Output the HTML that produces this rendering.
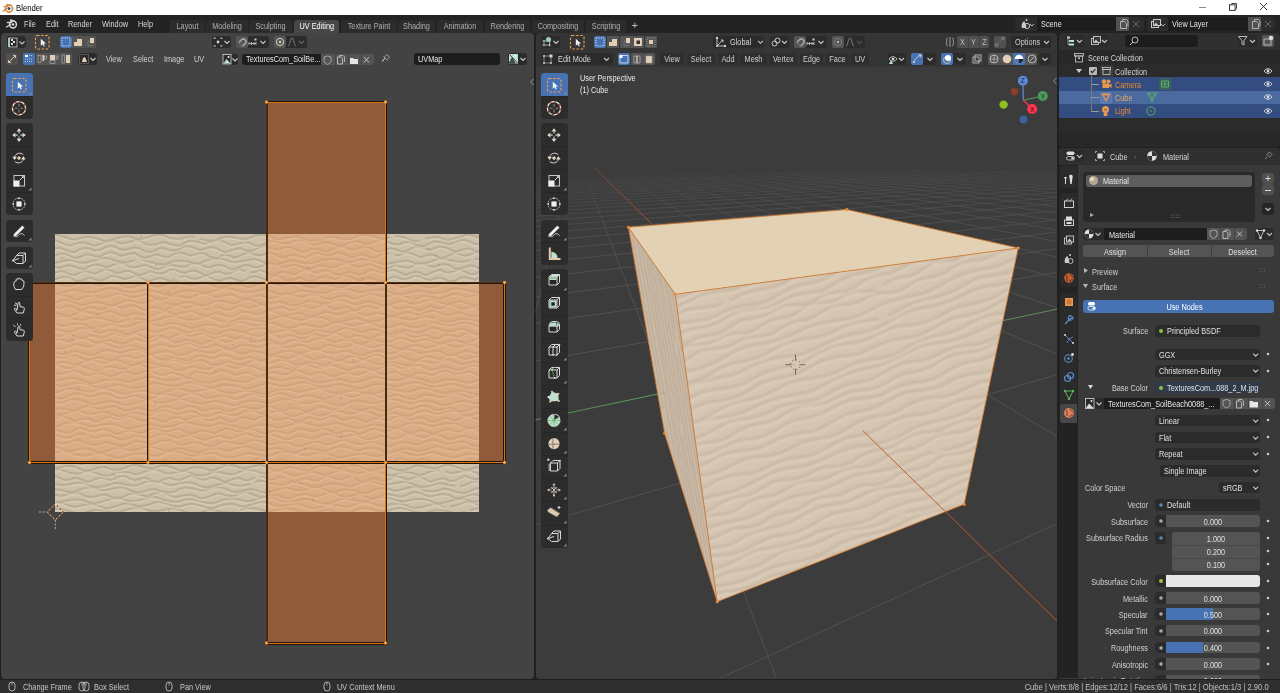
<!DOCTYPE html><html><head><meta charset="utf-8"><style>
html,body{margin:0;padding:0;width:1280px;height:693px;overflow:hidden;background:#202020;}
body{position:relative;font-family:"Liberation Sans",sans-serif;}
div{position:absolute;box-sizing:border-box;}
.t{white-space:nowrap;}
</style></head><body>
<div style="left:0px;top:0px;width:1280px;height:15px;background:#ffffff;"></div>
<svg style="position:absolute;left:2px;top:3px;" width="12" height="10" viewBox="0 0 12 10"><circle cx="7" cy="5.5" r="3.6" fill="none" stroke="#e0873a" stroke-width="1.6"/><circle cx="7" cy="5.5" r="1.5" fill="#265787"/><path d="M1 8 L5 5.5 M2 3.6 L6 3.6 M5 1.5 L8 2.5" stroke="#e0873a" stroke-width="1.4" stroke-linecap="round"/></svg>
<div class="t" style="left:16px;top:1.9px;height:12px;line-height:12px;color:#000;font-size:9px;transform:scaleX(0.86);transform-origin:0 0;">Blender</div>
<div style="left:1199px;top:6.5px;width:7px;height:1px;background:#9a8a78;"></div>
<svg style="position:absolute;left:1228px;top:2px;" width="10" height="10" viewBox="0 0 10 10"><rect x="1.5" y="2.8" width="5.6" height="5.6" fill="none" stroke="#222" stroke-width="0.9"/><path d="M2.8 2.8 L3.8 1.5 H8.5 V6.6 L7.1 8.4" fill="none" stroke="#333" stroke-width="0.9"/></svg>
<svg style="position:absolute;left:1259px;top:2px;" width="10" height="10" viewBox="0 0 10 10"><path d="M1 1 L8 8 M8 1 L1 8" stroke="#222" stroke-width="0.9"/></svg>
<div style="left:0px;top:15px;width:1280px;height:18px;background:#232323;"></div>
<svg style="position:absolute;left:5px;top:18px;" width="13" height="12" viewBox="0 0 13 12"><circle cx="8" cy="6.5" r="3.4" fill="none" stroke="#d8d8d8" stroke-width="1.5"/><circle cx="8" cy="6.5" r="1.3" fill="#d8d8d8"/><path d="M1.5 9 L5.5 6.5 M2.5 4.5 L6.5 4.5 M5.5 2 L8.5 3" stroke="#d8d8d8" stroke-width="1.4" stroke-linecap="round"/></svg>
<div class="t" style="left:24px;top:18.4px;height:12px;line-height:12px;color:#d9d9d9;font-size:8.5px;transform:scaleX(0.86);transform-origin:0 0;">File</div>
<div class="t" style="left:45.5px;top:18.4px;height:12px;line-height:12px;color:#d9d9d9;font-size:8.5px;transform:scaleX(0.86);transform-origin:0 0;">Edit</div>
<div class="t" style="left:68px;top:18.4px;height:12px;line-height:12px;color:#d9d9d9;font-size:8.5px;transform:scaleX(0.86);transform-origin:0 0;">Render</div>
<div class="t" style="left:101.5px;top:18.4px;height:12px;line-height:12px;color:#d9d9d9;font-size:8.5px;transform:scaleX(0.86);transform-origin:0 0;">Window</div>
<div class="t" style="left:138px;top:18.4px;height:12px;line-height:12px;color:#d9d9d9;font-size:8.5px;transform:scaleX(0.86);transform-origin:0 0;">Help</div>
<div style="left:170px;top:19.5px;width:35px;height:13.5px;background:#2c2c2c;border-radius:3px 3px 0 0"></div>
<div class="t" style="left:170px;top:20.4px;width:35px;text-align:center;height:12px;line-height:12px;color:#b0b0b0;font-size:8.5px;transform:scaleX(0.86);transform-origin:50% 0;">Layout</div>
<div style="left:206px;top:19.5px;width:42px;height:13.5px;background:#2c2c2c;border-radius:3px 3px 0 0"></div>
<div class="t" style="left:206px;top:20.4px;width:42px;text-align:center;height:12px;line-height:12px;color:#b0b0b0;font-size:8.5px;transform:scaleX(0.86);transform-origin:50% 0;">Modeling</div>
<div style="left:249px;top:19.5px;width:43px;height:13.5px;background:#2c2c2c;border-radius:3px 3px 0 0"></div>
<div class="t" style="left:249px;top:20.4px;width:43px;text-align:center;height:12px;line-height:12px;color:#b0b0b0;font-size:8.5px;transform:scaleX(0.86);transform-origin:50% 0;">Sculpting</div>
<div style="left:293.5px;top:19.5px;width:45.5px;height:13.5px;background:#474747;border-radius:3px 3px 0 0"></div>
<div class="t" style="left:293.5px;top:20.4px;width:45.5px;text-align:center;height:12px;line-height:12px;color:#ffffff;font-size:8.5px;transform:scaleX(0.86);transform-origin:50% 0;">UV Editing</div>
<div style="left:341px;top:19.5px;width:56px;height:13.5px;background:#2c2c2c;border-radius:3px 3px 0 0"></div>
<div class="t" style="left:341px;top:20.4px;width:56px;text-align:center;height:12px;line-height:12px;color:#b0b0b0;font-size:8.5px;transform:scaleX(0.86);transform-origin:50% 0;">Texture Paint</div>
<div style="left:398px;top:19.5px;width:37px;height:13.5px;background:#2c2c2c;border-radius:3px 3px 0 0"></div>
<div class="t" style="left:398px;top:20.4px;width:37px;text-align:center;height:12px;line-height:12px;color:#b0b0b0;font-size:8.5px;transform:scaleX(0.86);transform-origin:50% 0;">Shading</div>
<div style="left:437px;top:19.5px;width:46px;height:13.5px;background:#2c2c2c;border-radius:3px 3px 0 0"></div>
<div class="t" style="left:437px;top:20.4px;width:46px;text-align:center;height:12px;line-height:12px;color:#b0b0b0;font-size:8.5px;transform:scaleX(0.86);transform-origin:50% 0;">Animation</div>
<div style="left:485px;top:19.5px;width:45px;height:13.5px;background:#2c2c2c;border-radius:3px 3px 0 0"></div>
<div class="t" style="left:485px;top:20.4px;width:45px;text-align:center;height:12px;line-height:12px;color:#b0b0b0;font-size:8.5px;transform:scaleX(0.86);transform-origin:50% 0;">Rendering</div>
<div style="left:532px;top:19.5px;width:52px;height:13.5px;background:#2c2c2c;border-radius:3px 3px 0 0"></div>
<div class="t" style="left:532px;top:20.4px;width:52px;text-align:center;height:12px;line-height:12px;color:#b0b0b0;font-size:8.5px;transform:scaleX(0.86);transform-origin:50% 0;">Compositing</div>
<div style="left:586px;top:19.5px;width:40px;height:13.5px;background:#2c2c2c;border-radius:3px 3px 0 0"></div>
<div class="t" style="left:586px;top:20.4px;width:40px;text-align:center;height:12px;line-height:12px;color:#b0b0b0;font-size:8.5px;transform:scaleX(0.86);transform-origin:50% 0;">Scripting</div>
<div class="t" style="left:631.5px;top:18.9px;height:12px;line-height:12px;color:#bbb;font-size:11px;transform:scaleX(1.0);transform-origin:0 0;">+</div>
<div style="left:1015px;top:17px;width:129px;height:14px;background:#2c2c2c;border-radius:3px"></div>
<div style="left:1037px;top:17px;width:79px;height:14px;background:#1d1d1d;"></div>
<div style="left:1116px;top:17px;width:13px;height:14px;background:#505050;"></div>
<div class="t" style="left:1041px;top:17.799999999999997px;height:12px;line-height:12px;color:#e0e0e0;font-size:8.5px;transform:scaleX(0.86);transform-origin:0 0;">Scene</div>
<svg style="position:absolute;left:1118px;top:18px;" width="11" height="12" viewBox="0 0 11 12"><path d="M2.5 3.5 H6.5 L8.5 5.5 V10.5 H2.5 Z" fill="none" stroke="#bbb" stroke-width="0.9"/><path d="M4.5 3.5 V1.5 H8.5 L10 3 V8.5" fill="none" stroke="#bbb" stroke-width="0.9"/></svg>
<svg style="position:absolute;left:1131px;top:19px;" width="10" height="10" viewBox="0 0 10 10"><path d="M2 2 L8 8 M8 2 L2 8" stroke="#666" stroke-width="1"/></svg>
<svg style="position:absolute;left:1019px;top:18px;" width="16" height="12" viewBox="0 0 16 12"><path d="M3 10 C2 7 3.5 4 5.5 3 C6 6 8 6 7 10 Z" fill="#c9c9c9"/><circle cx="8" cy="8" r="2.6" fill="none" stroke="#c9c9c9" stroke-width="1"/><circle cx="7.5" cy="2" r="1" fill="#c9c9c9"/><path d="M11 6 L13 8 L15 6" stroke="#bbb" fill="none" stroke-width="1"/></svg>
<div style="left:1147px;top:17px;width:128px;height:14px;background:#2c2c2c;border-radius:3px"></div>
<div style="left:1168px;top:17px;width:80px;height:14px;background:#1d1d1d;"></div>
<div style="left:1248px;top:17px;width:13px;height:14px;background:#505050;"></div>
<div class="t" style="left:1172px;top:17.799999999999997px;height:12px;line-height:12px;color:#e0e0e0;font-size:8.5px;transform:scaleX(0.86);transform-origin:0 0;">View Layer</div>
<svg style="position:absolute;left:1250px;top:18px;" width="11" height="12" viewBox="0 0 11 12"><path d="M2.5 3.5 H6.5 L8.5 5.5 V10.5 H2.5 Z" fill="none" stroke="#bbb" stroke-width="0.9"/><path d="M4.5 3.5 V1.5 H8.5 L10 3 V8.5" fill="none" stroke="#bbb" stroke-width="0.9"/></svg>
<svg style="position:absolute;left:1263px;top:19px;" width="10" height="10" viewBox="0 0 10 10"><path d="M2 2 L8 8 M8 2 L2 8" stroke="#666" stroke-width="1"/></svg>
<svg style="position:absolute;left:1150px;top:18px;" width="16" height="12" viewBox="0 0 16 12"><rect x="1.5" y="3.5" width="7" height="6" fill="none" stroke="#c9c9c9" stroke-width="1"/><rect x="3.5" y="1.5" width="7" height="6" fill="#3a3a3a" stroke="#c9c9c9" stroke-width="1"/><path d="M4 7 L6 4.5 L8 7 Z" fill="#c9c9c9"/><path d="M11 6 L13 8 L15 6" stroke="#bbb" fill="none" stroke-width="1"/></svg>
<div style="left:1px;top:33px;width:532.5px;height:645.7px;background:#434343;border-radius:4px"></div>
<div style="left:6.5px;top:36px;width:19px;height:12px;background:#2b2b2b;border-radius:3px;"></div>
<svg style="position:absolute;left:8px;top:37px;" width="18" height="11" viewBox="0 0 18 11"><rect x="1" y="1" width="8" height="9" fill="#2a2a2a" stroke="#cfcfcf" stroke-width="0.8"/><path d="M3 2 H5 V4 H3 Z M5 4 H7 V6 H5 Z M3 6 H5 V8 H3 Z" fill="#ddd"/><path d="M1 1 V10" stroke="#b9e3d0" stroke-width="1.5"/><path d="M11.5 4.5 L14.0 7.0 L16.5 4.5" fill="none" stroke="#c8c8c8" stroke-width="1.1"/></svg>
<svg style="position:absolute;left:34px;top:34px;" width="16" height="16" viewBox="0 0 16 16"><rect x="1.5" y="1.5" width="13.5" height="13.5" rx="1.5" fill="none" stroke="#e8a050" stroke-width="1.15" stroke-dasharray="2.6 1.5"/><path d="M6.8 4.8 V11.8 L8.5 10.2 L9.7 12.5 L10.8 12 L9.7 9.7 L12 9.6 Z" fill="#f2f2f2"/></svg>
<div style="left:60px;top:36px;width:11.5px;height:12px;background:#4772b3;border-radius:2px;"></div>
<div style="left:72px;top:36px;width:11.5px;height:12px;background:#545454;border-radius:0px;"></div>
<div style="left:84px;top:36px;width:12px;height:12px;background:#545454;border-radius:2px;"></div>
<svg style="position:absolute;left:60px;top:36px;" width="12" height="12" viewBox="0 0 12 12"><rect x="2" y="2" width="8" height="8" fill="none" stroke="#eee" stroke-width="0.9" stroke-dasharray="1.2 1.2"/></svg>
<svg style="position:absolute;left:72px;top:36px;" width="12" height="12" viewBox="0 0 12 12"><path d="M2 10 V6 H5 V3 H10 V10 Z" fill="#e3cfb5"/></svg>
<svg style="position:absolute;left:84px;top:36px;" width="12" height="12" viewBox="0 0 12 12"><path d="M4 5 H8 V10 H4 Z" fill="none" stroke="#aaa" stroke-width="0.6" stroke-dasharray="1 1"/><path d="M6 2 H10 V7 H6 Z" fill="#e3cfb5"/></svg>
<div style="left:212px;top:36px;width:19px;height:12px;background:#2b2b2b;border-radius:3px;"></div>
<svg style="position:absolute;left:212px;top:36px;" width="19" height="12" viewBox="0 0 19 12"><path d="M2 3 V2 H4 M8 2 H10 V3 M10 9 V10 H8 M4 10 H2 V9" fill="none" stroke="#ccc" stroke-width="0.9"/><circle cx="6" cy="6" r="1.4" fill="#b9e3d0"/><path d="M12.5 5 L15.0 7.5 L17.5 5" fill="none" stroke="#c8c8c8" stroke-width="1.1"/></svg>
<div style="left:236px;top:36px;width:33px;height:12px;background:#2b2b2b;border-radius:3px;"></div>
<div style="left:236px;top:36px;width:12px;height:12px;background:#555;border-radius:2px;"></div>
<svg style="position:absolute;left:236px;top:36px;" width="33" height="12" viewBox="0 0 33 12"><path d="M2.8 6.5 L5.5 3.8 A2.6 2.6 0 0 1 9.2 7.5 L6.5 10.2" fill="none" stroke="#a8a8a8" stroke-width="1.6"/><path d="M2.8 6.5 L4.2 7.9 M6.5 10.2 L5.1 8.8" stroke="#777" stroke-width="1.6"/><path d="M13 7.5 H20 M13 6 V9 M15.5 6 V9 M18 6 V9 M20 6 V9" stroke="#ddd" stroke-width="0.7"/><rect x="18.5" y="2.5" width="2" height="2" fill="#b9e3d0"/><path d="M24.5 5 L27.0 7.5 L29.5 5" fill="none" stroke="#c8c8c8" stroke-width="1.1"/></svg>
<div style="left:274px;top:36px;width:33px;height:12px;background:#2b2b2b;border-radius:3px;"></div>
<div style="left:274px;top:36px;width:12px;height:12px;background:#555;border-radius:2px;"></div>
<svg style="position:absolute;left:274px;top:36px;" width="33" height="12" viewBox="0 0 33 12"><circle cx="6" cy="6" r="3.6" fill="none" stroke="#e3cfb5" stroke-width="1"/><circle cx="6" cy="6" r="1.2" fill="#b9e3d0"/><path d="M14 10 C16 10 16 2 18 2 C20 2 20 10 22 10" fill="none" stroke="#888" stroke-width="0.9"/><path d="M25 5 L27.5 7.5 L30 5" fill="none" stroke="#666" stroke-width="1.1"/></svg>
<div style="left:6px;top:53px;width:12px;height:12px;background:#505050;border-radius:2px;"></div>
<svg style="position:absolute;left:6px;top:53px;" width="12" height="12" viewBox="0 0 12 12"><path d="M2.5 9.5 L9.5 2.5 M2.5 9.5 V7 M2.5 9.5 H5 M9.5 2.5 V5 M9.5 2.5 H7" fill="none" stroke="#e3cfb5" stroke-width="0.9"/></svg>
<div style="left:23px;top:53px;width:12px;height:12px;background:#4772b3;border-radius:2px;"></div>
<div style="left:36px;top:53px;width:12px;height:12px;background:#545454;border-radius:0px;"></div>
<div style="left:48px;top:53px;width:12px;height:12px;background:#545454;border-radius:0px;"></div>
<div style="left:60px;top:53px;width:12px;height:12px;background:#545454;border-radius:2px;"></div>
<svg style="position:absolute;left:23px;top:53px;" width="12" height="12" viewBox="0 0 12 12"><rect x="2" y="2" width="3" height="2" fill="#fff"/><path d="M2 6 H10 M2 8.5 H10 M6 2.5 H10" stroke="#ddd" stroke-width="0.8" stroke-dasharray="1 1"/></svg>
<svg style="position:absolute;left:36px;top:53px;" width="12" height="12" viewBox="0 0 12 12"><rect x="2" y="2.5" width="3" height="7" fill="none" stroke="#aaa" stroke-width="0.7"/><rect x="6.5" y="2" width="1.6" height="6" fill="#e3cfb5"/><rect x="8.5" y="3" width="2" height="3" fill="none" stroke="#aaa" stroke-width="0.7"/></svg>
<svg style="position:absolute;left:48px;top:53px;" width="12" height="12" viewBox="0 0 12 12"><rect x="2" y="2" width="5" height="5" fill="#e3cfb5"/><rect x="2" y="7.5" width="5" height="3" fill="none" stroke="#aaa" stroke-width="0.7"/><rect x="8" y="3" width="2" height="3" fill="none" stroke="#aaa" stroke-width="0.7"/></svg>
<svg style="position:absolute;left:60px;top:53px;" width="12" height="12" viewBox="0 0 12 12"><rect x="2" y="2" width="2.5" height="8" fill="none" stroke="#aaa" stroke-width="0.7"/><rect x="6" y="2" width="4" height="8" fill="#e3cfb5"/></svg>
<div style="left:78px;top:53px;width:19px;height:12px;background:#2b2b2b;border-radius:3px;"></div>
<svg style="position:absolute;left:78px;top:53px;" width="19" height="12" viewBox="0 0 19 12"><rect x="1.5" y="1.5" width="9" height="9" fill="none" stroke="#aaa" stroke-width="0.7" stroke-dasharray="1 1"/><path d="M4 9 L5 5 L7 4 L9 9 Z" fill="#e3cfb5"/><path d="M12.5 5 L15.0 7.5 L17.5 5" fill="none" stroke="#c8c8c8" stroke-width="1.1"/></svg>
<div class="t" style="left:106px;top:53.4px;height:12px;line-height:12px;color:#d0d0d0;font-size:8.5px;transform:scaleX(0.86);transform-origin:0 0;">View</div>
<div class="t" style="left:132.5px;top:53.4px;height:12px;line-height:12px;color:#d0d0d0;font-size:8.5px;transform:scaleX(0.86);transform-origin:0 0;">Select</div>
<div class="t" style="left:163.5px;top:53.4px;height:12px;line-height:12px;color:#d0d0d0;font-size:8.5px;transform:scaleX(0.86);transform-origin:0 0;">Image</div>
<div class="t" style="left:194px;top:53.4px;height:12px;line-height:12px;color:#d0d0d0;font-size:8.5px;transform:scaleX(0.86);transform-origin:0 0;">UV</div>
<div style="left:222px;top:54px;width:16px;height:11px;background:#2b2b2b;border-radius:3px;"></div>
<svg style="position:absolute;left:222px;top:54px;" width="16" height="11" viewBox="0 0 16 11"><rect x="1" y="0.5" width="8" height="9.5" fill="none" stroke="#ddd" stroke-width="0.8"/><path d="M1.5 9.5 L4.5 5 L8.5 9.5 Z" fill="#b9e3d0"/><circle cx="6.5" cy="3" r="0.9" fill="#fff"/><path d="M10.5 4.5 L13.0 7.0 L15.5 4.5" fill="none" stroke="#c8c8c8" stroke-width="1.1"/></svg>
<div style="left:242px;top:53.5px;width:79px;height:11.5px;background:#1d1d1d;border-radius:3px 0 0 3px"></div>
<div class="t" style="left:246px;top:53.4px;height:12px;line-height:12px;color:#e6e6e6;font-size:8.5px;transform:scaleX(0.86);transform-origin:0 0;">TexturesCom_SoilBe...</div>
<div style="left:321px;top:53.5px;width:53px;height:11.5px;background:#545454;border-radius:0 3px 3px 0"></div>
<svg style="position:absolute;left:321px;top:53.5px;" width="53" height="11.5" viewBox="0 0 53 11.5"><path d="M6.5 2 L10 3 V6.5 C10 8.5 8 10 6.5 10.5 C5 10 3 8.5 3 6.5 V3 Z" fill="none" stroke="#bbb" stroke-width="0.8"/><path d="M16.5 3 H20 L21.5 4.5 V10 H16.5 Z M18.5 3 V1.5 H22 L23.5 3 V8" fill="none" stroke="#ccc" stroke-width="0.8"/><path d="M29 4 H32 L33 5 H37 V10 H29 Z" fill="#e6e6e6"/><path d="M43 3 L48 8.5 M48 3 L43 8.5" stroke="#ccc" stroke-width="0.9"/></svg>
<div style="left:334.5px;top:53.5px;width:0.6px;height:11.5px;background:#444;"></div>
<div style="left:347.5px;top:53.5px;width:0.6px;height:11.5px;background:#444;"></div>
<div style="left:360.5px;top:53.5px;width:0.6px;height:11.5px;background:#444;"></div>
<svg style="position:absolute;left:378px;top:53px;" width="14" height="12" viewBox="0 0 14 12"><path d="M4 9 L6.5 6.5 M6.5 4 L9 1.5 L11.5 4 L9 6.5 M5.5 3.5 L9.5 7.5 M7 5 L4 8" fill="none" stroke="#aaa" stroke-width="0.9"/></svg>
<div style="left:414px;top:53px;width:86px;height:12px;background:#1d1d1d;border-radius:3px"></div>
<div class="t" style="left:418px;top:53.4px;height:12px;line-height:12px;color:#e6e6e6;font-size:8.5px;transform:scaleX(0.86);transform-origin:0 0;">UVMap</div>
<div style="left:508px;top:53px;width:19px;height:12px;background:#2b2b2b;border-radius:3px;"></div>
<svg style="position:absolute;left:508px;top:53px;" width="19" height="12" viewBox="0 0 19 12"><rect x="1" y="1" width="9" height="9.5" fill="#b9e3d0"/><path d="M1.5 1.5 L9.5 10 M1.5 10 L4 5 L7 10 Z" stroke="#2a2a2a" stroke-width="0.9" fill="#555"/><circle cx="7.5" cy="3" r="0.9" fill="#fff"/><path d="M12.5 5 L15.0 7.5 L17.5 5" fill="none" stroke="#c8c8c8" stroke-width="1.1"/></svg>
<svg style="position:absolute;left:528.5px;top:76.5px;" width="6" height="10" viewBox="0 0 6 10"><path d="M4.5 2 L1.5 5 L4.5 8" fill="none" stroke="#999" stroke-width="0.9"/></svg>
<svg style="position:absolute;left:0;top:0" width="0" height="0"><defs><path id="rip" d="M-5 1.0l5 -.7 5 1.2 5 1.5 5 1.7 5 .8M20 5.5l5 -1.4 5 -1.3 5 .1 5 .8 5 1.6 5 1.7 5 -.6 5 -1.9 5 -1.3 5 -1 5 .3 5 1.7M80 4.2l5 .6 5 -1.1 5 -1.3 5 -1.5 5 -.7 5 1.7 5 2 5 .7 5 .1 5 -1.1 5 -1.4 5 .5M145 4.6l5 1.3 5 .9 5 -.5 5 -2.3 5 -1.4 5 .2 5 .6 5 1.2 5 .5 5 -1.6 5 -2 5 -.8 5 0 5 1.5 5 2.2 5 .3 5 -1 5 -.8 5 -.7 5 .6 5 2.3 5 1.5 5 -.2 5 -.9M270 3.8l5 -1.5 5 .9 5 1.3 5 .4 5 -.1 5 -1.6 5 -2.3 5 -.4 5 1.1 5 1.2 5 1.5 5 .3 5 -1.6M340 1.9l5 .5 5 1 5 2 5 1.6 5 -.8M370 4.5l5 -1 5 -.7 5 .8 5 1.7 5 .2 5 -1.4M400 4.1l5 -1.5 5 -1.7 5 -.5 5 1.8 5 1.5M-5 6.9l5 -.8 5 2 5 2 5 1.5 5 -1.8 5 -1.5 5 .4 5 1.3 5 1.6 5 -1.7 5 -2.4 5 -1.2 5 .7 5 2.2 5 -.4 5 -1.3 5 -1.5 5 .7 5 3 5 1.1 5 -.2 5 -2 5 -.5 5 1.9 5 1.1 5 .1 5 -2.7 5 -2 5 .6 5 1.2 5 1.3 5 -1.8 5 -1.7 5 .1 5 1.8 5 2.8 5 -.4 5 -1.3 5 -1 5 .8 5 2.5 5 -.1 5 -1.5 5 -2.5 5 -.7 5 1.9 5 .7 5 -.4 5 -2.3 5 -.9 5 1.8 5 2 5 1.4 5 -1.6 5 -1.2 5 .7 5 1.6 5 1.8 5 -1.6 5 -2.2 5 -1.2 5 .6 5 2 5 -.7 5 -1.6 5 -1.8 5 .5 5 2.9 5 1 5 -.2 5 -1.8 5 -.2 5 2.2 5 1.4 5 .3 5 -2.6 5 -1.8 5 .6 5 1.1 5 1 5 -2.1 5 -1.9 5 -.2 5 1.6 5 2.6 5 -.4M-5 15.9l5 -1.9 5 -.4 5 2.1 5 1.8 5 .4 5 -2.8 5 -1.1 5 .5 5 1.8 5 -.4 5 -2.7 5 -1.3 5 .6 5 2.8 5 .2 5 -1.1 5 -1.2 5 1.2 5 2.9 5 .4 5 -1.2 5 -2.6 5 .7 5 1.4 5 .5 5 -2 5 -2.6 5 .5 5 1.6 5 1.9 5 -1.4 5 -1.4 5 .5 5 2.4 5 2.1 5 -1.5 5 -1.6M180 15.0l5 -1 5 2 5 .9 5 -1.5 5 -2.4 5 -1.3 5 2.2 5 1.2 5 .1 5 -2.1 5 -.2 5 2.2 5 2.1 5 .4 5 -2.5 5 -.6 5 .7 5 2 5 -.7 5 -2.8 5 -1.4 5 .4 5 2.6 5 -.3M300 15.0l5 -1.3 5 -1.4 5 1.5 5 2.9 5 .6 5 -1.1 5 -2.1 5 1.1 5 1.6 5 .5 5 -2.2 5 -2.7 5 .5 5 1.3 5 1.5 5 -1.9 5 -1.4 5 .5 5 2.5 5 2.1 5 -1.3 5 -1.3 5 -.6 5 2.4 5 .9M-5 21.1l5 .5 5 -1.8 5 -.5 5 2.6 5 2 5 -.8 5 -2.7 5 .2 5 1.5 5 .6 5 -3.1 5 -1.5 5 .8 5 2.8 5 -.9 5 -1.3 5 -.4 5 3.4 5 1.1 5 -1 5 -2.5 5 1.2 5 1.4 5 -.2 5 -3.3 5 -1 5 1.4 5 2 5 -1.2 5 -1.6 5 .8 5 3 5 1.1M165 21.7l5 -1.3 5 1.2 5 1.8 5 -1.6 5 -2.6 5 -1 5 2.4 5 .6 5 -1.1 5 -2 5 2.2 5 2.3 5 .9 5 -2.6 5 -.2 5 1.4 5 1.7 5 -2.5 5 -2.2 5 -.5 5 2.5 5 -.1 5 -1.7 5 -1.2 5 2.5 5 2.3 5 -.2 5 -2.1 5 .2 5 2.2 5 .6 5 -2.4 5 -2.5 5 .9M340 21.2l5 -.2 5 -2.6 5 .1 5 2.2 5 2.5 5 -1.5 5 -1.1 5 .3 5 2.9 5 -.6 5 -2.2 5 -2.4 5 1.8 5 1 5 -.7 5 -2.8 5 .8M-5 30.3l5 -1.3 5 -1.3 5 -1.2 5 -.6 5 1.2 5 1.5 5 0 5 -1 5 -1.2 5 -1.8 5 -.9 5 1.1 5 1.8 5 .9 5 .5 5 -.4 5 -1.5M85 25.2l5 1.1 5 1.5 5 1.3 5 1.2 5 -.2 5 -1.9 5 -1.5 5 -.1 5 .2 5 1 5 1.3 5 -.3 5 -1.9 5 -1.6 5 -.8 5 -.4 5 1.3 5 2 5 .6 5 -.7 5 -.8 5 -.9 5 -.5 5 1.4 5 2.2 5 1.1 5 .1 5 -.6 5 -1.6 5 -1.4 5 .4 5 1.3 5 .7 5 .4 5 -.6 5 -2.1 5 -1.9 5 -.1 5 .7 5 1 5 1.5 5 .4 5 -1.4 5 -1.3 5 -.1 5 .5 5 1.4 5 2.2 5 .9 5 -.9 5 -1.1 5 -1 5 -.8 5 .7 5 1.8 5 .6 5 -.7 5 -1.2 5 -1.7 5 -1.7 5 .3 5 1.6 5 1 5 .4 5 -.1 5 -1.4M420 24.5l5 .5M-5 30.8l5 2 5 1 5 -1.9 5 -.8 5 1.6 5 1.9 5 .2 5 -3 5 -1.2 5 .2 5 2.1 5 -.7 5 -2.1 5 -1.3 5 1.3 5 2.9 5 .1 5 -1.1 5 -1.4 5 2.1 5 2 5 0 5 -2.2 5 -2.1 5 1.1 5 1.1 5 .2 5 -2.9 5 -1 5 1.1 5 2.5 5 .7 5 -1.9 5 -.4M165 30.9l5 1.1 5 3 5 -.4 5 -1.9 5 -2 5 .8 5 1.8 5 -.7 5 -2 5 -2.2 5 1.8 5 1.9 5 .9 5 -1.8 5 -.8 5 1.8 5 2.2 5 .7 5 -2.7 5 -1.1 5 .2 5 2.1 5 -.6 5 -2.5 5 -1.6 5 .8 5 2.7 5 0 5 -1.1 5 -1.4 5 2.1 5 2.3 5 .5 5 -1.8 5 -2 5 1.2M345 32.2l5 1.2 5 .2 5 -3 5 -1.5 5 .7 5 2.2 5 .6 5 -2 5 -.5 5 1.1 5 3.2 5 .1 5 -1.5 5 -1.7 5 .8 5 1.9M-5 39.1l5 -.4 5 -1.8 5 .8 5 2.8 5 .5 5 -2.6 5 -1.5 5 1.4 5 1.2 5 -2.1 5 -2.3 5 .7 5 2.8 5 .2 5 -1.8 5 -.2 5 3 5 1.3 5 -1.7 5 -2.3 5 1.1 5 1.4 5 -1 5 -3.1 5 -.1 5 2.2 5 1.4 5 -2 5 -.5 5 2 5 2.7 5 -1.3 5 -2.1 5 -.2 5 2.3 5 -.7 5 -2.6 5 -1.7 5 2.3M195 38.6l5 -.9 5 -1.9 5 2 5 2.5 5 .5 5 -2.8 5 -.2 5 1.5 5 1 5 -3 5 -1.8 5 .7 5 2.5 5 -1 5 -1.6 5 .2 5 3.6 5 .6 5 -1.5 5 -1.7 5 2.1 5 .9 5 -1.4 5 -3.4 5 .7 5 1.7 5 .6 5 -2.7 5 .2 5 2.3 5 2.6 5 -1.9 5 -1.2 5 .6 5 2.5 5 -1.5 5 -2.5 5 -1.4 5 2.5 5 .3 5 -1.5 5 -1.8 5 2.7 5 2.2 5 .1 5 -2.6M-5 43.5l5 1.7 5 -1.8 5 -1 5 .8 5 3.4 5 .2 5 -1.5 5 -1.9 5 2 5 1 5 -.8 5 -3.4M55 42.2l5 -.4 5 1.7 5 1.5 5 -1.5 5 -1.6 5 1.3 5 2.8 5 1 5 -2.2 5 -.8 5 1 5 2.1 5 -1.7M125 43.0l5 -1.4 5 2.4 5 .6 5 -.9 5 -2.3 5 1.7 5 2.5 5 1.2 5 -2 5 -1 5 1.5 5 1.7 5 -1 5 -3.1 5 -.7 5 1.4 5 1.6 5 -2.1 5 -1.3 5 .5 5 3.5 5 .4 5 -1.2 5 -1.6 5 2.2 5 1.4 5 -.6 5 -3.2 5 -.8 5 1.5 5 1.2 5 -1.7 5 -2.1 5 1.1 5 2.7 5 1.3 5 -2 5 -.6 5 1.2 5 2.6 5 -1.4 5 -2.3 5 -1.6 5 2.1 5 .5 5 -1.2 5 -2.6 5 1.2 5 2.5 5 1.3 5 -1.8 5 -.9 5 1.8 5 2.1 5 -.5 5 -3.1 5 -.7 5 1.2 5 1.4 5 -2.3M-5 50.0l5 -.4 5 1.2 5 .9 5 .4 5 -1.9 5 -2.4 5 -.2 5 .8M35 48.4l5 2 5 1.1 5 -1.5 5 -1.1 5 -.1 5 1.3 5 2.7 5 .6 5 -1.2 5 -1.4 5 -1.3 5 1.1 5 1.7 5 -.3 5 -1.1 5 -2.4 5 -1.3 5 1.4 5 1.5 5 .9 5 -.5 5 -2 5 -.1 5 1.6 5 1.9 5 1.6 5 -1 5 -2 5 -.4 5 .3 5 1.7 5 .8 5 -1.9 5 -1.9 5 -1.4 5 .3 5 2.3 5 .6 5 -.8 5 -1.2 5 -1.1 5 1.5 5 2.5 5 1 5 0 5 -1.9M265 50.9l5 -1.3 5 1.2 5 1.2 5 .9 5 -.8 5 -2.9 5 -1.2 5 .3 5 1.3 5 1.6 5 -.9 5 -1.8 5 -.5 5 .5 5 2.5 5 1.9 5 -.6 5 -1.1 5 -1.3 5 .3 5 2.2 5 .6 5 -.8 5 -1.8 5 -2.4 5 .4 5 1.5 5 .8 5 .1 5 -2 5 -1.4 5 1.1M-5 60.4l5 -.3 5 -1.1 5 -1.3 5 -1.5 5 -.6 5 1.2 5 1.3 5 .1 5 -.5 5 -1.1 5 -1.9 5 -1 5 .9 5 1.5 5 1.2 5 .9 5 .1 5 -1.4 5 -1.2 5 .4 5 1.1 5 1.2 5 1.6 5 .6 5 -1.4 5 -1.8 5 -.8 5 -.4 5 .4 5 1.4 5 .9 5 -.9 5 -1.6 5 -1.3 5 -1 5 0 5 1.7 5 1.8 5 .4 5 -.4 5 -.6 5 -1.2 5 -.5 5 1.5 5 1.9 5 1 5 .4 5 -.4 5 -1.8 5 -1.6 5 .1 5 .9 5 .7 5 .8 5 -.1 5 -1.8 5 -2 5 -.6 5 .2 5 .8 5 1.7 5 1.2 5 -.6 5 -1.3 5 -.6 5 -.2 5 .6 5 2 5 1.9 5 .1 5 -.9 5 -1 5 -1.3 5 -.7 5 1.1 5 1.4 5 .3 5 -.5 5 -1 5 -2 5 -1.5 5 .4 5 1.4 5 1 5 .8 5 .2M-5 63.5l5 -1.4 5 -1.4 5 .7 5 1.6 5 2.3 5 -.6 5 -2.2 5 -1.2M40 61.1l5 2.1 5 .2 5 -1.8 5 -1.8 5 -1.2M65 58.6l5 2.1 5 1.8 5 .2 5 -.9 5 -1.7 5 1.4 5 2.2 5 1.3 5 -.4 5 -2.6 5 -.8 5 .8 5 1.3 5 .4 5 -2.5 5 -1.8 5 -.2 5 1.5 5 2.2 5 -.7 5 -1.2 5 -.8 5 1.1 5 2.9 5 .7 5 -.9M200 62.0l5 -.9 5 1.8 5 .8 5 -.2 5 -2.2 5 -2.4 5 .8 5 1.5 5 1.5 5 -.6 5 -2 5 .2 5 1.3 5 2.6 5 .9 5 -1.9 5 -1.3 5 -.4 5 1.7 5 1.3 5 -1.5 5 -1.9 5 -2 5 .8 5 2.1 5 .3 5 -.6 5 -1.9 5 .1 5 2.4 5 1.7M360 64.8l5 -1.9 5 -1.5 5 .8 5 1.3 5 1.2 5 -1.7 5 -2.6 5 -.8 5 .5 5 2.3 5 0 5 -1.6 5 -1.1M-5 68.7l5 0 5 -1.9 5 -1.3 5 1.2 5 1.8 5 2 5 .3 5 -1.9 5 -.9 5 .3 5 1.3 5 1.8 5 -.8 5 -2.2 5 -1.6 5 -.8 5 1.6 5 1.5 5 -.7 5 -1.2 5 -1.5 5 0M110 68.2l5 1.7 5 .5 5 -.8 5 -1.9 5 .4 5 1.6 5 1.2 5 .4 5 -2 5 -2.4 5 -.2 5 .6 5 1.5M175 68.8l5 .4 5 -2 5 -1.4 5 -.2 5 1.3 5 2.7 5 .6 5 -1 5 -1 5 -.7 5 1.6 5 2.1 5 0 5 -1.1 5 -2.3 5 -1.4 5 1.3 5 1 5 .4 5 -.9 5 -2.5 5 -.4 5 1.4 5 1.8 5 1.7 5 -.8 5 -1.7 5 0 5 .8 5 2.1 5 1.3 5 -1.6 5 -1.8 5 -1.4 5 0 5 2 5 .4 5 -1.3 5 -1.6 5 -1.6 5 1 5 2.4 5 1 5 .1 5 -1.4 5 -1.2 5 1.5 5 1.7 5 1.3 5 -.1M-5 70.6l5 1.9 5 1.6 5 -2 5 -.7 5 2 5 3 5 -1.7 5 -1.6 5 .4 5 2.4 5 -1.8 5 -2.6 5 -.7 5 2.7 5 -.1 5 -1.9 5 -.2 5 3.1 5 1.6 5 -1.9 5 -1.2 5 1.6 5 1.6 5 -2.6 5 -2.3 5 .3 5 2.6 5 -1.4 5 -1.6 5 .4 5 3.7 5 .1M160 73.6l5 -.7 5 2.7 5 .1 5 -2.6 5 -2.1 5 1.6 5 1.4 5 -1.9 5 -1.5 5 1.7 5 3.2 5 -.9 5 -1.5 5 .3 5 3 5 -1.2 5 -2.6 5 -1.4 5 2.5 5 -.2 5 -1.9 5 -1.3 5 3 5 1.9 5 -1.2 5 -1.5 5 1.9 5 2.1 5 -1.8 5 -2.6 5 -.1 5 2.3 5 -1.2 5 -2.2 5 -.4 5 3.6 5 .5 5 -1.2 5 -1 5 3.1 5 .8 5 -2 5 -2.6 5 1.5 5 1.2 5 -1.7 5 -2.5 5 1.2 5 3 5 -.2 5 -1.7 5 .3 5 3.3M-5 80.3l5 -1.2 5 .3 5 2.3 5 -.1 5 -1.6 5 -2.5 5 -.7 5 2 5 .9 5 -.1 5 -2.1 5 -.7 5 2.1 5 2.1 5 1.2 5 -1.9 5 -1.3 5 .6 5 1.5M95 82.5l5 -2.2 5 -2.2 5 -1 5 1.1 5 2 5 -.9 5 -1.4 5 -1.3 5 1.4 5 2.8 5 .7 5 -.6 5 -2 5 .4 5 2 5 .9 5 -.7 5 -3.1 5 -1 5 .9 5 1.4 5 .4 5 -2.4 5 -1 5 .7 5 2.5 5 1.8 5 -1.3 5 -1.1 5 -.5 5 2.1 5 1.7 5 -1 5 -2 5 -2.2 5 1 5 1.5 5 .1 5 -1.4 5 -2.4 5 1 5 2 5 1.9 5 -.2 5 -2.1 5 .2 5 1.2 5 2.3 5 -.2 5 -2.5 5 -1.5 5 -.3 5 2.1 5 .3 5 -1.8 5 -1.7 5 -.6 5 2.6 5 1.7 5 0 5 -1.4 5 -1 5 2 5 1.7 5 .7 5 -2M-5 84.9l5 -2 5 -1.4 5 .8 5 1.5 5 1 5 .9 5 -.3 5 -1.6 5 -.9 5 .8 5 1.2 5 1.7 5 1.5 5 -.3 5 -1.8 5 -1.2M80 84.4l5 .1 5 1.3 5 1.3 5 -.6 5 -1.7 5 -1.5 5 -1.2 5 -.2 5 1.7 5 1.6 5 .2 5 -.5 5 -.9 5 -1.3 5 .2 5 2 5 1.7 5 .9M175 87.7l5 -1.2 5 -1.9 5 -.4 5 .9 5 .9 5 .9 5 .2 5 -1.7 5 -2.2 5 -.9 5 .1 5 .8 5 1.7 5 .9 5 -1.1 5 -1.2 5 -.6 5 -.1 5 1.2 5 2.4M280 87.6l5 -.4 5 -.8 5 -1.2 5 -1.1 5 .7 5 1.7 5 .7 5 -.3 5 -1 5 -2 5 -1.8 5 .4 5 1.2 5 .9 5 .8 5 -.3 5 -1.7 5 -1.2 5 .6 5 1.2M385 85.6l5 1.8 5 .1 5 -1.5 5 -1.1 5 -.3 5 .2 5 1.4 5 1.5M-5 88.2l5 1.3 5 2.1 5 0 5 -1.5 5 -.7 5 -.1 5 1.4 5 2.6 5 .6M45 92.8l5 -1.4 5 -1.5 5 .3 5 1.8 5 .4 5 -.6 5 -1.6 5 -2.3 5 -.2 5 1.6 5 1.3 5 .9M105 91.5l5 -.6 5 -1.9 5 -.1 5 1.3 5 1.7 5 1.9 5 -.2 5 -2.1 5 -1 5 -.2 5 .8 5 1.8 5 -.3 5 -1.9 5 -1.6M180 89.1l5 -1.3 5 .5 5 2.2 5 .8 5 -.5 5 -1 5 -1.4 5 .7 5 2.4 5 1.4 5 .6 5 -.9 5 -2.1 5 -.3 5 1.1 5 1 5 .8 5 -1 5 -2.7 5 -1.1 5 .1 5 1 5 1.9 5 -.1 5 -1.6 5 -.9 5 -.2 5 1.4 5 2.7 5 .8 5 -.9 5 -1M340 91.5l5 -1.4 5 .5 5 2 5 .6 5 -.6 5 -1.6M375 88.6l5 -.4 5 1.4 5 1 5 .7 5 -.8 5 -2.1 5 -.3 5 1.3 5 1.7 5 2M-5 96.6l5 -1.8 5 1.1 5 1.2 5 .4 5 -1.1 5 -2.5 5 0 5 1.4 5 2 5 1.4 5 -1.5 5 -1.2 5 .3 5 1.3 5 2.3 5 -.2 5 -2.1 5 -1.6 5 -.8 5 1.6 5 1.2 5 -1 5 -1.6 5 -1.9 5 .6 5 2.5 5 1.1 5 .2 5 -1.6 5 -1 5 1.7 5 1.7 5 1.3 5 -.9 5 -2.6 5 -.7 5 .4 5 1.4 5 .7 5 -2.2 5 -1.8 5 -.6 5 1.1 5 2.7 5 .2 5 -1 5 -1 5 -.3 5 2.5 5 1.8 5 -.2 5 -1.3 5 -2.3 5 .1 5 1.5 5 .6 5 -.3 5 -2.5 5 -1.7 5 .8 5 1.5 5 1.8 5 -.4 5 -1.8 5 -.2 5 .9 5 2.4 5 1.5 5 -1.4 5 -1.5 5 -1.2 5 .6 5 2 5 -.3 5 -1.5 5 -2.2 5 -1.1 5 1.8 5 1.6 5 .4 5 -.8 5 -1.9 5 .8 5 2 5 1.8 5 .7M-5 99.2l5 2 5 1 5 -2.3 5 -.3 5 2.2 5 2.7 5 -1.4 5 -1.8 5 .2 5 2.3 5 -.8 5 -2.7 5 -1.7 5 2.2 5 1.1 5 -1.1 5 -1.9 5 1.9 5 2.7 5 .5 5 -2.6 5 -.1 5 1.8 5 1.1 5 -2.9 5 -2.1 5 .6 5 2.3 5 -1 5 -1.8 5 0 5 3.4 5 1.1 5 -1.4 5 -1.6 5 2 5 1.4 5 -1.2 5 -3.3 5 0 5 1.7 5 .6 5 -2.6 5 -.5 5 2.1 5 2.7 5 -1.1 5 -1.5 5 .5 5 2.7 5 -.6 5 -2.6 5 -1.8 5 2 5 .8 5 -1.5 5 -2.3 5 1.8 5 2.5 5 .7 5 -2.3 5 .2 5 2.1 5 1.4 5 -2.6 5 -2.1 5 .5 5 2 5 -1.3 5 -2.2 5 -.3 5 3.2 5 1.1 5 -1.2 5 -1.4 5 2.3 5 1.8 5 -.9 5 -3.1 5 0 5 1.5 5 .4 5 -3 5 -.9 5 1.8 5 2.7M-5 106.6l5 -1.8 5 .4 5 1.4 5 .9 5 -2.2 5 -1.5 5 .2 5 2.3 5 2.2 5 -.9 5 -1.2 5 -.7 5 2.1 5 1.8 5 -.7 5 -1.9 5 -2.3 5 1 5 1.3 5 .3 5 -1.8 5 -2.2 5 1 5 1.9 5 2 5 -.8 5 -1.7 5 .4 5 1.5 5 2.3 5 -1 5 -2.2 5 -1.4M165 105.7l5 2.1 5 -.7 5 -1.7 5 -2 5 .6M190 104.0l5 2.7 5 .9 5 -.4 5 -1.9 5 .5 5 2.3 5 1.4 5 -.2 5 -2.9 5 -.8 5 .7 5 1.5 5 -.2 5 -2.8 5 -1.1 5 .3 5 2.7 5 1 5 -1.3 5 -1 5 0 5 2.9 5 1.3 5 -.8 5 -2.1 5 -1.3 5 1.7 5 .8 5 -.3 5 -2.6 5 -1.7 5 1.3 5 1.7 5 1.4 5 -1.8 5 -1 5 .8 5 2.3 5 1.9 5 -1.6 5 -1.6 5 -.9 5 1.4 5 1.5 5 -1.5M415 107.2l5 -2 5 -1.9M-5 111.4l5 2.4 5 1 5 -.9 5 -2 5 -2.2 5 1 5 1.3 5 .5 5 -1.1M40 111.4l5 -2.4 5 .1 5 1.8 5 2 5 1 5 -1.8 5 -.9 5 .6 5 1.7 5 1.8 5 -1.4 5 -2.1 5 -1.4 5 .2 5 2.1 5 -.2 5 -1.4 5 -1.8 5 -.6 5 2.4 5 1.7 5 .5 5 -1.1 5 -1.6 5 1.3 5 1.9 5 1.2 5 -.7 5 -2.8 5 -.8 5 .5 5 1.4 5 .5 5 -2.3 5 -1.6 5 -.3 5 1.7 5 2.5 5 -.3 5 -1.1 5 -1 5 .7 5 2.8 5 .7 5 -.8 5 -2.1 5 -1.6 5 1.5 5 1 5 .1 5 -1.8 5 -2.5 5 .5 5 1.5 5 2 5 .2 5 -2 5 -.3 5 .9 5 2.3 5 1.5 5 -1.6 5 -1.7 5 -1.1 5 .9 5 1.9 5 -.8 5 -1.7 5 -2.1 5 -.2 5 2.3 5 1.2 5 .1 5 -1.6 5 -1 5 1.9 5 1.9M-5 115.7l5 2.6 5 1.2 5 .3 5 -1.5 5 -1.4 5 1.2 5 1.5 5 1.1 5 -.4 5 -2.8 5 -1.4 5 .2 5 1 5 1.5 5 -1 5 -2.1 5 -.6 5 .3M85 115.4l5 2.4 5 2 5 -.7 5 -1 5 -1 5 .5 5 2.4 5 .8 5 -.7 5 -1.9 5 -2.2 5 .5 5 1.4 5 .6 5 -.3 5 -2.3 5 -1.4 5 1.2 5 1.6 5 2 5 0 5 -1.9 5 -.4 5 .7 5 1.8 5 1.8 5 -1.2 5 -1.9M225 118.2l5 -1.4 5 -.4 5 1.8 5 .8 5 -1.2 5 -1.5 5 -1.8 5 .7M265 115.2l5 2.4 5 1.1 5 .3 5 -1.4 5 -1.3 5 1.4 5 1.8 5 1.4 5 -.2 5 -2.5 5 -1.4 5 .3 5 .9 5 1.4 5 -1.1 5 -2.4 5 -.9 5 0 5 2.2 5 1.8 5 -.7 5 -.9 5 -1 5 .6 5 2.7 5 1.1 5 -.4 5 -1.6 5 -2.1 5 .6 5 1.4 5 .5M-5 120.6l5 2 5 1 5 -.1 5 -2.5 5 .2 5 2.1 5 2.4 5 -.1 5 -2.3 5 -.1 5 1.1 5 2.1 5 -1.5 5 -2.4 5 -1.5 5 1.1 5 2 5 -1 5 -1.5 5 -1.2 5 2.6 5 2.1 5 .4 5 -1.8 5 -1 5 1.9 5 1.3 5 0 5 -3.2 5 -1.2 5 .6 5 1.8 5 -.2 5 -2.4 5 -.6 5 1.2 5 3.1 5 .1 5 -1.3 5 -1.2 5 1.4 5 2.3 5 -.5 5 -1.9 5 -2.6 5 1.2 5 1.2 5 .3 5 -2.2 5 -1.6 5 1.6 5 2.2 5 1.4 5 -2 5 -.7 5 .9 5 2.4 5 .5 5 -2.5 5 -1.7 5 -.3 5 2.3 5 -.3 5 -1.7 5 -2.1 5 .9 5 2.7 5 .9 5 -.7 5 -1.9 5 1.4 5 2 5 1.2 5 -2 5 -2.4 5 .3 5 1.2 5 1 5 -2.5 5 -1.7 5 0 5 2.6 5 1.5 5 -1.2 5 -1.1 5 .2M-5 131.5l5 -1.8 5 -1.6 5 -.4 5 1.1 5 1.8 5 -1.4 5 -2.1 5 -1.8 5 .5 5 2.4 5 .3 5 -.7 5 -1.7 5 .1 5 2.7 5 1.5 5 .4 5 -2 5 -1.4 5 1.2 5 1.2 5 .8M110 128.4l5 -2.4 5 -.2 5 1 5 2 5 -.6 5 -1.7M140 126.5l5 -.6 5 .9 5 3.1 5 .8 5 -1 5 -1.6 5 -.6 5 2.2 5 .9 5 -.7 5 -2.3 5 -2.2 5 1.2 5 1.3 5 .8 5 -1.3 5 -2 5 .8 5 1.7 5 2.5 5 -.1 5 -1.9 5 -.5 5 .5 5 2.2 5 .3 5 -2.2 5 -1.9 5 -1.1 5 1.9 5 1.1 5 -.7 5 -1.5 5 -1.5 5 1.9 5 2.2 5 1.1 5 -.7 5 -2.1 5 .7 5 1.5 5 1.4 5 -.5 5 -2.9 5 -1.1 5 .2 5 1.7 5 .6 5 -2.1 5 -1.3 5 -.2 5 2.3 5 2.3 5 -.5 5 -1.1 5 -1.2 5 1.5M-5 130.6l5 -.9 5 2.3 5 1.7 5 .2 5 -1.1 5 -1.5 5 1.5 5 2.1 5 1.3 5 -.6M50 132.9l5 -.6 5 .8 5 1.4 5 .1 5 -2.6 5 -1.6 5 -.2 5 1.8 5 2.1 5 -.8 5 -1.2 5 -.8 5 1.4 5 2.8 5 .4 5 -.9 5 -2.1 5 -.7 5 1.8 5 .7 5 -.2 5 -2.5 5 -2 5 .9 5 1.4 5 1.6 5 -.8 5 -1.9 5 .3 5 1.4 5 2.6 5 .6 5 -1.9 5 -1.2 5 -.5 5 1.9 5 1M240 133.9l5 -1.9 5 -2 5 1.1 5 2 5 .3 5 -.6 5 -2 5 .4 5 2.4 5 1.7 5 .6 5 -2.1 5 -1.3 5 .8 5 1.3 5 1.2 5 -2 5 -2.4 5 -.8 5 .7 5 2.2 5 -.1 5 -1.5 5 -1.1 5 .2 5 2.9 5 1.6 5 -.4 5 -1.4 5 -1.5 5 1.6 5 1.5 5 .2 5 -1.5 5 -2.9 5 -.2 5 1.2M-5 136.8l5 1.4 5 1.3 5 -.1 5 -2.3 5 -1 5 2.2M25 138.3l5 2.2 5 .7 5 -2.4 5 0 5 1.3 5 2.2 5 -1.1 5 -2.6 5 -1.2 5 1 5 1.8 5 -1.5 5 -1.8 5 -.9 5 2.8 5 1.7 5 0 5 -1.9 5 -.1 5 2.4 5 1.2M135 141.3l5 -3.2 5 -.2 5 1 5 1.5 5 -1.9 5 -2.2 5 .2 5 2.2 5 2.1 5 -1.3 5 -1.1 5 .1 5 3 5 .7 5 -1.5 5 -2.5 5 -.1 5 1.8 5 .1 5 -1.6 5 -2.6 5 1.2 5 2 5 1.6 5 -1.7 5 -1 5 1.2 5 2.4 5 .9 5 -2.5 5 -1.4 5 -.1 5 2.2 5 -.6 5 -2.1 5 -2 5 1.2 5 2.5 5 .3 5 -1.2 5 -1.4 5 2.3 5 2 5 .6 5 -2.6 5 -1.3 5 1 5 1.4 5 -.5 5 -3 5 -.9 5 1 5 2.7 5 -.6 5 -1.4 5 -.6 5 2.3 5 2.4M-5 145.6l5 .7 5 -.1 5 -1.5 5 -1.1 5 .6 5 1.3 5 1.4 5 1.6 5 .3 5 -1.6 5 -1.5 5 -.5 5 -.1 5 .8 5 1.5 5 .3 5 -1.4 5 -1.7 5 -1.2 5 -.9 5 .6M100 143.1l5 1.9 5 1.2 5 -.3 5 -.6 5 -.9 5 -1.1 5 .6 5 2.1 5 1.6 5 .6 5 .1 5 -1.2 5 -1.9 5 -.3 5 1 5 .9 5 .7 5 .3 5 -1.5 5 -2.3 5 -1 5 .1 5 .6 5 1.5 5 1.2 5 -.5 5 -1.5 5 -.8 5 -.1 5 .6 5 2 5 2 5 .2 5 -.9 5 -.9 5 -1.2 5 -.4 5 1.3 5 1.5 5 .2 5 -.6 5 -1.2 5 -2.1 5 -1.3 5 .7 5 1.3 5 .8 5 .6 5 -.4 5 -1.7 5 -1.2 5 .7 5 1.2 5 1.5 5 1.7 5 .4 5 -1.4 5 -1.3 5 -.3 5 .2 5 1 5 1.6 5 .4 5 -1.5 5 -1.7M-5 149.4l5 1.2 5 1.3 5 -.4 5 -1.6 5 -1 5 -.4 5 .4 5 1.9 5 2.1 5 .4 5 -.6 5 -.9 5 -1.1 5 -.3 5 1.5 5 1.6 5 .3 5 -.4 5 -1.3 5 -2.2 5 -1.1 5 .8 5 1.1 5 .6 5 .5 5 -.9 5 -2 5 -.8 5 .7 5 1.2 5 1.6 5 1.6 5 -.2 5 -1.5 5 -.8 5 0 5 .5 5 1.6 5 1.6 5 -.4 5 -1.6 5 -1.4 5 -1.4 5 -.5 5 1.3 5 1.4 5 0 5 -.8 5 -1.1 5 -1.6 5 -.5 5 1.6 5 1.8 5 1.1 5 .5 5 -.6 5 -1.6 5 -.6 5 1.1 5 1.3 5 1.2 5 .8 5 -.8 5 -2.3 5 -1.3 5 -.2 5 .3 5 1.2 5 1.1 5 -.7 5 -1.8 5 -1.2 5 -.6 5 .3 5 1.8 5 2 5 .3 5 -.6 5 -.8 5 -1 5 0 5 1.8 5 1.7 5 .5 5 -.3 5 -1.1M-5 159.0l5 -.3 5 -1.3 5 -2.4 5 -1 5 .8 5 1.1 5 1.1 5 .6 5 -1.3 5 -1.7 5 -.1 5 .9 5 1.5 5 2.1 5 .7 5 -1.3 5 -1.3 5 -.5 5 0 5 1.3 5 1.7 5 -.4 5 -1.5 5 -1.5 5 -1.7 5 -.3 5 1.7 5 1.3 5 -.1 5 -.5 5 -1.3 5 -1.4 5 .7 5 2 5 1.5 5 1 5 0 5 -1.8 5 -1.1 5 .6 5 1 5 1.1 5 1 5 -1.1 5 -2.4 5 -1.2 5 -.4 5 .4 5 1.7 5 .9 5 -1.2 5 -1.4 5 -.8 5 -.4 5 1.4 5 2.5 5 .9 5 -.3 5 -.7 5 -1.3 5 -.5 5 1.5 5 1.6 5 .5 5 -.3 5 -1.5 5 -2.4 5 -.6 5 .9 5 .9 5 .8 5 .1 5 -1.8 5 -1.7 5 .1 5 .8 5 1.6 5 2.1 5 .2 5 -1.3 5 -.9 5 -.3 5 .4 5 1.9 5 1.5 5 -.5M-5 161.7l5 1.1 5 1.7 5 -.9 5 -2.5 5 -1.4 5 -.4 5 1.8 5 1.4 5 -1.1 5 -1.3 5 -1.1 5 1.1 5 2.8 5 1 5 -.2 5 -1.7 5 -1.1 5 1.6 5 1.4 5 .5 5 -1.4 5 -2.8 5 -.6 5 .8 5 1.4 5 .7 5 -2 5 -1.4 5 .2 5 1.6 5 2.7 5 .2 5 -1.4 5 -.9 5 -.3 5 2.2 5 1.4 5 -1 5 -1.7 5 -2.3 5 .1 5 1.8 5 .5 5 -.4 5 -2.1 5 -1.2 5 1.6 5 1.8 5 1.7 5 -.3 5 -2 5 -.1 5 1 5 1.9 5 1 5 -2.1 5 -1.9 5 -1 5 .5 5 2 5 -.3 5 -1.6 5 -1.6 5 -.6 5 2.4 5 1.9 5 .3 5 -.8 5 -1.7 5 .7 5 2.1 5 1.1 5 .1 5 -2.4 5 -1.9 5 .5 5 .9 5 1.2 5 -.9 5 -2.5M395 159.5l5 -.7 5 .5 5 2.3 5 1.7 5 -1 5 -1.1M-5 167.2l5 .8 5 .4 5 -1.2 5 -2 5 -.3 5 .9M25 165.8l5 1.4 5 2 5 .8 5 -1.2 5 -1.2 5 -.3 5 .3 5 1.5 5 1.8 5 -.3 5 -1.6 5 -1.4 5 -1.5 5 -.2 5 1.6 5 1 5 -.4 5 -.8 5 -1.6 5 -1.3 5 .9 5 2 5 1.3 5 .8 5 -.3 5 -1.7 5 -.7 5 1.1 5 1.3 5 1.3 5 .7 5 -1.5 5 -2.2 5 -.9 5 0 5 .7 5 1.5 5 .1 5 -1.7 5 -1.4 5 -.9 5 0 5 1.9M245 168.8l5 .3 5 -.6 5 -.9 5 -1 5 .5 5 2.1 5 1.3 5 .2 5 -.6 5 -2 5 -1.8 5 .4M305 166.7l5 1.1 5 .7 5 .4 5 -1 5 -2.3 5 -1 5 .6 5 1.1 5 1.8 5 1.2 5 -1 5 -1.3 5 -.3 5 .3 5 1.5 5 2.1 5 .4 5 -1.2 5 -1.4 5 -1.4 5 -.5 5 1.4 5 1.3 5 -.3M-5 177.3l5 -2.1 5 -1.2 5 .3 5 1.8 5 .7 5 -2.5 5 -1.9 5 -.8 5 2.2 5 1 5 -1.1 5 -1.5 5 -.3 5 2.9 5 1.6 5 .1 5 -2.1 5 -.7 5 1.8 5 1.2 5 -.2 5 -3.2 5 -1.2 5 .6 5 1.8 5 .3M125 174.8l5 -2.3 5 -.7 5 .8 5 3.1 5 .8 5 -1.3 5 -1.3 5 .2 5 2.6 5 .2 5 -1.4 5 -2.9 5 -.4 5 1.8 5 .7 5 -.6 5 -2.6 5 .3 5 1.9 5 2.4 5 0 5 -2.1 5 -.1 5 1.1 5 2.4 5 -.8 5 -2.4 5 -1.6 5 .3 5 2.2 5 -.6 5 -1.5 5 -1.9M295 172.3l5 2.7 5 .9 5 -.7 5 -2 5 1.1 5 1.9 5 1.2 5 -1.4 5 -2.9 5 -.1 5 .9 5 1.6 5 -1.6 5 -2.1 5 -.4 5 1.6 5 2.8 5 -.6 5 -1.1 5 -1 5 2 5 2.2 5 -.4 5 -1.8 5 -2.4 5 1.1M-5 178.0l5 1.8 5 .9 5 -1.3 5 -1.7 5 -2 5 .8 5 2.3 5 .8 5 -.1 5 -1.8 5 -.5 5 2 5 1.8 5 1.3 5 -1.3 5 -2.3 5 -.2 5 .7 5 1.5 5 0 5 -2.6 5 -1.5 5 -.5 5 1.6 5 2.1 5 -.6 5 -1.1 5 -1 5 .6 5 2.9 5 1.1 5 -.3 5 -1.6 5 -1.7 5 1.2 5 1.3 5 .4 5 -1.2 5 -2.9 5 -.7 5 1.1 5 1.5 5 1.1M215 178.2l5 -1.3 5 .4 5 1.6 5 2.7 5 .1 5 -1.7 5 -1.1M250 178.9l5 -.4 5 1.9 5 1.1 5 -1.2 5 -1.9 5 -2.2M280 176.2l5 .5 5 2 5 .6 5 -.3 5 -1.9 5 -.7 5 1.9 5 1.9 5 1.6 5 -1 5 -2.1 5 .1 5 .9 5 1.7 5 .1 5 -2.5 5 -1.7 5 -.7 5 1.2 5 1.9 5 -.7 5 -1.4 5 -1.2 5 .4 5 2.9 5 1.4 5 -.1 5 -1.4 5 -1.5M-5 184.7l5 .1 5 -2.7 5 .5 5 2.3 5 2.4 5 -2 5 -1 5 .7 5 2.7 5 -1.5 5 -2.5 5 -1.5 5 2.4 5 .3 5 -1.4 5 -2.1 5 2.4 5 2.2 5 .6 5 -2.6 5 .6 5 1.9 5 1.3 5 -3.1 5 -1.7 5 .3 5 2.3 5 -1.5 5 -1.9 5 -.3 5 3.3 5 1 5 -1 5 -1.7 5 2.3 5 1.7 5 -.7 5 -3.4 5 -.1 5 1.5 5 .7 5 -2.8 5 -1.1 5 1.6 5 2.9 5 -.7 5 -1.5 5 .3 5 3 5 .3 5 -2.3 5 -2.2 5 1.5 5 1.1 5 -1.2 5 -2.8 5 .6 5 2.5 5 1.3 5 -1.9 5 -.5 5 2 5 2.3 5 -1.4 5 -2.5 5 -.2 5 1.9 5 -.2 5 -2.7 5 -1.4 5 2.1 5 2.1 5 -.8 5 -1.6 5 1 5 2.9 5 .4 5 -2.4 5 -1.5 5 1.6 5 1 5 -1.8 5 -2.8 5 .7 5 2.4 5 .7M-5 192.4l5 .3 5 -1.4 5 -2.2 5 -.9 5 .1 5 .7 5 1.7 5 1.5 5 -.3 5 -1.2 5 -.7 5 -.3 5 .4 5 2 5 1.9 5 .2 5 -.9 5 -1.1 5 -1.5 5 -.7 5 1.1 5 1.4 5 .2 5 -.4 5 -1.1 5 -2.1 5 -1.3 5 .7 5 1.4 5 1 5 .9 5 0 5 -1.6 5 -1.1 5 .5 5 1.1 5 1.4 5 1.8 5 .5 5 -1.4 5 -1.6 5 -.6 5 -.2 5 .7 5 1.6 5 .5 5 -1.3 5 -1.5 5 -1.4 5 -1.1 5 .3 5 1.9 5 1.2 5 0 5 -.5 5 -1 5 -1.2 5 .3 5 1.9 5 1.7 5 .9 5 .3 5 -1M310 192.9l5 -1.9 5 -.6 5 .8 5 .9M330 192.1l5 .9 5 .5 5 -1.1 5 -2.3 5 -1.3 5 -.2 5 .4 5 1.3M370 190.3l5 1.5 5 -.2 5 -1.4 5 -.9 5 -.4 5 .2 5 1.8 5 2.2 5 .7 5 -.6 5 -.9M-5 198.2l5 -2.3 5 .7 5 1.8 5 -.4 5 -2.2 5 -2.3 5 1.5 5 1.7 5 .9 5 -2.2 5 -.3 5 1.7 5 2.7 5 -.1 5 -2.3 5 -.8 5 .9 5 1.9 5 -1.7 5 -2.3 5 -1.5 5 2.2 5 1.4 5 -.5 5 -1.9 5 .2 5 2.9 5 1.5 5 -.5 5 -2.6 5 .5 5 1.3 5 1.1 5 -2.4 5 -2.4 5 0 5 2 5 1.1 5 -2 5 -.9 5 .7 5 3.4 5 .5 5 -1.2 5 -1.9 5 1.2 5 1.8 5 -.4 5 -2.4 5 -2.3 5 1.4 5 1.4 5 .4 5 -2.6 5 -.2 5 1.8 5 2.8 5 -.2 5 -2 5 -.4 5 1.5 5 1.9 5 -1.8 5 -2.3 5 -1.5 5 2.1 5 .9 5 -.9 5 -2.2 5 .3 5 2.9 5 1.5 5 -.6 5 -2.2 5 1 5 1.7 5 1.2 5 -2.6 5 -2.1 5 -.1 5 1.8M400 196.9l5 .5 5 -2.3 5 -1.1 5 .8 5 3.3M-5 201.8l5 -.6 5 .8 5 1.4 5 -.1 5 -2.7 5 -1.1 5 .3M35 202.2l5 1.6 5 -1.2 5 -1 5 -.4 5 2.2 5 2.1 5 -.5 5 -1.6 5 -2.2 5 .7 5 1.5 5 .1 5 -1.2 5 -2.8 5 0 5 1.7 5 1.8 5 .4 5 -2.1 5 -.3 5 1.2 5 2.3 5 1.3 5 -2 5 -1.6 5 -.7 5 1.4 5 1.4 5 -1.5 5 -1.9 5 -1.8 5 1.2 5 2.3 5 .3 5 -.6M215 200.4l5 .9 5 2.3 5 1.5 5 0 5 -2.6 5 -.7 5 .8 5 1.4 5 .3 5 -2.7 5 -1.7 5 -.2 5 1.7 5 1.9 5 -1.1 5 -1.2 5 -.7 5 1.9 5 2.7 5 0 5 -1 5 -2.1 5 .3 5 1.9 5 .4 5 -1 5 -3 5 -.8 5 1.3 5 1.5 5 .7 5 -2.2 5 -.8 5 1.1 5 2.2 5 2 5 -1.4 5 -1.4 5 -.7 5 1.3 5 1.9 5 -1.2M-5 206.6l5 1.2 5 1.7 5 -.4 5 -1.2 5 -1.8 5 -.1 5 2.4 5 1.7 5 .7 5 -1 5 -1.8 5 .7 5 1.6 5 1.3 5 .2 5 -2.6 5 -1.8M80 207.4l5 -.1 5 .9 5 1.7 5 -.8 5 -2.1 5 -.9 5 .1 5 2.4 5 2 5 -.5 5 -1 5 -1.2 5 .8 5 2.4 5 .7 5 -.6 5 -2.1 5 -2 5 .8 5 1.2 5 .6 5 -.7 5 -2.6 5 -.7 5 1.3 5 1.8 5 1.8 5 -1 5 -1.5 5 0 5 .9 5 2.4 5 .8 5 -1.8 5 -1.6 5 -1.4 5 .8 5 1.9 5 -.4 5 -1.3 5 -2.1 5 -.8 5 2.1 5 1.7 5 .7 5 -.7 5 -1.9 5 .6 5 1.8 5 1.7 5 .7 5 -2.1 5 -1.9 5 -.1 5 .7 5 1.6 5 -.5 5 -2.4 5 -1.3 5 -.4 5 2M385 207.8l5 2 5 -.4 5 -.9 5 -1.2 5 .5 5 2.7 5 1.2 5 -.2M-5 212.2l5 .3 5 1.2 5 2.1 5 1.4 5 -1.1 5 -1.3 5 -.2 5 .4 5 2.2 5 1.4 5 -1.1 5 -1.6 5 -1.8 5 -.7 5 1.6 5 1.1 5 -.4 5 -1.1 5 -2 5 -.8 5 1.8 5 1.7 5 1.1 5 .1 5 -1.8 5 -.7 5 1.2 5 1.4 5 1.6 5 .1 5 -2.2 5 -1.6 5 -.4 5 .5 5 1.6 5 .3 5 -1.9 5 -1.5 5 -1 5 .5 5 2.5 5 1.2 5 -.4 5 -.8 5 -1.3 5 .4 5 2.4M235 217.9l5 .2 5 -1 5 -2.4 5 -.7 5 1.1 5 .9 5 .7 5 -1.1 5 -2.6 5 -.9 5 .6 5 1.4 5 2 5 0 5 -1.6 5 -.6 5 .1 5 1.5 5 2.5 5 .3 5 -1.3 5 -1.4 5 -1.4 5 .6 5 1.8 5 .2 5 -.9 5 -1.8 5 -2.1 5 .4 5 1.8 5 1.2 5 .6 5 -1 5 -1.8 5 .5 5 1.6 5 1.7M-5 220.0l5 -1.2 5 -1.6 5 -.4 5 1.6 5 1.8 5 .9 5 .3 5 -.6 5 -1.6 5 -.4 5 1.3 5 1.5 5 1.1 5 .8 5 -1 5 -2.2 5 -1.1 5 0 5 .5 5 1.1 5 .9 5 -.9 5 -2 5 -1.2 5 -.5 5 .4 5 1.9 5 1.8 5 0 5 -.9 5 -.7 5 -.8 5 .3 5 2 5 1.8 5 .2 5 -.4 5 -1.3 5 -1.9 5 -.6 5 1.2 5 1 5 .4 5 -.1 5 -1.5 5 -2.2 5 -.7 5 .8 5 1 5 1.5 5 1.1 5 -.8 5 -1.6 5 -.4 5 .5 5 1 5 2 5 1.4 5 -.7 5 -1.4 5 -1.1 5 -.9 5 .1 5 1.6 5 1 5 -.6 5 -1.2 5 -1.6 5 -1.6 5 0 5 1.7 5 1.3 5 .5 5 .1M365 220.7l5 -1.1 5 -1.5 5 .2 5 1.7 5 1.4 5 1.4 5 .5 5 -1.3 5 -1.9 5 -.5 5 .4 5 .7M-5 225.4l5 2.4 5 .4 5 -1.7 5 -.5 5 2.4 5 1.6 5 -.7 5 -3.2 5 0 5 1.1 5 1.2 5 -2.6 5 -1.7 5 .4 5 3 5 .5 5 -1.4 5 -1M85 225.6l5 1.9 5 2.5 5 -.6 5 -2.2 5 -1.5 5 1.9 5 .6 5 -1.1M130 223.9l5 .6 5 1.9 5 1.8 5 -1.7 5 -1 5 1.2 5 2.9 5 .3 5 -2.3 5 -1.4 5 .9 5 1.8 5 -1.6 5 -2.3 5 -1.3 5 2.7 5 1.1 5 -.4 5 -2.2 5 1.4 5 2.4 5 1.4 5 -2 5 -1.7 5 .7 5 1.7 5 -.4 5 -3.1 5 -1.1 5 1.1 5 2.5M285 227.8l5 -1.1 5 -1.3 5 -.3 5 3.3 5 1.3 5 -.9 5 -2.3 5 .5 5 1.8 5 .1 5 -2.5 5 -2.3 5 1.3 5 1.7 5 .3 5 -2.5 5 .2 5 1.9 5 2.9 5 -1.2 5 -1.6 5 -.6 5 2.4 5 .4 5 -2 5 -2.6 5 .2 5 2.2M-5 233.2l5 1.3 5 -1.2 5 -1.3 5 -.3 5 .6 5 2.6 5 1.6 5 -.6 5 -1.2 5 -1.5 5 -.3 5 1.8M55 234.7l5 1 5 -.6 5 -1.3 5 -2.5 5 -.8 5 1.5 5 1.3 5 .8 5 -.6 5 -2 5 -.2 5 1.4 5 1.7 5 1.9 5 -.3 5 -1.9 5 -.8 5 0 5 1.2 5 1.7 5 -.7 5 -2.1 5 -1.6 5 -1.1 5 1.2 5 1.9 5 0 5 -.7 5 -1.4 5 -1 5 1.8 5 2.2 5 1 5 .2 5 -1.7 5 -1.4 5 .9 5 1.3M245 235.0l5 1 5 0 5 -2.5 5 -1.9 5 -.2 5 .6 5 1.7 5 .6 5 -1.7M295 231.3l5 -.3 5 .9 5 2.7 5 1.3 5 -.8 5 -1 5 -1.2 5 .5 5 2.1 5 .8 5 -.6 5 -1.6 5 -2.5 5 -.2 5 1.4 5 .9 5 .4 5 -1.3 5 -2.1 5 .1 5 1.4 5 1.9 5 1.7 5 -.7 5 -1.7 5 -.3M-5 237.7l5 -2 5 -.6 5 1.9 5 1.7 5 .7 5 -.2 5 -1.8 5 -.4 5 1.6 5 1.6 5 1.4 5 -.4 5 -2.4 5 -1.2 5 .1 5 .9 5 1.5 5 -.6 5 -2.3 5 -1.3 5 -.6 5 1.3 5 2.4 5 .3 5 -.9 5 -1 5 -.7 5 1.6 5 2.4 5 .6 5 -.3 5 -1.8 5 -1.8 5 .6 5 1.3 5 .6 5 -.1 5 -2.3 5 -2 5 .2 5 1.1 5 1.7 5 1 5 -1.5 5 -1.2 5 .1 5 1.1 5 2.4 5 1.3 5 -1.3 5 -1.3 5 -1.3 5 .1 5 1.9 5 .7 5 -1.1 5 -1.6 5 -2.1 5 -.2 5 1.9 5 1.1 5 .5 5 -.9 5 -1.9M315 236.2l5 .3 5 1.8 5 1.7 5 1.5 5 -.9 5 -2.1 5 -.5 5 .4 5 1.3 5 1.3 5 -1.3 5 -2.2 5 -1.3 5 -.5M390 237.2l5 1.8 5 -.4 5 -1 5 -1.2 5 -.4 5 2.2 5 2.1M-5 242.8l5 -1.5 5 2.8 5 1.7 5 -.2 5 -2.1 5 1.2 5 2.3 5 .8 5 -2.8 5 -1.6 5 .9 5 1.7 5 -1.5 5 -2.5 5 -.1 5 2.7 5 1.4 5 -1.6 5 -.9 5 1.6M100 247.8l5 -.8 5 -2.3 5 -1.2 5 2 5 .3 5 -1.8 5 -2.7 5 1.5 5 2.1 5 .8 5 -2.3 5 .3 5 2 5 2.4 5 -2 5 -1.8 5 -.3 5 2.4 5 -.8 5 -2.3M205 241.3l5 2.3 5 1.6 5 -.3 5 -2.1 5 1.1M235 246.5l5 1.3 5 -2.3 5 -1.5 5 1 5 1.7 5 -1.4 5 -2.9 5 -.4 5 2.1 5 1.4 5 -1.8 5 -1M300 244.3l5 3.1 5 -.4 5 -1.9 5 -1.1 5 2.2 5 .4 5 -1.7 5 -3.1 5 1 5 1.7 5 .8 5 -2.6 5 .1 5 2.1 5 2.8 5 -1.6 5 -1.5 5 -.1 5 2.5 5 -.5 5 -2.4 5 -2.3 5 1.8 5 1.4 5 -.5M-5 247.4l5 2.2 5 1.3 5 -.3 5 -.6 5 -1 5 -.7 5 1 5 2.3 5 1.1 5 .1 5 -.7 5 -1.9 5 -1.5 5 .5 5 1.1 5 .7 5 .3 5 -.9 5 -2.4 5 -1.2 5 .4 5 .9 5 1.5 5 1.4 5 -.5 5 -1.6 5 -.5 5 .2 5 1 5 2.2 5 1.4 5 -.7 5 -1.3 5 -1.2 5 -1.1 5 .5 5 1.7 5 .6 5 -.7 5 -1.2M200 248.0l5 -1.5 5 .8 5 1.7 5 1 5 .5 5 -.4 5 -1.7 5 -.7 5 1.1 5 1.5 5 1.5 5 1.3 5 -.7 5 -2 5 -.9 5 0 5 .5 5 1.4 5 .9 5 -1.3 5 -2 5 -1.2 5 -.8 5 .5 5 2 5 1.1 5 -.6 5 -.8 5 -1 5 -.7 5 1.2 5 2.3 5 1.2 5 .3 5 -.6 5 -1.7 5 -1.2 5 .8 5 1.3 5 .7M405 252.1l5 -1.1 5 -2.4 5 -1.3 5 .2M-5 255.8l5 -.5 5 .5 5 1.1 5 1.4 5 -.5 5 -2.4 5 -1.5 5 -.7 5 .6 5 2 5 .5 5 -1.2 5 -1.1 5 -1 5 .7 5 2.6 5 1.5 5 .1 5 -.8 5 -1.8 5 -.3 5 1.7 5 1.1 5 .5 5 -.9 5 -2.7 5 -1.4 5 .6 5 .9 5 1.3 5 .1 5 -1.9 5 -1.2 5 .2 5 1.1 5 2.4 5 1.3 5 -1 5 -1.1 5 -.8 5 .2 5 2 5 1.3 5 -.8 5 -1.4 5 -2.1 5 -1.1 5 1.3 5 1.3 5 .2 5 -.5 5 -2 5 -1.2 5 1.3 5 1.7 5 1.6 5 .9 5 -1.5 5 -1.4 5 .4 5 .9 5 1.7 5 1 5 -1.5 5 -2.1 5 -1.1 5 -.4 5 1.4 5 1.4 5 -.8 5 -1.4 5 -1.3 5 -.8 5 1.7 5 2.4 5 .6 5 -.1M380 257.0l5 -1.2 5 -1.3 5 1.1 5 1.9 5 .9 5 .3 5 -1.7 5 -2.4 5 -.3M-5 259.0l5 1.2 5 1.8 5 -1.1 5 -1.5 5 -1.1 5 .8 5 3 5 .9 5 -.4 5 -1.5 5 -.8 5 2 5 1.3 5 .2 5 -1.8 5 -2.7 5 .2 5 1 5 1.2 5 -.3 5 -2.5 5 -.7M110 259.1l5 2.3 5 1.8 5 -1.1 5 -1.2 5 -.4 5 1.3 5 2.4 5 -.4 5 -1.7 5 -2.1 5 -.8 5 1.9 5 .7 5 -.5 5 -1.9 5 -1.7 5 1.5 5 2 5 1.5 5 -.4 5 -2.1 5 .3 5 1.3 5 2 5 .6 5 -2.5 5 -1.6 5 -.6 5 1.2 5 1.6 5 -1.4 5 -1.7 5 -1.4 5 .6 5 2.8 5 .8 5 -.4 5 -1.4 5 -.6 5 2.3 5 1.6 5 .4 5 -1.5 5 -2.6 5 .3 5 1 5 1.1 5 -.6 5 -2.7 5 -1 5 .6 5 2.1 5 1.7 5 -1.3 5 -1 5 -.3 5 1.5 5 2.7 5 -.2 5 -1.3 5 -2 5 -.6 5 1.9M-5 265.9l5 1.8 5 .4 5 -1.2 5 -1.1 5 -.3 5 .1 5 1.1 5 1.8 5 .7 5 -1.1 5 -1.5 5 -1.4 5 -1.2 5 .1 5 1.6 5 1 5 -.3 5 -.7M85 265.7l5 -1.3 5 -1.6 5 0 5 1.6 5 1.7 5 1M115 267.1l5 .6 5 -.6 5 -1.7 5 -.5 5 .9 5 1.2 5 1.2 5 1 5 -.5 5 -2.1 5 -1.5 5 -.5 5 0 5 .9 5 1.4 5 .1 5 -1.6 5 -1.4 5 -.8 5 -.4 5 1.1 5 2.2 5 1.2 5 -.2 5 -.6 5 -.9 5 -.9 5 .5 5 2 5 1.4 5 .3 5 -.3 5 -1.4 5 -2.1 5 -.7 5 .9 5 .8 5 .7 5 .3 5 -1.1 5 -2.1 5 -1.1 5 .3 5 .9 5 1.5 5 1.6 5 .1 5 -1.3 5 -.9 5 -.1 5 .3 5 1.4 5 2.1 5 .6 5 -1 5 -1.3 5 -1.3 5 -1 5 .4 5 1.6 5 .7 5 -.5M-5 268.6l5 -.8 5 .6 5 1.2 5 2.2 5 1 5 -1.2 5 -1.1 5 -.3 5 .2 5 1.9 5 1.8 5 -.4 5 -1.3 5 -1.6 5 -1.5 5 .3 5 1.7 5 .6 5 -.6 5 -1.1 5 -2 5 -.7 5 1.5 5 1.6 5 1.2 5 .5 5 -1.3 5 -1.4 5 .5 5 1.3 5 1.4 5 1.5 5 -.7 5 -2.2 5 -1.2 5 -.4 5 .5 5 1.6 5 .5M190 272.4l5 -1.6 5 -1.6 5 -1.2 5 -.3 5 1.8 5 2 5 .3 5 -.5 5 -.9 5 -1.2 5 .9 5 2.2 5 1.2 5 .4 5 -.8 5 -2.2 5 -1.2M275 269.7l5 .8 5 .9 5 .8 5 .1 5 -1.9 5 -2.1 5 -.4 5 .6 5 1.5 5 1.8 5 -.1 5 -1.5 5 -.7 5 -.1 5 1.1 5 2.4 5 1.2 5 -.8 5 -1.2 5 -1.4 5 -.9 5 1.3 5 1.4M395 272.4l5 -.8 5 -1.7 5 -2.1 5 .1 5 1.6 5 1.2M-5 276.0l5 -1.5 5 .2 5 1.3 5 1.4 5 1.5M20 278.9l5 .9 5 -1.1 5 -1.8 5 -.8 5 0 5 .4 5 1.3 5 1 5 -.9 5 -1.9 5 -1.3 5 -1 5 -.1M85 273.6l5 1.5 5 1.7 5 .2 5 -.6 5 -.8 5 -1.1 5 -.3 5 1.7 5 2 5 1 5 .3 5 -.6 5 -1.7 5 -1.2 5 .5 5 1.2 5 .7 5 .6 5 -.5M185 276.1l5 -1.9 5 -.3 5 .4 5 .9 5 1.5 5 .6 5 -1.2 5 -1.3 5 -.4 5 .1 5 1.1 5 2.2 5 1.5 5 -.4 5 -1 5 -1 5 -1 5 .2 5 1.6 5 1.2 5 -.2M295 277.9l5 -1.5 5 -2 5 -.8 5 1.2 5 1.2 5 .6 5 .3 5 -.7 5 -1.8 5 -.7 5 .9 5 1.4 5 1.5 5 1.5 5 0 5 -1.6 5 -1.1 5 -.1 5 .4 5 1.1 5 1.6 5 0 5 -1.7M415 276.0l5 -1.2 5 -.8M-5 281.8l5 .8 5 2.9 5 1 5 -1.1 5 -1.5 5 -1.5 5 1.3 5 1.5 5 -.3 5 -1.3 5 -2.6 5 -.6 5 1.7 5 1.3 5 .8 5 -1.5 5 -1.5 5 1 5 1.7 5 2.2 5 .2 5 -2.2 5 -.9 5 -.1 5 1.5 5 1.3 5 -1.6 5 -2 5 -1.6 5 .3 5 2.3 5 .5 5 -.6 5 -1.5 5 -.8 5 2.1 5 2.1 5 .9M185 286.0l5 -.6 5 -2.3 5 -.1 5 1.3 5 1.2 5 .3 5 -2.5 5 -2.1 5 -.1 5 .9 5 2 5 -.4M250 281.8l5 -.7 5 .3 5 2.6 5 1.9 5 -.6 5 -1.1 5 -1.5 5 .8 5 2.1 5 .2 5 -.9M310 282.4l5 -1.6 5 1.3 5 1.1 5 .8 5 -1.1 5 -2.2 5 .3 5 1.6 5 2.2 5 1.2 5 -1.8 5 -1.1 5 .1 5 1.3 5 2 5 -.9 5 -2.1 5 -1.7 5 -.6 5 2 5 .8 5 -.8 5 -1.4"/><g id="spk"><circle cx="196" cy="104" r="0.7"/><circle cx="59" cy="241" r="0.7"/><circle cx="3" cy="140" r="0.7"/><circle cx="381" cy="22" r="0.7"/><circle cx="235" cy="171" r="0.7"/><circle cx="17" cy="105" r="0.7"/><circle cx="298" cy="126" r="0.7"/><circle cx="307" cy="44" r="0.7"/><circle cx="101" cy="31" r="0.7"/><circle cx="215" cy="257" r="0.7"/><circle cx="250" cy="215" r="0.7"/><circle cx="163" cy="207" r="0.7"/><circle cx="43" cy="81" r="0.7"/><circle cx="286" cy="202" r="0.7"/><circle cx="179" cy="24" r="0.7"/><circle cx="113" cy="58" r="0.7"/><circle cx="119" cy="225" r="0.7"/><circle cx="85" cy="246" r="0.7"/><circle cx="373" cy="15" r="0.7"/><circle cx="161" cy="137" r="0.7"/><circle cx="10" cy="118" r="0.7"/><circle cx="384" cy="31" r="0.7"/><circle cx="253" cy="34" r="0.7"/><circle cx="245" cy="249" r="0.7"/><circle cx="86" cy="2" r="0.7"/><circle cx="35" cy="150" r="0.7"/><circle cx="7" cy="24" r="0.7"/><circle cx="211" cy="256" r="0.7"/><circle cx="178" cy="111" r="0.7"/><circle cx="271" cy="26" r="0.7"/><circle cx="246" cy="48" r="0.7"/><circle cx="258" cy="266" r="0.7"/><circle cx="23" cy="154" r="0.7"/><circle cx="257" cy="42" r="0.7"/><circle cx="114" cy="277" r="0.7"/><circle cx="423" cy="34" r="0.7"/><circle cx="299" cy="264" r="0.7"/><circle cx="100" cy="170" r="0.7"/><circle cx="18" cy="102" r="0.7"/><circle cx="286" cy="164" r="0.7"/></g><symbol id="tex" viewBox="0 0 424 278" width="424" height="278"><rect width="424" height="278" fill="#cdc0a8"/><use href="#rip" stroke="#a89a84" stroke-width="2" stroke-linejoin="round" fill="none" opacity="0.5"/><use href="#rip" transform="translate(0 2.2)" stroke="#e2d8c6" stroke-width="1.5" stroke-linejoin="round" fill="none" opacity="0.4"/><use href="#spk" fill="#7a6a55" opacity="0.6"/></symbol><symbol id="texp" viewBox="0 0 424 278" width="424" height="278"><rect width="424" height="278" fill="#dbad86"/><use href="#rip" stroke="#c99b74" stroke-width="2" stroke-linejoin="round" fill="none" opacity="0.5"/><use href="#rip" transform="translate(0 2.2)" stroke="#e9c29d" stroke-width="1.5" stroke-linejoin="round" fill="none" opacity="0.4"/><use href="#spk" fill="#9a6a45" opacity="0.6"/></symbol></defs></svg>
<svg style="position:absolute;left:0px;top:0px;pointer-events:none" width="534" height="678" viewBox="0 0 534 678"><rect x="266.5" y="102" width="119" height="180.5" fill="#8f5b3b"/><rect x="29.5" y="282.5" width="475" height="180" fill="#8f5b3b"/><rect x="266.5" y="462.5" width="119" height="180.5" fill="#8f5b3b"/><use href="#tex" x="55" y="234"/><defs><clipPath id="uvc"><rect x="266.5" y="234" width="119" height="48.5"/><rect x="55" y="282.5" width="424" height="180"/><rect x="266.5" y="462.5" width="119" height="49.5"/></clipPath></defs><g clip-path="url(#uvc)"><use href="#texp" x="55" y="234"/></g><rect x="266" y="101" width="121" height="1" fill="#241405"/><rect x="266" y="102" width="120" height="1" fill="#d47514"/><rect x="266" y="102" width="2" height="181" fill="#4a2a0c"/><rect x="385" y="102" width="1" height="181" fill="#d47514"/><rect x="386" y="101" width="1" height="182" fill="#241405"/><rect x="29" y="282" width="476" height="1" fill="#5a3212"/><rect x="29" y="283" width="476" height="1" fill="#241405"/><rect x="28" y="282" width="1" height="182" fill="#241405"/><rect x="29" y="282" width="1" height="181" fill="#d47514"/><rect x="503" y="283" width="1" height="180" fill="#241405"/><rect x="504" y="282" width="1" height="181" fill="#d47514"/><rect x="505" y="282" width="1" height="182" fill="#241405"/><rect x="29" y="461" width="476" height="1" fill="#241405"/><rect x="29" y="462" width="476" height="1" fill="#d47514"/><rect x="29" y="463" width="476" height="1" fill="#241405"/><rect x="147" y="283" width="1" height="179" fill="#241405"/><rect x="148" y="283" width="1" height="179" fill="#d47514"/><rect x="266" y="283" width="2" height="179" fill="#4a2a0c"/><rect x="385" y="283" width="2" height="179" fill="#4a2a0c"/><rect x="266" y="463" width="2" height="181" fill="#4a2a0c"/><rect x="385" y="463" width="1" height="180" fill="#d47514"/><rect x="386" y="463" width="1" height="182" fill="#241405"/><rect x="266" y="642" width="121" height="1" fill="#241405"/><rect x="266" y="643" width="120" height="1" fill="#d47514"/><rect x="266" y="644" width="121" height="1" fill="#241405"/><circle cx="266.5" cy="102" r="1.7" fill="#e88a2a"/><circle cx="266.5" cy="102" r="0.7" fill="#f5d0a0"/><circle cx="385.5" cy="102" r="1.7" fill="#e88a2a"/><circle cx="385.5" cy="102" r="0.7" fill="#f5d0a0"/><circle cx="29.5" cy="282.5" r="1.7" fill="#e88a2a"/><circle cx="29.5" cy="282.5" r="0.7" fill="#f5d0a0"/><circle cx="148" cy="282.5" r="1.7" fill="#e88a2a"/><circle cx="148" cy="282.5" r="0.7" fill="#f5d0a0"/><circle cx="266.5" cy="282.5" r="1.7" fill="#e88a2a"/><circle cx="266.5" cy="282.5" r="0.7" fill="#f5d0a0"/><circle cx="385.5" cy="282.5" r="1.7" fill="#e88a2a"/><circle cx="385.5" cy="282.5" r="0.7" fill="#f5d0a0"/><circle cx="504.5" cy="282.5" r="1.7" fill="#e88a2a"/><circle cx="504.5" cy="282.5" r="0.7" fill="#f5d0a0"/><circle cx="29.5" cy="462.5" r="1.7" fill="#e88a2a"/><circle cx="29.5" cy="462.5" r="0.7" fill="#f5d0a0"/><circle cx="148" cy="462.5" r="1.7" fill="#e88a2a"/><circle cx="148" cy="462.5" r="0.7" fill="#f5d0a0"/><circle cx="266.5" cy="462.5" r="1.7" fill="#e88a2a"/><circle cx="266.5" cy="462.5" r="0.7" fill="#f5d0a0"/><circle cx="385.5" cy="462.5" r="1.7" fill="#e88a2a"/><circle cx="385.5" cy="462.5" r="0.7" fill="#f5d0a0"/><circle cx="504.5" cy="462.5" r="1.7" fill="#e88a2a"/><circle cx="504.5" cy="462.5" r="0.7" fill="#f5d0a0"/><circle cx="266.5" cy="643" r="1.7" fill="#e88a2a"/><circle cx="266.5" cy="643" r="0.7" fill="#f5d0a0"/><circle cx="385.5" cy="643" r="1.7" fill="#e88a2a"/><circle cx="385.5" cy="643" r="0.7" fill="#f5d0a0"/></svg>
<svg style="position:absolute;left:35px;top:492px;" width="40" height="40" viewBox="0 0 40 40"><path d="M20.3 12 L28.3 20 L20.3 28 L12.3 20 Z" fill="none" stroke="#e8e8e8" stroke-width="1" stroke-dasharray="2 2"/><path d="M20.3 12 L28.3 20 L20.3 28 L12.3 20 Z" fill="none" stroke="#b0481c" stroke-width="1.1" stroke-dasharray="2 2" stroke-dashoffset="2"/><path d="M4 20 H12 M20.3 28 V38" stroke="#bbb" stroke-width="0.9" stroke-dasharray="2 1.5"/></svg>
<div style="left:6px;top:73px;width:27px;height:46px;background:#2c2c2c;border-radius:3.5px"></div>
<div style="left:6px;top:73px;width:27px;height:23.0px;background:#4772b3;border-radius:3px 3px 0 0"></div>
<svg style="position:absolute;left:10.5px;top:76.5px;" width="16" height="16" viewBox="0 0 16 16"><rect x="1.5" y="1.5" width="13.5" height="13.5" rx="1.5" fill="none" stroke="#e8a050" stroke-width="1.15" stroke-dasharray="2.6 1.5"/><path d="M6.8 4.8 V11.8 L8.5 10.2 L9.7 12.5 L10.8 12 L9.7 9.7 L12 9.6 Z" fill="#f2f2f2"/></svg>
<svg style="position:absolute;left:28px;top:91.0px;" width="4" height="4" viewBox="0 0 4 4"><path d="M3.5 0.5 V3.5 H0.5 Z" fill="#8a8a8a"/></svg>
<div style="left:7px;top:96.0px;width:25px;height:0.6px;background:#262626;"></div>
<svg style="position:absolute;left:10.5px;top:99.5px;" width="16" height="16" viewBox="0 0 16 16"><circle cx="8" cy="8.2" r="6.6" fill="none" stroke="#ececec" stroke-width="1.3"/><circle cx="8" cy="8.2" r="6.6" fill="none" stroke="#a8441c" stroke-width="1.35" stroke-dasharray="2.2 3"/><path d="M8 4 V6.8 M8 9.6 V12.4 M3.8 8.2 H6.6 M9.4 8.2 H12.2" stroke="#8a8a8a" stroke-width="1.1"/></svg>
<div style="left:6px;top:123px;width:27px;height:92px;background:#2c2c2c;border-radius:3.5px"></div>
<svg style="position:absolute;left:10.5px;top:126.5px;" width="16" height="16" viewBox="0 0 16 16"><path d="M8 1.2 L5.6 4.4 H10.4 Z M8 15 L5.6 11.8 H10.4 Z M1.2 8.1 L4.4 5.7 V10.5 Z M14.8 8.1 L11.6 5.7 V10.5 Z" fill="#e8ddd2"/><path d="M8 4.4 V6.6 M8 9.6 V11.8 M4.4 8.1 H6.6 M9.4 8.1 H11.6" stroke="#b9e3d0" stroke-width="1.1"/></svg>
<div style="left:7px;top:146.0px;width:25px;height:0.6px;background:#262626;"></div>
<svg style="position:absolute;left:10.5px;top:149.5px;" width="16" height="16" viewBox="0 0 16 16"><path d="M3.6 6.8 A5.2 5.2 0 0 1 12.3 4.8" fill="none" stroke="#d8d8d8" stroke-width="1"/><path d="M12.4 9.4 A5.2 5.2 0 0 1 3.8 11.4" fill="none" stroke="#d8d8d8" stroke-width="1"/><path d="M1.4 6.8 L5.8 6.8 L3.6 10 Z" fill="#e8e8e8"/><path d="M10.2 9.4 L14.6 9.4 L12.4 6.2 Z" fill="#e8e8e8"/><path d="M8 5.9 L10.2 8.1 L8 10.3 L5.8 8.1 Z" fill="#e0c8b0"/></svg>
<div style="left:7px;top:169.0px;width:25px;height:0.6px;background:#262626;"></div>
<svg style="position:absolute;left:10.5px;top:172.5px;" width="16" height="16" viewBox="0 0 16 16"><rect x="3" y="2.5" width="10.5" height="10.5" fill="none" stroke="#c8c8c8" stroke-width="1"/><rect x="2.5" y="7.5" width="6" height="6" fill="#f0f0f0"/><path d="M8.8 7.2 L12 4" stroke="#ddd" stroke-width="1"/><circle cx="12" cy="4" r="1.1" fill="#b9e3d0"/></svg>
<svg style="position:absolute;left:28px;top:187.0px;" width="4" height="4" viewBox="0 0 4 4"><path d="M3.5 0.5 V3.5 H0.5 Z" fill="#8a8a8a"/></svg>
<div style="left:7px;top:192.0px;width:25px;height:0.6px;background:#262626;"></div>
<svg style="position:absolute;left:10.5px;top:195.5px;" width="16" height="16" viewBox="0 0 16 16"><circle cx="8" cy="8" r="6" fill="none" stroke="#c8c8c8" stroke-width="0.9" stroke-dasharray="1.6 0.9"/><rect x="5.4" y="5.4" width="5.2" height="5.2" fill="#f0f0f0"/><path d="M8 1 L6.7 2.9 H9.3 Z M8 15 L6.7 13.1 H9.3 Z M1 8 L2.9 6.7 V9.3 Z M15 8 L13.1 6.7 V9.3 Z" fill="#e8d8c8"/></svg>
<div style="left:6px;top:219.5px;width:27px;height:22.0px;background:#2c2c2c;border-radius:3.5px"></div>
<svg style="position:absolute;left:10.5px;top:222.5px;" width="16" height="16" viewBox="0 0 16 16"><path d="M3 11 L11.3 2.7 L13.3 4.7 L5 13 L2.6 13.4 Z" fill="#f0f0f0" stroke="#aaa" stroke-width="0.5"/><path d="M3.5 13.2 C6 15.2 8 11.2 10 10.7 C12 10.2 13 12 13.6 13" fill="none" stroke="#c8c8c8" stroke-width="0.9"/><circle cx="6.2" cy="13.6" r="0.7" fill="#5cb85c"/><circle cx="9.8" cy="10.8" r="0.7" fill="#5cb85c"/></svg>
<svg style="position:absolute;left:28px;top:236.5px;" width="4" height="4" viewBox="0 0 4 4"><path d="M3.5 0.5 V3.5 H0.5 Z" fill="#8a8a8a"/></svg>
<div style="left:6px;top:246.5px;width:27px;height:22.0px;background:#2c2c2c;border-radius:3.5px"></div>
<svg style="position:absolute;left:10.5px;top:249.5px;" width="16" height="16" viewBox="0 0 16 16"><path d="M5.5 5.5 L8 3 H14.5 V11 L12 13.5 H5.5 L2 10.5 Z M5.5 5.5 H12 V13.5 M12 5.5 L14.5 3" fill="none" stroke="#d8d8d8" stroke-width="1"/><path d="M2 10.5 L8 8.5" stroke="#d8d8d8" stroke-width="1"/><circle cx="2" cy="10.5" r="1.1" fill="#e3c8ac"/></svg>
<svg style="position:absolute;left:28px;top:263.5px;" width="4" height="4" viewBox="0 0 4 4"><path d="M3.5 0.5 V3.5 H0.5 Z" fill="#8a8a8a"/></svg>
<div style="left:6px;top:273px;width:27px;height:68px;background:#2c2c2c;border-radius:3.5px"></div>
<svg style="position:absolute;left:10.5px;top:276.3333333333333px;" width="16" height="16" viewBox="0 0 16 16"><path d="M4.5 13.5 C3 11 2.2 8.5 3 6.5 C3.5 5 4.5 4.8 5 5.5 L5.2 3.5 C5.4 2.4 6.8 2.4 7 3.5 L7.2 2.8 C7.5 1.8 9 1.8 9.2 2.9 L9.4 3.4 C9.8 2.6 11.2 2.8 11.2 4 L11.4 5 C11.9 4.4 13 4.6 13 5.8 L12.8 10 L10.8 13.5 Z" fill="none" stroke="#e4e4e4" stroke-width="0.95"/></svg>
<div style="left:7px;top:295.6666666666667px;width:25px;height:0.6px;background:#262626;"></div>
<svg style="position:absolute;left:10.5px;top:299.0px;" width="16" height="16" viewBox="0 0 16 16"><path d="M6 14 L3.5 10.5 C3 9.5 4 8.8 4.8 9.4 L6.2 10.6 L7 4 C7.2 3 8.6 3 8.7 4 L9 7.6 L12.5 8.3 C13.3 8.5 13.5 9 13.3 10 L12.3 14 Z" fill="none" stroke="#e4e4e4" stroke-width="0.95"/><path d="M3 6.5 L5.8 5.8 M4 3.8 L6 5" stroke="#e4e4e4" stroke-width="0.9"/><circle cx="5.5" cy="11" r="0.8" fill="#b9e3d0"/></svg>
<div style="left:7px;top:318.3333333333333px;width:25px;height:0.6px;background:#262626;"></div>
<svg style="position:absolute;left:10.5px;top:321.66666666666663px;" width="16" height="16" viewBox="0 0 16 16"><path d="M6 14 L3.5 10.5 C3 9.5 4 8.8 4.8 9.4 L6.2 10.6 L7 5 C7.2 4 8.6 4 8.7 5 L9 7.6 L12.5 8.3 C13.3 8.5 13.5 9 13.3 10 L12.3 14 Z" fill="none" stroke="#e4e4e4" stroke-width="0.95"/><path d="M2.5 3 L4.5 5 M6.5 1.5 L6.5 3.2 M10 2 L9 3.8" stroke="#e4e4e4" stroke-width="0.9"/><circle cx="5.5" cy="11" r="0.8" fill="#b9e3d0"/></svg>
<div style="left:535.5px;top:33px;width:521.5px;height:645.7px;background:#3c3c3c;border-radius:4px"></div>
<div style="left:535.5px;top:33px;width:521.5px;height:34px;background:#303030;border-radius:4px 4px 0 0;opacity:0.55"></div>
<svg style="position:absolute;left:0px;top:0px;pointer-events:none" width="1280" height="693" viewBox="0 0 1280 693"><defs><clipPath id="vp3"><rect x="535.5" y="33" width="521.5" height="645" rx="4"/></clipPath></defs><g clip-path="url(#vp3)"><path d="M405.6 184.7L568.3 178.3" stroke="rgb(88, 88, 88)" stroke-opacity="0.06"/><path d="M568.3 178.3L699.6 173.0" stroke="rgb(88, 88, 88)" stroke-opacity="0.06"/><path d="M399.5 186.0L568.1 179.2" stroke="rgb(88, 88, 88)" stroke-opacity="0.08"/><path d="M568.1 179.2L703.2 173.7" stroke="rgb(88, 88, 88)" stroke-opacity="0.09"/><path d="M703.2 173.7L813.9 169.2" stroke="rgb(88, 88, 88)" stroke-opacity="0.04"/><path d="M392.9 187.4L567.8 180.2" stroke="rgb(88, 88, 88)" stroke-opacity="0.11"/><path d="M567.8 180.2L707.0 174.4" stroke="rgb(88, 88, 88)" stroke-opacity="0.11"/><path d="M707.0 174.4L820.3 169.8" stroke="rgb(88, 88, 88)" stroke-opacity="0.06"/><path d="M385.9 188.8L567.6 181.2" stroke="rgb(88, 88, 88)" stroke-opacity="0.13"/><path d="M567.6 181.2L711.0 175.2" stroke="rgb(88, 88, 88)" stroke-opacity="0.14"/><path d="M711.0 175.2L827.0 170.3" stroke="rgb(88, 88, 88)" stroke-opacity="0.09"/><path d="M378.3 190.4L567.3 182.4" stroke="rgb(88, 88, 88)" stroke-opacity="0.16"/><path d="M567.3 182.4L715.2 176.0" stroke="rgb(88, 88, 88)" stroke-opacity="0.16"/><path d="M715.2 176.0L834.1 170.9" stroke="rgb(88, 88, 88)" stroke-opacity="0.11"/><path d="M370.1 192.2L567.0 183.6" stroke="rgb(88, 88, 88)" stroke-opacity="0.18"/><path d="M567.0 183.6L719.7 176.9" stroke="rgb(88, 88, 88)" stroke-opacity="0.19"/><path d="M719.7 176.9L841.6 171.6" stroke="rgb(88, 88, 88)" stroke-opacity="0.13"/><path d="M361.1 194.0L566.7 184.9" stroke="rgb(88, 88, 88)" stroke-opacity="0.20"/><path d="M566.7 184.9L724.6 177.8" stroke="rgb(88, 88, 88)" stroke-opacity="0.21"/><path d="M724.6 177.8L849.6 172.2" stroke="rgb(88, 88, 88)" stroke-opacity="0.16"/><path d="M849.6 172.2L951.1 167.7" stroke="rgb(88, 88, 88)" stroke-opacity="0.06"/><path d="M351.3 196.1L566.3 186.3" stroke="rgb(88, 88, 88)" stroke-opacity="0.23"/><path d="M566.3 186.3L632.6 183.2" stroke="rgb(88, 88, 88)" stroke-opacity="0.24"/><path d="M632.6 183.2L692.7 180.5" stroke="rgb(88, 88, 88)" stroke-opacity="0.23"/><path d="M692.7 180.5L828.7 174.3" stroke="rgb(88, 88, 88)" stroke-opacity="0.20"/><path d="M828.7 174.3L937.7 169.3" stroke="rgb(88, 88, 88)" stroke-opacity="0.11"/><path d="M340.6 198.3L566.0 187.8" stroke="rgb(88, 88, 88)" stroke-opacity="0.25"/><path d="M566.0 187.8L634.8 184.6" stroke="rgb(88, 88, 88)" stroke-opacity="0.27"/><path d="M634.8 184.6L697.0 181.7" stroke="rgb(88, 88, 88)" stroke-opacity="0.26"/><path d="M697.0 181.7L753.5 179.0" stroke="rgb(88, 88, 88)" stroke-opacity="0.24"/><path d="M753.5 179.0L881.6 173.0" stroke="rgb(88, 88, 88)" stroke-opacity="0.19"/><path d="M881.6 173.0L984.5 168.2" stroke="rgb(88, 88, 88)" stroke-opacity="0.08"/><path d="M513.2 191.9L590.3 188.3" stroke="rgb(88, 88, 88)" stroke-opacity="0.29"/><path d="M590.3 188.3L659.4 184.9" stroke="rgb(88, 88, 88)" stroke-opacity="0.29"/><path d="M659.4 184.9L721.8 182.0" stroke="rgb(88, 88, 88)" stroke-opacity="0.28"/><path d="M721.8 182.0L778.3 179.2" stroke="rgb(88, 88, 88)" stroke-opacity="0.26"/><path d="M778.3 179.2L829.7 176.8" stroke="rgb(88, 88, 88)" stroke-opacity="0.23"/><path d="M829.7 176.8L946.8 171.2" stroke="rgb(88, 88, 88)" stroke-opacity="0.16"/><path d="M510.3 193.9L591.0 190.0" stroke="rgb(88, 88, 88)" stroke-opacity="0.31"/><path d="M591.0 190.0L662.9 186.4" stroke="rgb(88, 88, 88)" stroke-opacity="0.31"/><path d="M662.9 186.4L727.5 183.2" stroke="rgb(88, 88, 88)" stroke-opacity="0.30"/><path d="M727.5 183.2L785.9 180.4" stroke="rgb(88, 88, 88)" stroke-opacity="0.28"/><path d="M785.9 180.4L838.8 177.8" stroke="rgb(88, 88, 88)" stroke-opacity="0.25"/><path d="M838.8 177.8L958.6 171.9" stroke="rgb(88, 88, 88)" stroke-opacity="0.18"/><path d="M958.6 171.9L1054.6 167.1" stroke="rgb(88, 88, 88)" stroke-opacity="0.05"/><path d="M507.1 196.1L591.7 191.8" stroke="rgb(88, 88, 88)" stroke-opacity="0.34"/><path d="M591.7 191.8L666.7 188.0" stroke="rgb(88, 88, 88)" stroke-opacity="0.34"/><path d="M666.7 188.0L733.8 184.6" stroke="rgb(88, 88, 88)" stroke-opacity="0.33"/><path d="M733.8 184.6L794.0 181.6" stroke="rgb(88, 88, 88)" stroke-opacity="0.31"/><path d="M794.0 181.6L848.5 178.8" stroke="rgb(88, 88, 88)" stroke-opacity="0.28"/><path d="M848.5 178.8L898.0 176.3" stroke="rgb(88, 88, 88)" stroke-opacity="0.24"/><path d="M898.0 176.3L1010.2 170.6" stroke="rgb(88, 88, 88)" stroke-opacity="0.15"/><path d="M503.6 198.5L592.4 193.9" stroke="rgb(88, 88, 88)" stroke-opacity="0.36"/><path d="M592.4 193.9L670.8 189.8" stroke="rgb(88, 88, 88)" stroke-opacity="0.36"/><path d="M670.8 189.8L740.5 186.1" stroke="rgb(88, 88, 88)" stroke-opacity="0.35"/><path d="M740.5 186.1L802.9 182.9" stroke="rgb(88, 88, 88)" stroke-opacity="0.33"/><path d="M802.9 182.9L859.0 180.0" stroke="rgb(88, 88, 88)" stroke-opacity="0.30"/><path d="M859.0 180.0L909.8 177.3" stroke="rgb(88, 88, 88)" stroke-opacity="0.26"/><path d="M909.8 177.3L1024.3 171.3" stroke="rgb(88, 88, 88)" stroke-opacity="0.17"/><path d="M499.8 201.2L593.3 196.1" stroke="rgb(88, 88, 88)" stroke-opacity="0.39"/><path d="M593.3 196.1L675.3 191.7" stroke="rgb(88, 88, 88)" stroke-opacity="0.39"/><path d="M675.3 191.7L747.9 187.8" stroke="rgb(88, 88, 88)" stroke-opacity="0.38"/><path d="M747.9 187.8L812.5 184.3" stroke="rgb(88, 88, 88)" stroke-opacity="0.35"/><path d="M812.5 184.3L870.3 181.2" stroke="rgb(88, 88, 88)" stroke-opacity="0.32"/><path d="M870.3 181.2L922.5 178.4" stroke="rgb(88, 88, 88)" stroke-opacity="0.28"/><path d="M922.5 178.4L969.8 175.8" stroke="rgb(88, 88, 88)" stroke-opacity="0.23"/><path d="M969.8 175.8L1076.5 170.1" stroke="rgb(88, 88, 88)" stroke-opacity="0.13"/><path d="M530.0 202.2L624.2 196.9" stroke="rgb(88, 88, 88)" stroke-opacity="0.42"/><path d="M624.2 196.9L706.6 192.3" stroke="rgb(88, 88, 88)" stroke-opacity="0.41"/><path d="M706.6 192.3L779.1 188.3" stroke="rgb(88, 88, 88)" stroke-opacity="0.39"/><path d="M779.1 188.3L843.5 184.7" stroke="rgb(88, 88, 88)" stroke-opacity="0.36"/><path d="M843.5 184.7L901.1 181.5" stroke="rgb(88, 88, 88)" stroke-opacity="0.33"/><path d="M901.1 181.5L952.9 178.6" stroke="rgb(88, 88, 88)" stroke-opacity="0.28"/><path d="M952.9 178.6L999.7 176.0" stroke="rgb(88, 88, 88)" stroke-opacity="0.23"/><path d="M999.7 176.0L1105.0 170.1" stroke="rgb(88, 88, 88)" stroke-opacity="0.13"/><path d="M527.3 205.3L626.9 199.6" stroke="rgb(88, 88, 88)" stroke-opacity="0.44"/><path d="M626.9 199.6L713.3 194.6" stroke="rgb(88, 88, 88)" stroke-opacity="0.44"/><path d="M713.3 194.6L788.9 190.2" stroke="rgb(88, 88, 88)" stroke-opacity="0.42"/><path d="M788.9 190.2L855.6 186.3" stroke="rgb(88, 88, 88)" stroke-opacity="0.39"/><path d="M855.6 186.3L915.0 182.9" stroke="rgb(88, 88, 88)" stroke-opacity="0.35"/><path d="M915.0 182.9L968.1 179.8" stroke="rgb(88, 88, 88)" stroke-opacity="0.30"/><path d="M968.1 179.8L1015.9 177.0" stroke="rgb(88, 88, 88)" stroke-opacity="0.25"/><path d="M1015.9 177.0L1122.9 170.8" stroke="rgb(88, 88, 88)" stroke-opacity="0.14"/><path d="M524.3 208.8L629.9 202.5" stroke="rgb(88, 88, 88)" stroke-opacity="0.47"/><path d="M629.9 202.5L720.7 197.0" stroke="rgb(88, 88, 88)" stroke-opacity="0.46"/><path d="M720.7 197.0L799.6 192.2" stroke="rgb(88, 88, 88)" stroke-opacity="0.44"/><path d="M799.6 192.2L868.9 188.1" stroke="rgb(88, 88, 88)" stroke-opacity="0.41"/><path d="M868.9 188.1L930.1 184.4" stroke="rgb(88, 88, 88)" stroke-opacity="0.37"/><path d="M930.1 184.4L984.6 181.1" stroke="rgb(88, 88, 88)" stroke-opacity="0.32"/><path d="M984.6 181.1L1033.5 178.1" stroke="rgb(88, 88, 88)" stroke-opacity="0.27"/><path d="M1033.5 178.1L1077.6 175.5" stroke="rgb(88, 88, 88)" stroke-opacity="0.21"/><path d="M520.9 212.8L633.2 205.8" stroke="rgb(88, 88, 88)" stroke-opacity="0.49"/><path d="M633.2 205.8L728.9 199.7" stroke="rgb(88, 88, 88)" stroke-opacity="0.48"/><path d="M728.9 199.7L811.5 194.5" stroke="rgb(88, 88, 88)" stroke-opacity="0.46"/><path d="M811.5 194.5L883.4 190.0" stroke="rgb(88, 88, 88)" stroke-opacity="0.43"/><path d="M883.4 190.0L946.6 186.0" stroke="rgb(88, 88, 88)" stroke-opacity="0.39"/><path d="M946.6 186.0L1002.6 182.5" stroke="rgb(88, 88, 88)" stroke-opacity="0.34"/><path d="M1002.6 182.5L1052.6 179.3" stroke="rgb(88, 88, 88)" stroke-opacity="0.28"/><path d="M1052.6 179.3L1097.4 176.5" stroke="rgb(88, 88, 88)" stroke-opacity="0.22"/><path d="M516.9 217.4L637.0 209.5" stroke="rgb(88, 88, 88)" stroke-opacity="0.52"/><path d="M637.0 209.5L738.2 202.8" stroke="rgb(88, 88, 88)" stroke-opacity="0.51"/><path d="M738.2 202.8L824.7 197.1" stroke="rgb(88, 88, 88)" stroke-opacity="0.49"/><path d="M824.7 197.1L899.5 192.1" stroke="rgb(88, 88, 88)" stroke-opacity="0.45"/><path d="M899.5 192.1L964.7 187.8" stroke="rgb(88, 88, 88)" stroke-opacity="0.41"/><path d="M964.7 187.8L1022.2 184.0" stroke="rgb(88, 88, 88)" stroke-opacity="0.36"/><path d="M1022.2 184.0L1073.2 180.6" stroke="rgb(88, 88, 88)" stroke-opacity="0.30"/><path d="M512.4 222.6L641.3 213.7" stroke="rgb(88, 88, 88)" stroke-opacity="0.54"/><path d="M641.3 213.7L748.7 206.2" stroke="rgb(88, 88, 88)" stroke-opacity="0.53"/><path d="M748.7 206.2L839.5 199.9" stroke="rgb(88, 88, 88)" stroke-opacity="0.51"/><path d="M839.5 199.9L917.3 194.5" stroke="rgb(88, 88, 88)" stroke-opacity="0.47"/><path d="M917.3 194.5L984.7 189.8" stroke="rgb(88, 88, 88)" stroke-opacity="0.43"/><path d="M984.7 189.8L1043.7 185.7" stroke="rgb(88, 88, 88)" stroke-opacity="0.37"/><path d="M1043.7 185.7L1095.8 182.1" stroke="rgb(88, 88, 88)" stroke-opacity="0.31"/><path d="M507.2 228.8L646.3 218.5" stroke="rgb(88, 88, 88)" stroke-opacity="0.57"/><path d="M646.3 218.5L760.5 210.1" stroke="rgb(88, 88, 88)" stroke-opacity="0.56"/><path d="M760.5 210.1L856.1 203.1" stroke="rgb(88, 88, 88)" stroke-opacity="0.53"/><path d="M856.1 203.1L937.2 197.1" stroke="rgb(88, 88, 88)" stroke-opacity="0.49"/><path d="M937.2 197.1L1006.9 192.0" stroke="rgb(88, 88, 88)" stroke-opacity="0.44"/><path d="M1006.9 192.0L1067.4 187.5" stroke="rgb(88, 88, 88)" stroke-opacity="0.39"/><path d="M500.9 236.0L652.0 224.2" stroke="rgb(88, 88, 88)" stroke-opacity="0.59"/><path d="M652.0 224.2L774.2 214.6" stroke="rgb(88, 88, 88)" stroke-opacity="0.58"/><path d="M774.2 214.6L875.0 206.7" stroke="rgb(88, 88, 88)" stroke-opacity="0.55"/><path d="M875.0 206.7L959.6 200.1" stroke="rgb(88, 88, 88)" stroke-opacity="0.51"/><path d="M959.6 200.1L1031.6 194.4" stroke="rgb(88, 88, 88)" stroke-opacity="0.46"/><path d="M1031.6 194.4L1093.7 189.6" stroke="rgb(88, 88, 88)" stroke-opacity="0.40"/><path d="M493.5 244.7L658.8 230.8" stroke="rgb(88, 88, 88)" stroke-opacity="0.62"/><path d="M658.8 230.8L790.0 219.8" stroke="rgb(88, 88, 88)" stroke-opacity="0.61"/><path d="M790.0 219.8L896.6 210.9" stroke="rgb(88, 88, 88)" stroke-opacity="0.58"/><path d="M896.6 210.9L984.9 203.4" stroke="rgb(88, 88, 88)" stroke-opacity="0.53"/><path d="M984.9 203.4L1059.3 197.2" stroke="rgb(88, 88, 88)" stroke-opacity="0.48"/><path d="M484.3 255.4L666.9 238.8" stroke="rgb(88, 88, 88)" stroke-opacity="0.64"/><path d="M666.9 238.8L808.5 225.9" stroke="rgb(88, 88, 88)" stroke-opacity="0.63"/><path d="M808.5 225.9L921.5 215.6" stroke="rgb(88, 88, 88)" stroke-opacity="0.60"/><path d="M921.5 215.6L1013.8 207.3" stroke="rgb(88, 88, 88)" stroke-opacity="0.55"/><path d="M1013.8 207.3L1090.6 200.3" stroke="rgb(88, 88, 88)" stroke-opacity="0.49"/><path d="M472.9 268.7L676.8 248.5" stroke="rgb(88, 88, 88)" stroke-opacity="0.67"/><path d="M676.8 248.5L732.6 242.9" stroke="rgb(88, 88, 88)" stroke-opacity="0.66"/><path d="M732.6 242.9L873.8 228.9" stroke="rgb(88, 88, 88)" stroke-opacity="0.64"/><path d="M873.8 228.9L985.1 217.8" stroke="rgb(88, 88, 88)" stroke-opacity="0.60"/><path d="M985.1 217.8L1075.1 208.9" stroke="rgb(88, 88, 88)" stroke-opacity="0.55"/><path d="M458.2 285.9L544.1 276.4" stroke="rgb(88, 88, 88)" stroke-opacity="0.69"/><path d="M544.1 276.4L620.6 268.0" stroke="rgb(88, 88, 88)" stroke-opacity="0.69"/><path d="M620.6 268.0L689.1 260.5" stroke="rgb(88, 88, 88)" stroke-opacity="0.69"/><path d="M689.1 260.5L750.7 253.7" stroke="rgb(88, 88, 88)" stroke-opacity="0.69"/><path d="M750.7 253.7L806.5 247.5" stroke="rgb(88, 88, 88)" stroke-opacity="0.68"/><path d="M806.5 247.5L857.2 242.0" stroke="rgb(88, 88, 88)" stroke-opacity="0.67"/><path d="M857.2 242.0L985.2 227.9" stroke="rgb(88, 88, 88)" stroke-opacity="0.64"/><path d="M985.2 227.9L1085.9 216.8" stroke="rgb(88, 88, 88)" stroke-opacity="0.58"/><path d="M438.5 308.8L539.2 296.3" stroke="rgb(88, 88, 88)" stroke-opacity="0.71"/><path d="M539.2 296.3L627.2 285.4" stroke="rgb(88, 88, 88)" stroke-opacity="0.72"/><path d="M627.2 285.4L704.7 275.8" stroke="rgb(88, 88, 88)" stroke-opacity="0.71"/><path d="M704.7 275.8L773.5 267.2" stroke="rgb(88, 88, 88)" stroke-opacity="0.71"/><path d="M773.5 267.2L834.9 259.6" stroke="rgb(88, 88, 88)" stroke-opacity="0.70"/><path d="M834.9 259.6L890.1 252.8" stroke="rgb(88, 88, 88)" stroke-opacity="0.69"/><path d="M890.1 252.8L940.1 246.6" stroke="rgb(88, 88, 88)" stroke-opacity="0.67"/><path d="M940.1 246.6L985.4 241.0" stroke="rgb(88, 88, 88)" stroke-opacity="0.66"/><path d="M985.4 241.0L1099.5 226.8" stroke="rgb(88, 88, 88)" stroke-opacity="0.62"/><path d="M547.2 182.1L536.5 194.6" stroke="rgb(88, 88, 88)" stroke-opacity="0.24"/><path d="M536.5 194.6L530.0 202.2" stroke="rgb(88, 88, 88)" stroke-opacity="0.38"/><path d="M532.5 323.5L636.1 308.7" stroke="rgb(88, 88, 88)" stroke-opacity="0.74"/><path d="M636.1 308.7L725.3 296.0" stroke="rgb(88, 88, 88)" stroke-opacity="0.74"/><path d="M725.3 296.0L803.0 284.9" stroke="rgb(88, 88, 88)" stroke-opacity="0.73"/><path d="M803.0 284.9L871.3 275.1" stroke="rgb(88, 88, 88)" stroke-opacity="0.72"/><path d="M871.3 275.1L931.7 266.5" stroke="rgb(88, 88, 88)" stroke-opacity="0.71"/><path d="M931.7 266.5L985.6 258.8" stroke="rgb(88, 88, 88)" stroke-opacity="0.69"/><path d="M985.6 258.8L1034.0 251.9" stroke="rgb(88, 88, 88)" stroke-opacity="0.67"/><path d="M1034.0 251.9L1077.6 245.6" stroke="rgb(88, 88, 88)" stroke-opacity="0.65"/><path d="M569.3 174.4L567.6 181.2" stroke="rgb(88, 88, 88)" stroke-opacity="0.04"/><path d="M567.6 181.2L564.6 193.2" stroke="rgb(88, 88, 88)" stroke-opacity="0.24"/><path d="M564.6 193.2L562.9 200.4" stroke="rgb(88, 88, 88)" stroke-opacity="0.38"/><path d="M562.9 200.4L560.4 210.3" stroke="rgb(88, 88, 88)" stroke-opacity="0.45"/><path d="M560.4 210.3L556.8 225.1" stroke="rgb(88, 88, 88)" stroke-opacity="0.53"/><path d="M556.8 225.1L550.8 249.4" stroke="rgb(88, 88, 88)" stroke-opacity="0.60"/><path d="M550.8 249.4L539.2 296.3" stroke="rgb(88, 88, 88)" stroke-opacity="0.68"/><path d="M539.2 296.3L532.5 323.5" stroke="rgb(88, 88, 88)" stroke-opacity="0.73"/><path d="M522.8 363.1L648.6 341.7" stroke="rgb(88, 88, 88)" stroke-opacity="0.75"/><path d="M648.6 341.7L753.7 323.8" stroke="rgb(88, 88, 88)" stroke-opacity="0.75"/><path d="M753.7 323.8L842.9 308.7" stroke="rgb(88, 88, 88)" stroke-opacity="0.75"/><path d="M842.9 308.7L919.5 295.6" stroke="rgb(88, 88, 88)" stroke-opacity="0.74"/><path d="M919.5 295.6L985.9 284.3" stroke="rgb(88, 88, 88)" stroke-opacity="0.73"/><path d="M985.9 284.3L1044.2 274.4" stroke="rgb(88, 88, 88)" stroke-opacity="0.71"/><path d="M1044.2 274.4L1095.7 265.7" stroke="rgb(88, 88, 88)" stroke-opacity="0.69"/><path d="M584.8 173.8L587.3 180.4" stroke="rgb(88, 88, 88)" stroke-opacity="0.04"/><path d="M587.3 180.4L591.7 191.8" stroke="rgb(88, 88, 88)" stroke-opacity="0.24"/><path d="M591.7 191.8L594.2 198.6" stroke="rgb(88, 88, 88)" stroke-opacity="0.38"/><path d="M594.2 198.6L597.8 208.0" stroke="rgb(88, 88, 88)" stroke-opacity="0.45"/><path d="M597.8 208.0L603.0 221.7" stroke="rgb(88, 88, 88)" stroke-opacity="0.53"/><path d="M603.0 221.7L611.4 243.8" stroke="rgb(88, 88, 88)" stroke-opacity="0.60"/><path d="M611.4 243.8L627.2 285.4" stroke="rgb(88, 88, 88)" stroke-opacity="0.68"/><path d="M627.2 285.4L636.1 308.7" stroke="rgb(88, 88, 88)" stroke-opacity="0.73"/><path d="M636.1 308.7L648.6 341.7" stroke="rgb(88, 88, 88)" stroke-opacity="0.75"/><path d="M648.6 341.7L667.6 391.9" stroke="rgb(88, 88, 88)" stroke-opacity="0.75"/><path d="M667.6 391.9L700.1 477.4" stroke="rgb(88, 88, 88)" stroke-opacity="0.75"/><path d="M700.1 477.4L768.0 656.2" stroke="rgb(88, 88, 88)" stroke-opacity="0.75"/><path d="M768.0 656.2L998.3 1262.4" stroke="rgb(88, 88, 88)" stroke-opacity="0.75"/><path d="M478.9 541.1L700.1 477.4" stroke="rgb(88, 88, 88)" stroke-opacity="0.75"/><path d="M700.1 477.4L862.8 430.6" stroke="rgb(88, 88, 88)" stroke-opacity="0.75"/><path d="M862.8 430.6L987.3 394.8" stroke="rgb(88, 88, 88)" stroke-opacity="0.75"/><path d="M987.3 394.8L1085.8 366.4" stroke="rgb(88, 88, 88)" stroke-opacity="0.75"/><path d="M625.1 178.8L642.6 189.2" stroke="rgb(88, 88, 88)" stroke-opacity="0.24"/><path d="M642.6 189.2L652.9 195.3" stroke="rgb(88, 88, 88)" stroke-opacity="0.37"/><path d="M652.9 195.3L666.8 203.6" stroke="rgb(88, 88, 88)" stroke-opacity="0.45"/><path d="M666.8 203.6L686.8 215.6" stroke="rgb(88, 88, 88)" stroke-opacity="0.52"/><path d="M686.8 215.6L718.0 234.2" stroke="rgb(88, 88, 88)" stroke-opacity="0.60"/><path d="M718.0 234.2L773.5 267.2" stroke="rgb(88, 88, 88)" stroke-opacity="0.67"/><path d="M773.5 267.2L803.0 284.9" stroke="rgb(88, 88, 88)" stroke-opacity="0.72"/><path d="M803.0 284.9L842.9 308.7" stroke="rgb(88, 88, 88)" stroke-opacity="0.74"/><path d="M842.9 308.7L899.7 342.6" stroke="rgb(88, 88, 88)" stroke-opacity="0.75"/><path d="M899.7 342.6L987.3 394.8" stroke="rgb(88, 88, 88)" stroke-opacity="0.75"/><path d="M987.3 394.8L1139.7 485.7" stroke="rgb(88, 88, 88)" stroke-opacity="0.75"/><path d="M410.1 820.4L768.0 656.2" stroke="rgb(88, 88, 88)" stroke-opacity="0.75"/><path d="M768.0 656.2L989.3 554.7" stroke="rgb(88, 88, 88)" stroke-opacity="0.75"/><path d="M989.3 554.7L1139.7 485.7" stroke="rgb(88, 88, 88)" stroke-opacity="0.75"/><path d="M643.3 178.1L666.7 188.0" stroke="rgb(88, 88, 88)" stroke-opacity="0.24"/><path d="M666.7 188.0L680.3 193.8" stroke="rgb(88, 88, 88)" stroke-opacity="0.37"/><path d="M680.3 193.8L698.6 201.6" stroke="rgb(88, 88, 88)" stroke-opacity="0.45"/><path d="M698.6 201.6L724.8 212.8" stroke="rgb(88, 88, 88)" stroke-opacity="0.52"/><path d="M724.8 212.8L765.0 229.9" stroke="rgb(88, 88, 88)" stroke-opacity="0.59"/><path d="M765.0 229.9L834.9 259.6" stroke="rgb(88, 88, 88)" stroke-opacity="0.66"/><path d="M834.9 259.6L871.3 275.1" stroke="rgb(88, 88, 88)" stroke-opacity="0.71"/><path d="M871.3 275.1L919.5 295.6" stroke="rgb(88, 88, 88)" stroke-opacity="0.73"/><path d="M919.5 295.6L986.4 324.1" stroke="rgb(88, 88, 88)" stroke-opacity="0.75"/><path d="M986.4 324.1L1085.8 366.4" stroke="rgb(88, 88, 88)" stroke-opacity="0.75"/><path d="M660.9 177.3L689.9 186.9" stroke="rgb(88, 88, 88)" stroke-opacity="0.23"/><path d="M689.9 186.9L706.6 192.3" stroke="rgb(88, 88, 88)" stroke-opacity="0.37"/><path d="M706.6 192.3L728.9 199.7" stroke="rgb(88, 88, 88)" stroke-opacity="0.44"/><path d="M728.9 199.7L760.5 210.1" stroke="rgb(88, 88, 88)" stroke-opacity="0.51"/><path d="M760.5 210.1L808.5 225.9" stroke="rgb(88, 88, 88)" stroke-opacity="0.58"/><path d="M808.5 225.9L890.1 252.8" stroke="rgb(88, 88, 88)" stroke-opacity="0.65"/><path d="M890.1 252.8L931.7 266.5" stroke="rgb(88, 88, 88)" stroke-opacity="0.69"/><path d="M931.7 266.5L985.9 284.3" stroke="rgb(88, 88, 88)" stroke-opacity="0.71"/><path d="M985.9 284.3L1059.6 308.6" stroke="rgb(88, 88, 88)" stroke-opacity="0.73"/><path d="M678.0 176.6L712.2 185.7" stroke="rgb(88, 88, 88)" stroke-opacity="0.23"/><path d="M712.2 185.7L731.7 190.9" stroke="rgb(88, 88, 88)" stroke-opacity="0.36"/><path d="M731.7 190.9L757.8 197.9" stroke="rgb(88, 88, 88)" stroke-opacity="0.43"/><path d="M757.8 197.9L794.2 207.6" stroke="rgb(88, 88, 88)" stroke-opacity="0.50"/><path d="M794.2 207.6L848.9 222.3" stroke="rgb(88, 88, 88)" stroke-opacity="0.57"/><path d="M848.9 222.3L940.1 246.6" stroke="rgb(88, 88, 88)" stroke-opacity="0.64"/><path d="M940.1 246.6L985.6 258.8" stroke="rgb(88, 88, 88)" stroke-opacity="0.67"/><path d="M985.6 258.8L1044.2 274.4" stroke="rgb(88, 88, 88)" stroke-opacity="0.69"/><path d="M1044.2 274.4L1122.3 295.3" stroke="rgb(88, 88, 88)" stroke-opacity="0.71"/><path d="M694.7 175.9L733.8 184.6" stroke="rgb(88, 88, 88)" stroke-opacity="0.22"/><path d="M733.8 184.6L755.9 189.6" stroke="rgb(88, 88, 88)" stroke-opacity="0.35"/><path d="M755.9 189.6L785.3 196.2" stroke="rgb(88, 88, 88)" stroke-opacity="0.42"/><path d="M785.3 196.2L826.0 205.3" stroke="rgb(88, 88, 88)" stroke-opacity="0.49"/><path d="M826.0 205.3L886.5 218.8" stroke="rgb(88, 88, 88)" stroke-opacity="0.56"/><path d="M886.5 218.8L985.4 241.0" stroke="rgb(88, 88, 88)" stroke-opacity="0.62"/><path d="M985.4 241.0L1176.5 283.8" stroke="rgb(88, 88, 88)" stroke-opacity="0.67"/><path d="M711.0 175.2L754.5 183.6" stroke="rgb(88, 88, 88)" stroke-opacity="0.21"/><path d="M754.5 183.6L779.1 188.3" stroke="rgb(88, 88, 88)" stroke-opacity="0.35"/><path d="M779.1 188.3L811.5 194.5" stroke="rgb(88, 88, 88)" stroke-opacity="0.41"/><path d="M811.5 194.5L856.1 203.1" stroke="rgb(88, 88, 88)" stroke-opacity="0.48"/><path d="M856.1 203.1L921.5 215.6" stroke="rgb(88, 88, 88)" stroke-opacity="0.55"/><path d="M921.5 215.6L1026.7 235.9" stroke="rgb(88, 88, 88)" stroke-opacity="0.60"/><path d="M1026.7 235.9L1223.9 273.7" stroke="rgb(88, 88, 88)" stroke-opacity="0.65"/><path d="M726.8 174.5L774.6 182.6" stroke="rgb(88, 88, 88)" stroke-opacity="0.21"/><path d="M774.6 182.6L801.4 187.1" stroke="rgb(88, 88, 88)" stroke-opacity="0.34"/><path d="M801.4 187.1L836.5 192.9" stroke="rgb(88, 88, 88)" stroke-opacity="0.40"/><path d="M836.5 192.9L884.6 201.0" stroke="rgb(88, 88, 88)" stroke-opacity="0.47"/><path d="M884.6 201.0L954.3 212.7" stroke="rgb(88, 88, 88)" stroke-opacity="0.53"/><path d="M954.3 212.7L1064.6 231.2" stroke="rgb(88, 88, 88)" stroke-opacity="0.59"/><path d="M742.2 173.9L794.0 181.6" stroke="rgb(88, 88, 88)" stroke-opacity="0.20"/><path d="M794.0 181.6L822.9 185.9" stroke="rgb(88, 88, 88)" stroke-opacity="0.33"/><path d="M822.9 185.9L860.5 191.4" stroke="rgb(88, 88, 88)" stroke-opacity="0.39"/><path d="M860.5 191.4L911.6 199.0" stroke="rgb(88, 88, 88)" stroke-opacity="0.46"/><path d="M911.6 199.0L985.0 209.9" stroke="rgb(88, 88, 88)" stroke-opacity="0.51"/><path d="M985.0 209.9L1099.5 226.8" stroke="rgb(88, 88, 88)" stroke-opacity="0.57"/><path d="M757.2 173.3L812.8 180.6" stroke="rgb(88, 88, 88)" stroke-opacity="0.19"/><path d="M812.8 180.6L843.5 184.7" stroke="rgb(88, 88, 88)" stroke-opacity="0.31"/><path d="M843.5 184.7L883.4 190.0" stroke="rgb(88, 88, 88)" stroke-opacity="0.38"/><path d="M883.4 190.0L937.2 197.1" stroke="rgb(88, 88, 88)" stroke-opacity="0.44"/><path d="M937.2 197.1L1013.8 207.3" stroke="rgb(88, 88, 88)" stroke-opacity="0.50"/><path d="M1013.8 207.3L1131.6 222.9" stroke="rgb(88, 88, 88)" stroke-opacity="0.55"/><path d="M771.9 172.7L831.0 179.7" stroke="rgb(88, 88, 88)" stroke-opacity="0.18"/><path d="M831.0 179.7L863.4 183.6" stroke="rgb(88, 88, 88)" stroke-opacity="0.30"/><path d="M863.4 183.6L905.4 188.6" stroke="rgb(88, 88, 88)" stroke-opacity="0.37"/><path d="M905.4 188.6L961.6 195.3" stroke="rgb(88, 88, 88)" stroke-opacity="0.43"/><path d="M961.6 195.3L1040.9 204.8" stroke="rgb(88, 88, 88)" stroke-opacity="0.48"/><path d="M1040.9 204.8L1161.3 219.2" stroke="rgb(88, 88, 88)" stroke-opacity="0.53"/><path d="M786.2 172.1L848.5 178.8" stroke="rgb(88, 88, 88)" stroke-opacity="0.17"/><path d="M848.5 178.8L882.6 182.5" stroke="rgb(88, 88, 88)" stroke-opacity="0.29"/><path d="M882.6 182.5L926.4 187.3" stroke="rgb(88, 88, 88)" stroke-opacity="0.35"/><path d="M926.4 187.3L984.8 193.6" stroke="rgb(88, 88, 88)" stroke-opacity="0.41"/><path d="M984.8 193.6L1066.5 202.5" stroke="rgb(88, 88, 88)" stroke-opacity="0.46"/><path d="M800.1 171.5L865.5 178.0" stroke="rgb(88, 88, 88)" stroke-opacity="0.16"/><path d="M865.5 178.0L901.1 181.5" stroke="rgb(88, 88, 88)" stroke-opacity="0.28"/><path d="M901.1 181.5L946.6 186.0" stroke="rgb(88, 88, 88)" stroke-opacity="0.34"/><path d="M946.6 186.0L1006.9 192.0" stroke="rgb(88, 88, 88)" stroke-opacity="0.39"/><path d="M1006.9 192.0L1090.6 200.3" stroke="rgb(88, 88, 88)" stroke-opacity="0.44"/><path d="M813.7 170.9L882.0 177.1" stroke="rgb(88, 88, 88)" stroke-opacity="0.15"/><path d="M882.0 177.1L1005.3 188.4" stroke="rgb(88, 88, 88)" stroke-opacity="0.31"/><path d="M1005.3 188.4L1081.6 195.3" stroke="rgb(88, 88, 88)" stroke-opacity="0.41"/><path d="M827.0 170.3L898.0 176.3" stroke="rgb(88, 88, 88)" stroke-opacity="0.13"/><path d="M898.0 176.3L1024.9 187.0" stroke="rgb(88, 88, 88)" stroke-opacity="0.29"/><path d="M1024.9 187.0L1102.7 193.5" stroke="rgb(88, 88, 88)" stroke-opacity="0.39"/><path d="M840.0 169.8L913.5 175.5" stroke="rgb(88, 88, 88)" stroke-opacity="0.12"/><path d="M913.5 175.5L1043.7 185.7" stroke="rgb(88, 88, 88)" stroke-opacity="0.28"/><path d="M1043.7 185.7L1122.8 191.8" stroke="rgb(88, 88, 88)" stroke-opacity="0.37"/><path d="M852.6 169.3L928.6 174.8" stroke="rgb(88, 88, 88)" stroke-opacity="0.11"/><path d="M928.6 174.8L1061.8 184.4" stroke="rgb(88, 88, 88)" stroke-opacity="0.26"/><path d="M865.0 168.7L943.2 174.0" stroke="rgb(88, 88, 88)" stroke-opacity="0.09"/><path d="M943.2 174.0L1079.1 183.2" stroke="rgb(88, 88, 88)" stroke-opacity="0.24"/><path d="M877.1 168.2L957.3 173.3" stroke="rgb(88, 88, 88)" stroke-opacity="0.08"/><path d="M957.3 173.3L1095.8 182.1" stroke="rgb(88, 88, 88)" stroke-opacity="0.22"/><path d="M888.9 167.7L971.1 172.6" stroke="rgb(88, 88, 88)" stroke-opacity="0.06"/><path d="M971.1 172.6L1111.8 180.9" stroke="rgb(88, 88, 88)" stroke-opacity="0.20"/><path d="M900.5 167.3L984.5 171.9" stroke="rgb(88, 88, 88)" stroke-opacity="0.04"/><path d="M984.5 171.9L1127.2 179.9" stroke="rgb(88, 88, 88)" stroke-opacity="0.18"/><path d="M997.5 171.3L1142.1 178.8" stroke="rgb(88, 88, 88)" stroke-opacity="0.16"/><path d="M1010.2 170.6L1156.4 177.8" stroke="rgb(88, 88, 88)" stroke-opacity="0.14"/><path d="M1022.5 170.0L1170.1 176.9" stroke="rgb(88, 88, 88)" stroke-opacity="0.12"/><path d="M1034.5 169.4L1183.4 176.0" stroke="rgb(88, 88, 88)" stroke-opacity="0.10"/><path d="M1046.2 168.8L1196.3 175.1" stroke="rgb(88, 88, 88)" stroke-opacity="0.08"/><path d="M592.8 166.1L595.8 169.1" stroke="rgb(176, 85, 48)" stroke-opacity="0.30"/><path d="M595.8 169.1L600.0 173.2" stroke="rgb(176, 85, 48)" stroke-opacity="0.42"/><path d="M600.0 173.2L606.5 179.6" stroke="rgb(176, 85, 48)" stroke-opacity="0.54"/><path d="M606.5 179.6L617.7 190.5" stroke="rgb(176, 85, 48)" stroke-opacity="0.66"/><path d="M617.7 190.5L624.2 196.9" stroke="rgb(176, 85, 48)" stroke-opacity="0.74"/><path d="M624.2 196.9L633.2 205.8" stroke="rgb(176, 85, 48)" stroke-opacity="0.79"/><path d="M633.2 205.8L646.3 218.5" stroke="rgb(176, 85, 48)" stroke-opacity="0.83"/><path d="M646.3 218.5L666.9 238.8" stroke="rgb(176, 85, 48)" stroke-opacity="0.88"/><path d="M666.9 238.8L704.7 275.8" stroke="rgb(176, 85, 48)" stroke-opacity="0.90"/><path d="M704.7 275.8L725.3 296.0" stroke="rgb(176, 85, 48)" stroke-opacity="0.90"/><path d="M725.3 296.0L753.7 323.8" stroke="rgb(176, 85, 48)" stroke-opacity="0.90"/><path d="M753.7 323.8L795.5 364.7" stroke="rgb(176, 85, 48)" stroke-opacity="0.90"/><path d="M507.3 425.9L667.6 391.9" stroke="rgb(95, 154, 90)" stroke-opacity="0.90"/><path d="M667.6 391.9L795.5 364.7" stroke="rgb(95, 154, 90)" stroke-opacity="0.90"/><path d="M795.5 364.7L899.7 342.6" stroke="rgb(95, 154, 90)" stroke-opacity="0.90"/><path d="M899.7 342.6L986.4 324.1" stroke="rgb(95, 154, 90)" stroke-opacity="0.90"/><path d="M986.4 324.1L1059.6 308.6" stroke="rgb(95, 154, 90)" stroke-opacity="0.90"/><defs><clipPath id="cf"><polygon points="675.3,294.3 1018.2,248 964.2,504.2 717.2,601.7"/></clipPath><clipPath id="cl"><polygon points="628.4,227.2 675.3,294.3 717.2,601.7 664.6,433.2"/></clipPath></defs><polygon points="628.4,227.2 846.8,209.6 1018.2,248 675.3,294.3" fill="#e2d1b2"/><polygon points="675.3,294.3 1018.2,248 964.2,504.2 717.2,601.7" fill="#d5c5b1"/><polygon points="628.4,227.2 675.3,294.3 717.2,601.7 664.6,433.2" fill="#c9b8a4"/><defs><filter id="fb" x="-5%" y="-5%" width="110%" height="110%"><feGaussianBlur stdDeviation="1.0"/></filter></defs><g clip-path="url(#cf)"><g filter="url(#fb)"><g transform="matrix(0.9939 -0.1342 0.1352 0.9916 675.30 294.30)"><g transform="skewY(-11) translate(0 -10)"><path d="M-9 0.8l9 -2.3 9 0 9 2.3 9 1.1 9 -.4 9 -1.7 9 -.5 9 2.3 9 2.2M72 3.8l9 1.1 9 -1.7 9 -2 9 .4 9 1.3 9 1.2 9 -1.5 9 -2.8 9 -1.2 9 .6 9 2.3 9 .4 9 -1.5 9 -1.2 9 .3 9 2.9 9 1.9 9 -.2 9 -1.6 9 -1.5 9 1.3 9 1.6 9 .1 9 -1.9 9 -2.9 9 -.3 9 1.4 9 1.5 9 -.2 9 -2.2 9 -.5M-9 12.2l9 1.4 9 .5 9 -1 9 -1.4 9 -.3 9 .8 9 1.2 9 1.6 9 .8 9 -1 9 -1.9 9 -1.5 9 -.8 9 0 9 1.3 9 1.2 9 -.3 9 -1.3 9 -1.4 9 -1.2 9 -.3 9 1.4 9 2.2 9 1.1 9 .2 9 -.6 9 -1.1 9 -.9 9 .8 9 1.8 9 1.4 9 .7 9 -.4 9 -1.7 9 -2 9 -.7 9 .5 9 .8 9 .9 9 .3M-9 23.5l9 -1 9 -1.4 9 -1.2 9 -.7 9 .4 9 1.7 9 2 9 .8 9 0 9 -.5 9 -1.1 9 -.8 9 .4 9 1.6 9 1.5 9 .7 9 .1 9 -1 9 -1.9 9 -1.7 9 -.2 9 .6 9 .8 9 .8 9 .3 9 -1.1 9 -1.9 9 -1.2 9 -.2 9 .6 9 1.4 9 1.8 9 1.1 9 -.4 9 -1 9 -.8 9 -.3 9 .4 9 1.5 9 1.9M-9 31.2l9 -1.4 9 -1 9 1.1 9 2.4 9 1.6 9 .6M54 33.8l9 -1.8 9 -.6 9 1.1 9 1.4 9 .9 9 -.2 9 -2.3 9 -2.2 9 -.5 9 .4 9 1.4 9 1.1 9 -.8 9 -1.7 9 -1 9 .1 9 1.5 9 2.6 9 1.1 9 -.6 9 -1.1 9 -1.1 9 .1 9 1.9 9 1.4 9 0 9 -1.2 9 -2.2 9 -1.8 9 .3 9 1.3 9 .8 9 .2M-9 39.7l9 -.4 9 1.5 9 1.8 9 1.6 9 0 9 -1.7 9 -.7 9 .7 9 1.6 9 2 9 .3 9 -1.9 9 -1.8 9 -1.1 9 .2 9 1.7 9 .6 9 -1.3 9 -1.7 9 -1.7 9 0 9 2.1 9 1.8 9 .6 9 -.5 9 -1.6 9 -.4 9 1.7 9 1.9 9 1.2 9 -.1 9 -2.2 9 -1.8 9 -.1 9 .8 9 1.3 9 .2 9 -2 9 -2.1 9 -.7M-9 51.9l9 -2.4 9 -1 9 1.3 9 1.1 9 .2 9 -1.3 9 -2.3 9 -.5 9 1.5 9 2 9 1.7 9 -.4 9 -1.7 9 -.4 9 .9 9 2 9 1.6 9 -.9 9 -2.2 9 -1.6 9 -.5 9 1.4 9 1.3 9 -.9 9 -1.7 9 -1.8 9 -.4 9 2.2 9 1.9 9 .7 9 -.6 9 -1.6 9 -.1 9 1.9 9 1.8 9 1 9 -1M324 53.1l9 -2.6 9 -1.1 9 .4M-9 62.0l9 -.2 9 -2.1 9 -.7 9 1.4 9 1.8 9 -1.6 9 -2.6 9 -1.7 9 1.7 9 1.5 9 -.5 9 -2.1 9 -.4 9 2.8 9 2.2 9 .2 9 -2.3 9 -.3 9 1.6 9 1.6 9 -1.2 9 -3.2 9 -1 9 1 9 2 9 -1.3 9 -1.8 9 -.5 9 2.7 9 2.5 9 -.4 9 -1.6 9 -.7 9 2.4 9 1.2 9 -1 9 -3.2 9 -1.1 9 1.4 9 1.2M-9 66.9l9 -2.4 9 -1.1 9 2.9 9 1.7 9 -.6 9 -1.8 9 1.2 9 2.8 9 .9 9 -2.3 9 -2.2 9 .9 9 1.5 9 -.7 9 -3.2 9 -.8 9 1.8 9 2.5 9 -1 9 -1.3 9 .3 9 3.4 9 1M207 68.7l9 -2.4 9 .7 9 1.7 9 -.6 9 -3 9 -1.6 9 1.9 9 2 9 -.2 9 -2.1 9 .8 9 2.6 9 2.1 9 -1.9 9 -1.9 9 .1M-9 76.6l9 0 9 -1.9 9 -2.4 9 1.3 9 2.4 9 1.5 9 -1.6 9 -1 9 1.3 9 2.6 9 .7 9 -2.6 9 -1.8 9 0 9 2.1 9 -.6 9 -2.3 9 -1.9 9 1.2 9 2.8 9 .5 9 -1.3 9 -1.2 9 2.2 9 2.3 9 .5 9 -2.6 9 -1.8 9 .9 9 1.4 9 -.4 9 -3.1 9 -1.2 9 1.1 9 2.8 9 0 9 -1.6 9 -.5 9 2.1 9 2.8M-9 86.5l9 1.1 9 1.4 9 .3 9 -.7 9 -1.3M36 87.3l9 -1.6 9 -1.6 9 -.5 9 1 9 1.5 9 .9 9 .4 9 -.3 9 -1.1 9 -1.3 9 -.1 9 1.2 9 1.6 9 1.5 9 1.1 9 .2 9 -1.2 9 -1.6 9 -.7 9 .2 9 .6 9 1.1 9 1 9 -.1 9 -1.6 9 -1.8 9 -1.3 9 -.7 9 .2 9 1.2 9 1.6 9 .4 9 -.7 9 -.9 9 -.9M-9 98.0l9 1.7 9 .2 9 -.7 9 -1.8 9 -2 9 -.3 9 1 9 1 9 .4 9 -.5 9 -2 9 -1.8 9 0 9 1.1 9 1.6 9 1.7 9 .4 9 -1.3 9 -1 9 -.1 9 .8 9 1.8 9 1.9M207 100.1l9 -1.5 9 -1.6 9 -1.3 9 -.3 9 1.2 9 1.3 9 -.2 9 -1.2 9 -1.7 9 -1.7 9 -.1 9 1.8 9 1.6 9 1 9 .1 9 -1.2M-9 105.1l9 -2 9 -.7 9 .6 9 1 9 1.2 9 1 9 -.2 9 -1.4 9 -1.2 9 0 9 .7 9 1.5 9 2 9 1.3 9 -.3 9 -1.3 9 -1.1 9 -.7 9 -.2 9 1.1 9 1.5 9 .5 9 -.9 9 -1.4 9 -1.7 9 -1.5 9 -.4 9 1.2 9 1.4 9 .7 9 0 9 -.6 9 -1.4 9 -1.1 9 .6 9 1.6 9 1.7 9 1.3 9 .7 9 -.6M-9 115.8l9 -1.1 9 -1.4 9 .2 9 1.5 9 1.7 9 1.5 9 .3 9 -1.6 9 -1.9 9 -.7 9 .3 9 .9 9 1.3M117 116.6l9 -1.9 9 -1.9 9 -1.1 9 0 9 1.5 9 2 9 .4 9 -.7 9 -.9 9 -1 9 .3 9 2.1 9 2 9 .8 9 -.3 9 -1.4 9 -1.8 9 -.5 9 1.2 9 1 9 .5 9 -.4 9 -2.1 9 -2.2 9 -.5 9 .7M-9 126.7l9 -1 9 -1.2 9 .2 9 1.8 9 1.5 9 .5 9 -.6 9 -2.1 9 -2.1 9 -.2M81 123.5l9 .8 9 1 9 .7 9 -.7 9 -2.1 9 -1.3 9 .1 9 1.2 9 2 9 1.7 9 -.3 9 -1.3 9 -.7 9 -.1 9 1.2 9 2.1 9 1 9 -.8 9 -1.5 9 -1.8 9 -1.2 9 .8 9 1.4 9 .4 9 -.6 9 -1.4 9 -2 9 -.6 9 1.4 9 1.8M-9 137.2l9 1.7 9 .1 9 -1.6 9 -1.8 9 -1.5 9 -.6 9 1 9 1.5 9 .3 9 -1 9 -1.3 9 -1.5 9 -.3 9 1.6 9 2.1 9 1.2 9 .4 9 -.7 9 -1.5 9 -.5 9 1.2 9 1.5 9 1.2 9 .5 9 -1.4 9 -2.3 9 -1.3 9 0 9 .6 9 1.2 9 .7 9 -1.2 9 -1.9 9 -1.1 9 -.2 9 1.1 9 2.2 9 1.6 9 -.2 9 -.8M-9 141.6l9 -1.3 9 0 9 1.4 9 1.5 9 1.3 9 .9 9 0 9 -1.2 9 -1.2 9 -.1 9 .8 9 1.2 9 1.3 9 1.2 9 -.1 9 -1.5 9 -1.7 9 -1.1 9 -.5 9 .2 9 1 9 1.2 9 .1 9 -1.2 9 -1.4 9 -1.2 9 -.9 9 .1 9 1.5 9 1.9 9 1 9 .1 9 -.4 9 -.9M297 143.6l9 -1 9 0 9 1.3 9 1.7 9 1.2 9 .5M-9 153.6l9 1.6 9 -.1 9 -1.3 9 -2.1 9 -1.6 9 .9 9 2 9 1.3 9 .4 9 -1.2 9 -1.5 9 .7 9 1.9 9 1.8 9 1.1 9 -1.2 9 -2.2 9 -.9 9 .3 9 1.3 9 1.1 9 -1.2 9 -2.3 9 -1.5 9 -.4 9 1.4M225 151.9l9 2.2 9 .3 9 -.9 9 -1.1 9 -.6 9 1.6 9 2.5 9 1.1 9 -.2 9 -1.6 9 -1.9 9 .2 9 1.3 9 .9M-9 161.4l9 -.5 9 1.8 9 1.9 9 1.1 9 -1.3 9 -2.6 9 -.8 9 .5 9 1.5 9 .4 9 -2.2 9 -2 9 -.6 9 1.3 9 2.6 9 .6 9 -1 9 -1.1 9 -.2 9 2.3 9 2.1 9 .1 9 -1.3 9 -2.4 9 -.5 9 1.5 9 .8 9 -.2 9 -2.3 9 -2.2 9 .3 9 1.6 9 2 9 .3 9 -1.7 9 -.8 9 .8 9 2.2 9 2.2 9 -.6M-9 169.9l9 2.4 9 1.9 9 -.4 9 -1.1 9 -1 9 0 9 2 9 1.7 9 -.4 9 -1.4 9 -2.3 9 -1.4 9 .9 9 1.4 9 .4 9 -.7 9 -2 9 -1.4 9 .9 9 1.9 9 1.9 9 .9 9 -1.4 9 -1.3 9 .3 9 1.2 9 1.9 9 1 9 -1.6 9 -2.1 9 -1.4 9 -.2 9 1.5 9 1.1 9 -.9 9 -1.6 9 -1.7 9 -.4 9 2.1 9 2.1M-9 183.3l9 .5 9 -.9 9 -2.2 9 -.9 9 .8 9 1.6 9 2.1 9 1.1 9 -1.1 9 -1.3 9 -.3 9 .6 9 1.8 9 1.7 9 -.5 9 -1.9 9 -1.7 9 -1.3 9 .4 9 1.7 9 .5 9 -.8 9 -1.5 9 -1.8 9 -.2 9 1.8 9 2 9 1.1 9 0 9 -1.4 9 -1.1 9 .8 9 1.6 9 1.6M297 186.1l9 .8 9 -1.3 9 -2.4 9 -1.2 9 0 9 .9M-9 191.8l9 .6 9 1.9 9 .6 9 -.7 9 -1.3 9 -1.3 9 .3 9 2.4 9 1.9 9 .8 9 -.4 9 -1.8 9 -.8 9 1.1 9 1.4 9 1 9 -.2 9 -2.3 9 -2.2 9 -.5 9 .6 9 1.4 9 1 9 -1.2 9 -1.8 9 -.7 9 .3 9 2 9 2.4 9 .5 9 -.9 9 -1.1 9 -.8 9 .9 9 2.1 9 .8 9 -.7 9 -1.7 9 -2.4 9 -.6M-9 206.4l9 -.1 9 -2 9 -1.7 9 0 9 1.2 9 2.1 9 1.7 9 -.4 9 -1.4 9 -.6 9 .2 9 1.5 9 2.1 9 .3 9 -1.4 9 -1.8 9 -1.6 9 -.2 9 1.6 9 .9 9 -.5 9 -1.3 9 -2 9 -.9 9 1.4 9 1.9 9 1.4 9 .4 9 -1.2 9 -1.4 9 .5 9 1.5 9 1.8 9 1.2 9 -1 9 -2.2 9 -1.4 9 -.2 9 .8 9 1.5M-9 216.7l9 -.5 9 .2 9 1 9 1.2 9 .1 9 -1.1 9 -1.6 9 -1.4 9 -1 9 -.1 9 1.3 9 1.8 9 .9 9 0 9 -.5 9 -1 9 -1 9 .1 9 1.5 9 1.8 9 1.2 9 .6 9 -.2 9 -1.3 9 -1.7 9 -.8 9 .5 9 .8 9 .8 9 .7 9 -.3 9 -1.7 9 -2 9 -1.1 9 -.1 9 .5 9 1.3 9 1.5 9 .6 9 -.8M-9 228.0l9 1.9 9 -1.5 9 -2.5 9 -1.2 9 .8 9 1.8 9 -1 9 -2 9 -1.8 9 1.1 9 2.7 9 1 9 -.6 9 -1.8 9 .7 9 2.5 9 1.4 9 -.6 9 -2.9 9 -1 9 .9 9 1.4 9 -.3 9 -2.9 9 -1.3 9 .5 9 2.6 9 1.4 9 -1.3 9 -1.1 9 .2 9 2.8 9 1.7 9 -.8 9 -2.2 9 -1.6 9 1.4 9 1.1 9 -.4 9 -2.4M-9 235.4l9 -1.4 9 1.3 9 2.4 9 .5 9 -1.6 9 -2.9 9 -.3 9 1.3 9 1 9 -.9 9 -2.8 9 -.4 9 1.5 9 2.6 9 .8 9 -1.7 9 -.7 9 .8 9 2.7 9 .8 9 -1.8 9 -2.2 9 -1 9 1.7 9 .9 9 -1.1 9 -2.4 9 -1.4 9 2 9 2.1 9 1 9 -1.5 9 -1.2 9 1.4 9 2.2 9 1.5 9 -1.7 9 -2.4 9 -.5 9 1M-9 247.0l9 -1 9 -.2 9 .4 9 1.1 9 1.4 9 .4 9 -1.2 9 -1.9 9 -1.5 9 -1 9 -.1 9 1.3 9 1.4 9 .3 9 -.7 9 -1 9 -1.2 9 -.7 9 .8 9 2 9 1.7 9 .9 9 .1 9 -.8 9 -1.4 9 -.8 9 .8M243 247.4l9 1 9 .7 9 -.3 9 -1.8 9 -2.1 9 -1 9 0 9 .6 9 1.1 9 1 9 -.3 9 -1.6M-9 253.9l9 2.6 9 .5 9 -1.6 9 -.8 9 2.5 9 2.1 9 -.1 9 -3 9 -.9 9 1.1 9 1.4M90 257.7l9 -1.8 9 -2.7 9 -.5 9 2.3 9 2 9 -1.1 9 -1.3 9 .5 9 3.3 9 1 9 -1.4 9 -2.6 9 .5 9 1.6 9 0 9 -2.7 9 -2.2 9 1.2 9 2.1 9 .8 9 -2.1 9 -.3 9 1.9 9 3 9 -.4 9 -2.2 9 -1.1 9 1.4 9 1.4M-9 264.1l9 2 9 1.7 9 1.1 9 -.7 9 -2 9 -1.2 9 .2 9 .8 9 1.3 9 .3 9 -1.7 9 -2.2 9 -1.2M108 262.5l9 -.2 9 1.3 9 2 9 .4 9 -1 9 -1.1 9 -.7 9 .6 9 2.3 9 2 9 .4 9 -.7 9 -1.5 9 -1.4 9 .4 9 1.5 9 .8M261 267.6l9 0 9 -1.4 9 -2.5 9 -1.4 9 .5 9 1.2 9 1.4 9 .6 9 -1.2 9 -1.6M-9 273.8l9 .4 9 1.9 9 2.3 9 .8 9 -.8 9 -1.2 9 -1.3 9 -.4 9 1.2 9 1.6 9 .2 9 -.9 9 -1.7 9 -2.2 9 -.9 9 1 9 1.4 9 .9 9 .2 9 -1.1 9 -1.7 9 -.2 9 1.3 9 1.7 9 1.9 9 .9 9 -1 9 -1.6 9 -.7 9 .2 9 1.1 9 1.6 9 .3 9 -1.6 9 -1.9 9 -1.6 9 -.7 9 .9 9 1.7 9 .6M-9 287.3l9 .7 9 -.3 9 -.9 9 -1.4 9 -1.7 9 -.6 9 1 9 1.7 9 1.2 9 .8 9 0 9 -1.1 9 -1.2 9 0 9 1.1 9 1.4 9 1.5 9 1 9 -.4 9 -1.8 9 -1.6 9 -.6 9 0 9 .6 9 1.3 9 .6 9 -1 9 -1.7 9 -1.5 9 -.9 9 -.1 9 1.3 9 1.9 9 1 9 -.2 9 -.6 9 -.9 9 -.8 9 .3 9 1.8M-9 298.1l9 -1.9 9 -1.1 9 .5 9 1 9 1.4 9 .3 9 -1.8 9 -2.3 9 -1.2 9 -.1 9 1.2 9 1.7 9 -.1 9 -1.3 9 -1.2 9 -.6 9 1 9 2.5 9 1.7 9 .1 9 -.8 9 -1.5M198 294.9l9 1.3 9 1.6 9 .5 9 -.4 9 -2.1 9 -2.3 9 -.5 9 .9 9 1.1 9 1 9 -.6 9 -2 9 -1 9 .5 9 1.5 9 2.3 9 1.3M-9 302.6l9 1.5 9 2.1 9 1.3 9 .3 9 -.4 9 -.9 9 -1.2 9 -.5 9 .8 9 1.5 9 1 9 .3 9 -.3 9 -1.3 9 -2.1 9 -1.4 9 -.1 9 .7 9 .8 9 .9 9 .4 9 -.7 9 -1.7 9 -1.2 9 -.1 9 .7 9 1.2 9 1.8 9 1.5 9 .2 9 -1 9 -1 9 -.5 9 -.2 9 .7 9 1.6 9 1.4 9 .1 9 -1 9 -1.4M-9 312.9l9 -1.1 9 .2 9 2.6 9 2.1 9 -.2 9 -1.5 9 -2.1 9 .4 9 1.7 9 .5 9 -1 9 -2.8 9 -1.6M108 310.1l9 1.1 9 1.7 9 1.3 9 -1 9 -1.8 9 .3 9 1.7 9 2.6 9 .8 9 -1.7 9 -1.5 9 -.5 9 1.5 9 1.5 9 -1.1 9 -2.2 9 -2.2 9 0 9 2.2 9 1 9 -.4 9 -1.7 9 -.9 9 2 9 2.3 9 1.4 9 -.7M-9 323.3l9 -.4 9 -1.2 9 -1.1 9 .5 9 1.5 9 1.6 9 1.3 9 .7 9 -.7 9 -1.8 9 -1.4 9 -.2 9 .5 9 .8 9 1.1 9 .3 9 -1.4 9 -1.9 9 -1.4 9 -.6 9 .1 9 1.4 9 1.7 9 .6 9 -.6 9 -.9 9 -.8 9 -.5 9 .7 9 1.9 9 1.9 9 .8 9 -.2 9 -.9 9 -1.4 9 -1.3M324 322.3l9 1.2 9 1 9 .3M-9 331.7l9 2.1 9 -.2 9 -2.1 9 -1.7 9 .9 9 3.1 9 1 9 -.9 9 -1.7 9 1.3M90 335.8l9 .9 9 -2 9 -2.8 9 .2 9 1.3 9 .9 9 -2.3 9 -2.1 9 .4 9 2.5 9 2 9 -1.2 9 -1.2 9 .2 9 2.9 9 1.3 9 -1.4 9 -2.6 9 -.9 9 1.8 9 .6 9 -1.3 9 -2.9 9 -.2 9 2.2 9 2 9 -.1 9 -2.1 9 .5M-9 342.4l9 1.9 9 1.3 9 -.4 9 -1.2 9 -.8 9 -.1 9 .7 9 1.8 9 1.7 9 .1 9 -1.3 9 -1.5 9 -1.5 9 -.9 9 .7 9 1.4 9 .6 9 -.5 9 -1.1 9 -1.7 9 -1.4 9 .3 9 1.6 9 1.6 9 1.1 9 .4 9 -.9 9 -1.4 9 -.3 9 1 9 1.4 9 1.5 9 1.1 9 -.6 9 -2 9 -1.5 9 -.6 9 .1 9 .9 9 1.3M-9 351.5l9 1.5 9 -.1 9 -2.4 9 -.7 9 1.4 9 2.8 9 1.4 9 -1.6 9 -1.2 9 .1 9 2.3 9 1.1 9 -1.7 9 -2.5 9 -1.6 9 1.6 9 1.3 9 -.5 9 -2 9 -1.4 9 1.9 9 2.4 9 1.4 9 -1.3 9 -1.5 9 .8 9 1.8 9 1.6 9 -1.8 9 -2.6 9 -1.1 9 .9 9 1.8M297 352.6l9 -2 9 -1.3 9 1.4 9 2.9 9 .8 9 -.8M-9 361.7l9 -.3 9 .7 9 1.9 9 1.5 9 -.3 9 -1.2 9 -1.6 9 -1.8 9 -.5 9 1.1 9 1.2 9 .3 9 -.5 9 -1.3 9 -1.9 9 -.7 9 1.1 9 1.7 9 1.5 9 1.1 9 -.3 9 -1.5 9 -.9 9 .5 9 1.1 9 1.6 9 1.4 9 -.2 9 -1.8 9 -1.7 9 -1 9 -.2 9 .8 9 1.4 9 .3 9 -1.3 9 -1.6 9 -1.3 9 -.6 9 1M-9 370.0l9 .5 9 1.8 9 1.5 9 .6 9 -.3 9 -1.4 9 -2.1 9 -1.1 9 .4 9 .9 9 .8 9 .5 9 -.8 9 -1.9 9 -1.6 9 -.2 9 .7 9 1.5 9 1.8 9 1 9 -.7 9 -1.2 9 -.6 9 0 9 .9 9 2 9 1.5 9 0 9 -1.2 9 -1.4 9 -1.6 9 -.7 9 .9 9 1.3 9 .5 9 -.5 9 -1.2 9 -1.8 9 -1.4 9 .2M-9 378.8l9 -1.4 9 -1.4 9 .9 9 2.8 9 1.5 9 .2 9 -1.6 9 -1.3 9 1.1 9 1.6 9 1 9 -.8 9 -2.9 9 -1.5 9 .2 9 1.4 9 1.2 9 -1.2 9 -2 9 -.6 9 1 9 2.7 9 1.7 9 -.8 9 -1.2 9 -.9 9 1.2 9 2.2 9 .4 9 -1.3 9 -2.4 9 -1.7 9 1 9 1.3 9 .4 9 -1.1 9 -2.4 9 -.3 9 1.7 9 2.1" stroke="#ad9b84" stroke-width="3" stroke-linejoin="round" fill="none" opacity="0.3" vector-effect="non-scaling-stroke"/><path d="M-9 0.8l9 -2.3 9 0 9 2.3 9 1.1 9 -.4 9 -1.7 9 -.5 9 2.3 9 2.2M72 3.8l9 1.1 9 -1.7 9 -2 9 .4 9 1.3 9 1.2 9 -1.5 9 -2.8 9 -1.2 9 .6 9 2.3 9 .4 9 -1.5 9 -1.2 9 .3 9 2.9 9 1.9 9 -.2 9 -1.6 9 -1.5 9 1.3 9 1.6 9 .1 9 -1.9 9 -2.9 9 -.3 9 1.4 9 1.5 9 -.2 9 -2.2 9 -.5M-9 12.2l9 1.4 9 .5 9 -1 9 -1.4 9 -.3 9 .8 9 1.2 9 1.6 9 .8 9 -1 9 -1.9 9 -1.5 9 -.8 9 0 9 1.3 9 1.2 9 -.3 9 -1.3 9 -1.4 9 -1.2 9 -.3 9 1.4 9 2.2 9 1.1 9 .2 9 -.6 9 -1.1 9 -.9 9 .8 9 1.8 9 1.4 9 .7 9 -.4 9 -1.7 9 -2 9 -.7 9 .5 9 .8 9 .9 9 .3M-9 23.5l9 -1 9 -1.4 9 -1.2 9 -.7 9 .4 9 1.7 9 2 9 .8 9 0 9 -.5 9 -1.1 9 -.8 9 .4 9 1.6 9 1.5 9 .7 9 .1 9 -1 9 -1.9 9 -1.7 9 -.2 9 .6 9 .8 9 .8 9 .3 9 -1.1 9 -1.9 9 -1.2 9 -.2 9 .6 9 1.4 9 1.8 9 1.1 9 -.4 9 -1 9 -.8 9 -.3 9 .4 9 1.5 9 1.9M-9 31.2l9 -1.4 9 -1 9 1.1 9 2.4 9 1.6 9 .6M54 33.8l9 -1.8 9 -.6 9 1.1 9 1.4 9 .9 9 -.2 9 -2.3 9 -2.2 9 -.5 9 .4 9 1.4 9 1.1 9 -.8 9 -1.7 9 -1 9 .1 9 1.5 9 2.6 9 1.1 9 -.6 9 -1.1 9 -1.1 9 .1 9 1.9 9 1.4 9 0 9 -1.2 9 -2.2 9 -1.8 9 .3 9 1.3 9 .8 9 .2M-9 39.7l9 -.4 9 1.5 9 1.8 9 1.6 9 0 9 -1.7 9 -.7 9 .7 9 1.6 9 2 9 .3 9 -1.9 9 -1.8 9 -1.1 9 .2 9 1.7 9 .6 9 -1.3 9 -1.7 9 -1.7 9 0 9 2.1 9 1.8 9 .6 9 -.5 9 -1.6 9 -.4 9 1.7 9 1.9 9 1.2 9 -.1 9 -2.2 9 -1.8 9 -.1 9 .8 9 1.3 9 .2 9 -2 9 -2.1 9 -.7M-9 51.9l9 -2.4 9 -1 9 1.3 9 1.1 9 .2 9 -1.3 9 -2.3 9 -.5 9 1.5 9 2 9 1.7 9 -.4 9 -1.7 9 -.4 9 .9 9 2 9 1.6 9 -.9 9 -2.2 9 -1.6 9 -.5 9 1.4 9 1.3 9 -.9 9 -1.7 9 -1.8 9 -.4 9 2.2 9 1.9 9 .7 9 -.6 9 -1.6 9 -.1 9 1.9 9 1.8 9 1 9 -1M324 53.1l9 -2.6 9 -1.1 9 .4M-9 62.0l9 -.2 9 -2.1 9 -.7 9 1.4 9 1.8 9 -1.6 9 -2.6 9 -1.7 9 1.7 9 1.5 9 -.5 9 -2.1 9 -.4 9 2.8 9 2.2 9 .2 9 -2.3 9 -.3 9 1.6 9 1.6 9 -1.2 9 -3.2 9 -1 9 1 9 2 9 -1.3 9 -1.8 9 -.5 9 2.7 9 2.5 9 -.4 9 -1.6 9 -.7 9 2.4 9 1.2 9 -1 9 -3.2 9 -1.1 9 1.4 9 1.2M-9 66.9l9 -2.4 9 -1.1 9 2.9 9 1.7 9 -.6 9 -1.8 9 1.2 9 2.8 9 .9 9 -2.3 9 -2.2 9 .9 9 1.5 9 -.7 9 -3.2 9 -.8 9 1.8 9 2.5 9 -1 9 -1.3 9 .3 9 3.4 9 1M207 68.7l9 -2.4 9 .7 9 1.7 9 -.6 9 -3 9 -1.6 9 1.9 9 2 9 -.2 9 -2.1 9 .8 9 2.6 9 2.1 9 -1.9 9 -1.9 9 .1M-9 76.6l9 0 9 -1.9 9 -2.4 9 1.3 9 2.4 9 1.5 9 -1.6 9 -1 9 1.3 9 2.6 9 .7 9 -2.6 9 -1.8 9 0 9 2.1 9 -.6 9 -2.3 9 -1.9 9 1.2 9 2.8 9 .5 9 -1.3 9 -1.2 9 2.2 9 2.3 9 .5 9 -2.6 9 -1.8 9 .9 9 1.4 9 -.4 9 -3.1 9 -1.2 9 1.1 9 2.8 9 0 9 -1.6 9 -.5 9 2.1 9 2.8M-9 86.5l9 1.1 9 1.4 9 .3 9 -.7 9 -1.3M36 87.3l9 -1.6 9 -1.6 9 -.5 9 1 9 1.5 9 .9 9 .4 9 -.3 9 -1.1 9 -1.3 9 -.1 9 1.2 9 1.6 9 1.5 9 1.1 9 .2 9 -1.2 9 -1.6 9 -.7 9 .2 9 .6 9 1.1 9 1 9 -.1 9 -1.6 9 -1.8 9 -1.3 9 -.7 9 .2 9 1.2 9 1.6 9 .4 9 -.7 9 -.9 9 -.9M-9 98.0l9 1.7 9 .2 9 -.7 9 -1.8 9 -2 9 -.3 9 1 9 1 9 .4 9 -.5 9 -2 9 -1.8 9 0 9 1.1 9 1.6 9 1.7 9 .4 9 -1.3 9 -1 9 -.1 9 .8 9 1.8 9 1.9M207 100.1l9 -1.5 9 -1.6 9 -1.3 9 -.3 9 1.2 9 1.3 9 -.2 9 -1.2 9 -1.7 9 -1.7 9 -.1 9 1.8 9 1.6 9 1 9 .1 9 -1.2M-9 105.1l9 -2 9 -.7 9 .6 9 1 9 1.2 9 1 9 -.2 9 -1.4 9 -1.2 9 0 9 .7 9 1.5 9 2 9 1.3 9 -.3 9 -1.3 9 -1.1 9 -.7 9 -.2 9 1.1 9 1.5 9 .5 9 -.9 9 -1.4 9 -1.7 9 -1.5 9 -.4 9 1.2 9 1.4 9 .7 9 0 9 -.6 9 -1.4 9 -1.1 9 .6 9 1.6 9 1.7 9 1.3 9 .7 9 -.6M-9 115.8l9 -1.1 9 -1.4 9 .2 9 1.5 9 1.7 9 1.5 9 .3 9 -1.6 9 -1.9 9 -.7 9 .3 9 .9 9 1.3M117 116.6l9 -1.9 9 -1.9 9 -1.1 9 0 9 1.5 9 2 9 .4 9 -.7 9 -.9 9 -1 9 .3 9 2.1 9 2 9 .8 9 -.3 9 -1.4 9 -1.8 9 -.5 9 1.2 9 1 9 .5 9 -.4 9 -2.1 9 -2.2 9 -.5 9 .7M-9 126.7l9 -1 9 -1.2 9 .2 9 1.8 9 1.5 9 .5 9 -.6 9 -2.1 9 -2.1 9 -.2M81 123.5l9 .8 9 1 9 .7 9 -.7 9 -2.1 9 -1.3 9 .1 9 1.2 9 2 9 1.7 9 -.3 9 -1.3 9 -.7 9 -.1 9 1.2 9 2.1 9 1 9 -.8 9 -1.5 9 -1.8 9 -1.2 9 .8 9 1.4 9 .4 9 -.6 9 -1.4 9 -2 9 -.6 9 1.4 9 1.8M-9 137.2l9 1.7 9 .1 9 -1.6 9 -1.8 9 -1.5 9 -.6 9 1 9 1.5 9 .3 9 -1 9 -1.3 9 -1.5 9 -.3 9 1.6 9 2.1 9 1.2 9 .4 9 -.7 9 -1.5 9 -.5 9 1.2 9 1.5 9 1.2 9 .5 9 -1.4 9 -2.3 9 -1.3 9 0 9 .6 9 1.2 9 .7 9 -1.2 9 -1.9 9 -1.1 9 -.2 9 1.1 9 2.2 9 1.6 9 -.2 9 -.8M-9 141.6l9 -1.3 9 0 9 1.4 9 1.5 9 1.3 9 .9 9 0 9 -1.2 9 -1.2 9 -.1 9 .8 9 1.2 9 1.3 9 1.2 9 -.1 9 -1.5 9 -1.7 9 -1.1 9 -.5 9 .2 9 1 9 1.2 9 .1 9 -1.2 9 -1.4 9 -1.2 9 -.9 9 .1 9 1.5 9 1.9 9 1 9 .1 9 -.4 9 -.9M297 143.6l9 -1 9 0 9 1.3 9 1.7 9 1.2 9 .5M-9 153.6l9 1.6 9 -.1 9 -1.3 9 -2.1 9 -1.6 9 .9 9 2 9 1.3 9 .4 9 -1.2 9 -1.5 9 .7 9 1.9 9 1.8 9 1.1 9 -1.2 9 -2.2 9 -.9 9 .3 9 1.3 9 1.1 9 -1.2 9 -2.3 9 -1.5 9 -.4 9 1.4M225 151.9l9 2.2 9 .3 9 -.9 9 -1.1 9 -.6 9 1.6 9 2.5 9 1.1 9 -.2 9 -1.6 9 -1.9 9 .2 9 1.3 9 .9M-9 161.4l9 -.5 9 1.8 9 1.9 9 1.1 9 -1.3 9 -2.6 9 -.8 9 .5 9 1.5 9 .4 9 -2.2 9 -2 9 -.6 9 1.3 9 2.6 9 .6 9 -1 9 -1.1 9 -.2 9 2.3 9 2.1 9 .1 9 -1.3 9 -2.4 9 -.5 9 1.5 9 .8 9 -.2 9 -2.3 9 -2.2 9 .3 9 1.6 9 2 9 .3 9 -1.7 9 -.8 9 .8 9 2.2 9 2.2 9 -.6M-9 169.9l9 2.4 9 1.9 9 -.4 9 -1.1 9 -1 9 0 9 2 9 1.7 9 -.4 9 -1.4 9 -2.3 9 -1.4 9 .9 9 1.4 9 .4 9 -.7 9 -2 9 -1.4 9 .9 9 1.9 9 1.9 9 .9 9 -1.4 9 -1.3 9 .3 9 1.2 9 1.9 9 1 9 -1.6 9 -2.1 9 -1.4 9 -.2 9 1.5 9 1.1 9 -.9 9 -1.6 9 -1.7 9 -.4 9 2.1 9 2.1M-9 183.3l9 .5 9 -.9 9 -2.2 9 -.9 9 .8 9 1.6 9 2.1 9 1.1 9 -1.1 9 -1.3 9 -.3 9 .6 9 1.8 9 1.7 9 -.5 9 -1.9 9 -1.7 9 -1.3 9 .4 9 1.7 9 .5 9 -.8 9 -1.5 9 -1.8 9 -.2 9 1.8 9 2 9 1.1 9 0 9 -1.4 9 -1.1 9 .8 9 1.6 9 1.6M297 186.1l9 .8 9 -1.3 9 -2.4 9 -1.2 9 0 9 .9M-9 191.8l9 .6 9 1.9 9 .6 9 -.7 9 -1.3 9 -1.3 9 .3 9 2.4 9 1.9 9 .8 9 -.4 9 -1.8 9 -.8 9 1.1 9 1.4 9 1 9 -.2 9 -2.3 9 -2.2 9 -.5 9 .6 9 1.4 9 1 9 -1.2 9 -1.8 9 -.7 9 .3 9 2 9 2.4 9 .5 9 -.9 9 -1.1 9 -.8 9 .9 9 2.1 9 .8 9 -.7 9 -1.7 9 -2.4 9 -.6M-9 206.4l9 -.1 9 -2 9 -1.7 9 0 9 1.2 9 2.1 9 1.7 9 -.4 9 -1.4 9 -.6 9 .2 9 1.5 9 2.1 9 .3 9 -1.4 9 -1.8 9 -1.6 9 -.2 9 1.6 9 .9 9 -.5 9 -1.3 9 -2 9 -.9 9 1.4 9 1.9 9 1.4 9 .4 9 -1.2 9 -1.4 9 .5 9 1.5 9 1.8 9 1.2 9 -1 9 -2.2 9 -1.4 9 -.2 9 .8 9 1.5M-9 216.7l9 -.5 9 .2 9 1 9 1.2 9 .1 9 -1.1 9 -1.6 9 -1.4 9 -1 9 -.1 9 1.3 9 1.8 9 .9 9 0 9 -.5 9 -1 9 -1 9 .1 9 1.5 9 1.8 9 1.2 9 .6 9 -.2 9 -1.3 9 -1.7 9 -.8 9 .5 9 .8 9 .8 9 .7 9 -.3 9 -1.7 9 -2 9 -1.1 9 -.1 9 .5 9 1.3 9 1.5 9 .6 9 -.8M-9 228.0l9 1.9 9 -1.5 9 -2.5 9 -1.2 9 .8 9 1.8 9 -1 9 -2 9 -1.8 9 1.1 9 2.7 9 1 9 -.6 9 -1.8 9 .7 9 2.5 9 1.4 9 -.6 9 -2.9 9 -1 9 .9 9 1.4 9 -.3 9 -2.9 9 -1.3 9 .5 9 2.6 9 1.4 9 -1.3 9 -1.1 9 .2 9 2.8 9 1.7 9 -.8 9 -2.2 9 -1.6 9 1.4 9 1.1 9 -.4 9 -2.4M-9 235.4l9 -1.4 9 1.3 9 2.4 9 .5 9 -1.6 9 -2.9 9 -.3 9 1.3 9 1 9 -.9 9 -2.8 9 -.4 9 1.5 9 2.6 9 .8 9 -1.7 9 -.7 9 .8 9 2.7 9 .8 9 -1.8 9 -2.2 9 -1 9 1.7 9 .9 9 -1.1 9 -2.4 9 -1.4 9 2 9 2.1 9 1 9 -1.5 9 -1.2 9 1.4 9 2.2 9 1.5 9 -1.7 9 -2.4 9 -.5 9 1M-9 247.0l9 -1 9 -.2 9 .4 9 1.1 9 1.4 9 .4 9 -1.2 9 -1.9 9 -1.5 9 -1 9 -.1 9 1.3 9 1.4 9 .3 9 -.7 9 -1 9 -1.2 9 -.7 9 .8 9 2 9 1.7 9 .9 9 .1 9 -.8 9 -1.4 9 -.8 9 .8M243 247.4l9 1 9 .7 9 -.3 9 -1.8 9 -2.1 9 -1 9 0 9 .6 9 1.1 9 1 9 -.3 9 -1.6M-9 253.9l9 2.6 9 .5 9 -1.6 9 -.8 9 2.5 9 2.1 9 -.1 9 -3 9 -.9 9 1.1 9 1.4M90 257.7l9 -1.8 9 -2.7 9 -.5 9 2.3 9 2 9 -1.1 9 -1.3 9 .5 9 3.3 9 1 9 -1.4 9 -2.6 9 .5 9 1.6 9 0 9 -2.7 9 -2.2 9 1.2 9 2.1 9 .8 9 -2.1 9 -.3 9 1.9 9 3 9 -.4 9 -2.2 9 -1.1 9 1.4 9 1.4M-9 264.1l9 2 9 1.7 9 1.1 9 -.7 9 -2 9 -1.2 9 .2 9 .8 9 1.3 9 .3 9 -1.7 9 -2.2 9 -1.2M108 262.5l9 -.2 9 1.3 9 2 9 .4 9 -1 9 -1.1 9 -.7 9 .6 9 2.3 9 2 9 .4 9 -.7 9 -1.5 9 -1.4 9 .4 9 1.5 9 .8M261 267.6l9 0 9 -1.4 9 -2.5 9 -1.4 9 .5 9 1.2 9 1.4 9 .6 9 -1.2 9 -1.6M-9 273.8l9 .4 9 1.9 9 2.3 9 .8 9 -.8 9 -1.2 9 -1.3 9 -.4 9 1.2 9 1.6 9 .2 9 -.9 9 -1.7 9 -2.2 9 -.9 9 1 9 1.4 9 .9 9 .2 9 -1.1 9 -1.7 9 -.2 9 1.3 9 1.7 9 1.9 9 .9 9 -1 9 -1.6 9 -.7 9 .2 9 1.1 9 1.6 9 .3 9 -1.6 9 -1.9 9 -1.6 9 -.7 9 .9 9 1.7 9 .6M-9 287.3l9 .7 9 -.3 9 -.9 9 -1.4 9 -1.7 9 -.6 9 1 9 1.7 9 1.2 9 .8 9 0 9 -1.1 9 -1.2 9 0 9 1.1 9 1.4 9 1.5 9 1 9 -.4 9 -1.8 9 -1.6 9 -.6 9 0 9 .6 9 1.3 9 .6 9 -1 9 -1.7 9 -1.5 9 -.9 9 -.1 9 1.3 9 1.9 9 1 9 -.2 9 -.6 9 -.9 9 -.8 9 .3 9 1.8M-9 298.1l9 -1.9 9 -1.1 9 .5 9 1 9 1.4 9 .3 9 -1.8 9 -2.3 9 -1.2 9 -.1 9 1.2 9 1.7 9 -.1 9 -1.3 9 -1.2 9 -.6 9 1 9 2.5 9 1.7 9 .1 9 -.8 9 -1.5M198 294.9l9 1.3 9 1.6 9 .5 9 -.4 9 -2.1 9 -2.3 9 -.5 9 .9 9 1.1 9 1 9 -.6 9 -2 9 -1 9 .5 9 1.5 9 2.3 9 1.3M-9 302.6l9 1.5 9 2.1 9 1.3 9 .3 9 -.4 9 -.9 9 -1.2 9 -.5 9 .8 9 1.5 9 1 9 .3 9 -.3 9 -1.3 9 -2.1 9 -1.4 9 -.1 9 .7 9 .8 9 .9 9 .4 9 -.7 9 -1.7 9 -1.2 9 -.1 9 .7 9 1.2 9 1.8 9 1.5 9 .2 9 -1 9 -1 9 -.5 9 -.2 9 .7 9 1.6 9 1.4 9 .1 9 -1 9 -1.4M-9 312.9l9 -1.1 9 .2 9 2.6 9 2.1 9 -.2 9 -1.5 9 -2.1 9 .4 9 1.7 9 .5 9 -1 9 -2.8 9 -1.6M108 310.1l9 1.1 9 1.7 9 1.3 9 -1 9 -1.8 9 .3 9 1.7 9 2.6 9 .8 9 -1.7 9 -1.5 9 -.5 9 1.5 9 1.5 9 -1.1 9 -2.2 9 -2.2 9 0 9 2.2 9 1 9 -.4 9 -1.7 9 -.9 9 2 9 2.3 9 1.4 9 -.7M-9 323.3l9 -.4 9 -1.2 9 -1.1 9 .5 9 1.5 9 1.6 9 1.3 9 .7 9 -.7 9 -1.8 9 -1.4 9 -.2 9 .5 9 .8 9 1.1 9 .3 9 -1.4 9 -1.9 9 -1.4 9 -.6 9 .1 9 1.4 9 1.7 9 .6 9 -.6 9 -.9 9 -.8 9 -.5 9 .7 9 1.9 9 1.9 9 .8 9 -.2 9 -.9 9 -1.4 9 -1.3M324 322.3l9 1.2 9 1 9 .3M-9 331.7l9 2.1 9 -.2 9 -2.1 9 -1.7 9 .9 9 3.1 9 1 9 -.9 9 -1.7 9 1.3M90 335.8l9 .9 9 -2 9 -2.8 9 .2 9 1.3 9 .9 9 -2.3 9 -2.1 9 .4 9 2.5 9 2 9 -1.2 9 -1.2 9 .2 9 2.9 9 1.3 9 -1.4 9 -2.6 9 -.9 9 1.8 9 .6 9 -1.3 9 -2.9 9 -.2 9 2.2 9 2 9 -.1 9 -2.1 9 .5M-9 342.4l9 1.9 9 1.3 9 -.4 9 -1.2 9 -.8 9 -.1 9 .7 9 1.8 9 1.7 9 .1 9 -1.3 9 -1.5 9 -1.5 9 -.9 9 .7 9 1.4 9 .6 9 -.5 9 -1.1 9 -1.7 9 -1.4 9 .3 9 1.6 9 1.6 9 1.1 9 .4 9 -.9 9 -1.4 9 -.3 9 1 9 1.4 9 1.5 9 1.1 9 -.6 9 -2 9 -1.5 9 -.6 9 .1 9 .9 9 1.3M-9 351.5l9 1.5 9 -.1 9 -2.4 9 -.7 9 1.4 9 2.8 9 1.4 9 -1.6 9 -1.2 9 .1 9 2.3 9 1.1 9 -1.7 9 -2.5 9 -1.6 9 1.6 9 1.3 9 -.5 9 -2 9 -1.4 9 1.9 9 2.4 9 1.4 9 -1.3 9 -1.5 9 .8 9 1.8 9 1.6 9 -1.8 9 -2.6 9 -1.1 9 .9 9 1.8M297 352.6l9 -2 9 -1.3 9 1.4 9 2.9 9 .8 9 -.8M-9 361.7l9 -.3 9 .7 9 1.9 9 1.5 9 -.3 9 -1.2 9 -1.6 9 -1.8 9 -.5 9 1.1 9 1.2 9 .3 9 -.5 9 -1.3 9 -1.9 9 -.7 9 1.1 9 1.7 9 1.5 9 1.1 9 -.3 9 -1.5 9 -.9 9 .5 9 1.1 9 1.6 9 1.4 9 -.2 9 -1.8 9 -1.7 9 -1 9 -.2 9 .8 9 1.4 9 .3 9 -1.3 9 -1.6 9 -1.3 9 -.6 9 1M-9 370.0l9 .5 9 1.8 9 1.5 9 .6 9 -.3 9 -1.4 9 -2.1 9 -1.1 9 .4 9 .9 9 .8 9 .5 9 -.8 9 -1.9 9 -1.6 9 -.2 9 .7 9 1.5 9 1.8 9 1 9 -.7 9 -1.2 9 -.6 9 0 9 .9 9 2 9 1.5 9 0 9 -1.2 9 -1.4 9 -1.6 9 -.7 9 .9 9 1.3 9 .5 9 -.5 9 -1.2 9 -1.8 9 -1.4 9 .2M-9 378.8l9 -1.4 9 -1.4 9 .9 9 2.8 9 1.5 9 .2 9 -1.6 9 -1.3 9 1.1 9 1.6 9 1 9 -.8 9 -2.9 9 -1.5 9 .2 9 1.4 9 1.2 9 -1.2 9 -2 9 -.6 9 1 9 2.7 9 1.7 9 -.8 9 -1.2 9 -.9 9 1.2 9 2.2 9 .4 9 -1.3 9 -2.4 9 -1.7 9 1 9 1.3 9 .4 9 -1.1 9 -2.4 9 -.3 9 1.7 9 2.1" transform="translate(0 3.2)" stroke="#eee4d6" stroke-width="2.2" stroke-linejoin="round" fill="none" opacity="0.3" vector-effect="non-scaling-stroke"/></g></g></g></g><g clip-path="url(#cl)"><g transform="matrix(0.1757 1.0000 0.5862 0.8388 628.40 227.20)"><path d="M-16 0.4l16 .3 16 .1 16 -.1 16 -.3 16 -.4 16 -.4 16 -.3 16 0 16 .3 16 .3 16 .3 16 .2 16 -.1 16 -.3 16 -.3 16 -.3M256 -0.7l16 .2 16 .4 16 .4 16 .4 16 .1M-16 7.1l16 -.1 16 -.3 16 -.3 16 -.2 16 0 16 .1 16 .3 16 .4 16 .3 16 .2 16 -.1 16 -.2M192 6.8l16 -.4 16 -.2 16 0 16 .2 16 .3 16 .2 16 .2 16 0 16 -.3M-16 14.5l16 .2 16 0 16 -.2 16 -.2 16 -.3 16 -.2 16 -.1 16 .1 16 .2 16 .4 16 .2 16 .2 16 0 16 -.2 16 -.3 16 -.4 16 -.4 16 -.1 16 0 16 .1 16 .3 16 .3M-16 21.8l16 -.1 16 -.1 16 .1 16 .2 16 .3 16 .4 16 .3 16 .1 16 0 16 -.2 16 -.2 16 -.3 16 -.3 16 -.2 16 0 16 .1 16 .3 16 .2 16 .2 16 .1 16 0 16 -.2M-16 28.2l16 .3 16 .2 16 0 16 0 16 -.2 16 -.2 16 -.3 16 -.2 16 -.2 16 -.1M144 27.5l16 .1 16 .1 16 .2 16 .2 16 .2 16 .1M240 28.4l16 0 16 -.1 16 -.2 16 -.3 16 -.3M-16 34.1l16 .2 16 .1 16 -.2 16 -.3 16 -.3 16 -.2 16 .1 16 .2 16 .4 16 .4 16 .3 16 .1 16 -.2 16 -.3 16 -.3 16 -.3 16 -.1 16 .1 16 .3 16 .3 16 .2 16 .1M-16 40.7l16 -.2 16 -.3 16 -.3 16 -.2 16 0 16 .1 16 .3 16 .3 16 .3 16 0 16 -.1M176 40.3l16 -.3 16 -.4 16 -.3 16 -.1 16 .2 16 .2 16 .3 16 .3 16 .1 16 -.1M-16 47.4l16 .1 16 0 16 0 16 -.2 16 -.3 16 -.3 16 -.2 16 -.2 16 -.1 16 .1 16 .1 16 .2 16 .3 16 .2M208 47.1l16 0 16 0 16 -.1 16 -.2 16 -.3 16 -.3M304 46.2l16 -.3 16 -.1M-16 53.1l16 -.1 16 .1 16 .1 16 .3 16 .2 16 .2 16 .1 16 -.1 16 -.1 16 -.3 16 -.4 16 -.3 16 -.2 16 -.1 16 0 16 .2 16 .2 16 .3 16 .3 16 .1 16 0 16 -.1M-16 61.1l16 .1 16 -.1 16 -.3 16 -.4 16 -.4M80 59.8l16 -.1 16 .2 16 .2 16 .4 16 .2 16 .1 16 -.2 16 -.2 16 -.4 16 -.2 16 -.1 16 .1 16 .3M288 60.1l16 .4 16 .4 16 .2M-16 66.7l16 -.3 16 -.4 16 -.4 16 -.2M64 65.4l16 .2 16 .4 16 .3 16 .2 16 0 16 -.3 16 -.3 16 -.3 16 -.1 16 .2 16 .3 16 .4 16 .4 16 .2 16 -.1 16 -.2 16 -.4M-16 73.4l16 -.2 16 -.3 16 -.3 16 -.3 16 -.2M80 72.0l16 0 16 .2 16 .2 16 .2 16 .2 16 .2 16 0 16 -.1 16 -.1 16 -.3 16 -.3 16 -.2 16 -.1 16 0 16 .1 16 .2M-16 80.3l16 .2 16 .3 16 .4 16 .3 16 .1 16 -.1 16 -.3 16 -.4 16 -.3 16 -.2 16 0 16 .2 16 .3 16 .3 16 .1 16 -.1 16 -.2 16 -.4 16 -.4 16 -.2 16 -.1 16 .2M-16 86.3l16 .3 16 .2 16 .1 16 0 16 -.2 16 -.3 16 -.2 16 -.2 16 0 16 .1 16 .2 16 .3 16 .4 16 .2 16 .2 16 0 16 -.2 16 -.2 16 -.3 16 -.3 16 -.2 16 0M-16 94.2l16 -.3 16 -.2 16 -.1 16 0 16 0 16 .2 16 .2 16 .2 16 .2 16 .1 16 .1 16 0 16 0 16 -.2 16 -.2 16 -.2 16 -.2 16 -.1 16 -.1 16 0 16 .1 16 .2" stroke="#9c8b78" stroke-width="0.8" fill="none" opacity="0.35" vector-effect="non-scaling-stroke"/></g></g><path d="M862.8 430.6L989.3 554.7" stroke="rgb(192, 90, 40)" stroke-opacity="0.95"/><path d="M989.3 554.7L1315.4 874.0" stroke="rgb(192, 90, 40)" stroke-opacity="0.95"/><path d="M608.1 404.5L667.6 391.9" stroke="rgb(95, 154, 90)" stroke-opacity="0.25"/><path d="M628.4 227.2 L846.8 209.6" stroke="#d9782a" stroke-width="1" stroke-opacity="0.8"/><path d="M846.8 209.6 L1018.2 248" stroke="#d9782a" stroke-width="1" stroke-opacity="0.8"/><path d="M1018.2 248 L675.3 294.3" stroke="#d9782a" stroke-width="1" stroke-opacity="0.8"/><path d="M675.3 294.3 L628.4 227.2" stroke="#d9782a" stroke-width="1" stroke-opacity="0.8"/><path d="M675.3 294.3 L717.2 601.7" stroke="#d9782a" stroke-width="1" stroke-opacity="0.8"/><path d="M717.2 601.7 L964.2 504.2" stroke="#d9782a" stroke-width="1" stroke-opacity="0.8"/><path d="M964.2 504.2 L1018.2 248" stroke="#d9782a" stroke-width="1" stroke-opacity="0.8"/><path d="M628.4 227.2 L664.6 433.2" stroke="#d9782a" stroke-width="1" stroke-opacity="0.8"/><path d="M664.6 433.2 L717.2 601.7" stroke="#d9782a" stroke-width="1" stroke-opacity="0.8"/><circle cx="628.4" cy="227.2" r="1.5" fill="#f08a30"/><circle cx="846.8" cy="209.6" r="1.5" fill="#f08a30"/><circle cx="1018.2" cy="248" r="1.5" fill="#f08a30"/><circle cx="675.3" cy="294.3" r="1.5" fill="#f08a30"/><circle cx="717.2" cy="601.7" r="1.5" fill="#f08a30"/><circle cx="964.2" cy="504.2" r="1.5" fill="#f08a30"/><circle cx="664.6" cy="433.2" r="1.5" fill="#f08a30"/><circle cx="795.5" cy="364.7" r="5" fill="none" stroke="#ddd" stroke-width="1" stroke-dasharray="2 1.5"/><circle cx="795.5" cy="364.7" r="5" fill="none" stroke="#b04a20" stroke-width="1" stroke-dasharray="1.5 2" stroke-dashoffset="-2"/><path d="M785.5 364.7 H791.5 M799.5 364.7 H805.5 M795.5 354.7 V360.7 M795.5 368.7 V374.7" stroke="#555" stroke-width="0.8"/><path d="M1023.3 100.3 L1022.9 80.8" stroke="#5a8ad8" stroke-width="1.3"/><path d="M1023.3 100.3 L1042.8 96" stroke="#4f9a5c" stroke-width="1.1"/><path d="M1023.3 100.3 L1032.2 109" stroke="#ff3352" stroke-width="1.3"/><circle cx="1014.5" cy="91.6" r="3.9" fill="#804028"/><circle cx="1013.5" cy="90.5" r="0.6" fill="#f04050"/><circle cx="1015.5" cy="92.5" r="0.6" fill="#f04050"/><circle cx="1023.5" cy="119.5" r="3.9" fill="#3d62a0"/><circle cx="1003.6" cy="104.6" r="4.2" fill="#8cc21e"/><circle cx="1022.9" cy="80.8" r="5" fill="#5a8ad8"/><circle cx="1042.8" cy="96" r="5" fill="#4f9a5c"/><circle cx="1032.2" cy="109" r="5" fill="#ff3352"/><text x="1020.8" y="83.3" font-size="6.5" fill="#223" font-family="Liberation Sans">Z</text><text x="1040.7" y="98.5" font-size="6.5" fill="#132" font-family="Liberation Sans">Y</text><text x="1030.1" y="111.5" font-size="6.5" fill="#311" font-family="Liberation Sans">X</text></g></svg>
<div class="t" style="left:580px;top:71.9px;height:12px;line-height:12px;color:#e8e8e8;font-size:8.5px;transform:scaleX(0.86);transform-origin:0 0;">User Perspective</div>
<div class="t" style="left:580px;top:83.9px;height:12px;line-height:12px;color:#e8e8e8;font-size:8.5px;transform:scaleX(0.86);transform-origin:0 0;">(1) Cube</div>
<svg style="position:absolute;left:1051.5px;top:76px;" width="6" height="10" viewBox="0 0 6 10"><path d="M4.5 2 L1.5 5 L4.5 8" fill="none" stroke="#999" stroke-width="0.9"/></svg>
<div style="left:541px;top:36px;width:19px;height:12px;background:#2b2b2b;border-radius:3px;"></div>
<svg style="position:absolute;left:541px;top:36px;" width="19" height="12" viewBox="0 0 19 12"><path d="M1.5 5 H10 M1.5 9 H10 M3 4 V10.5 M8.5 4 V10.5" stroke="#ccc" stroke-width="0.8"/><circle cx="7.5" cy="3.5" r="2.5" fill="#9cc"/><path d="M12.5 5 L15.0 7.5 L17.5 5" fill="none" stroke="#c8c8c8" stroke-width="1.1"/></svg>
<svg style="position:absolute;left:569px;top:34px;" width="16" height="16" viewBox="0 0 16 16"><rect x="1.5" y="1.5" width="13.5" height="13.5" rx="1.5" fill="none" stroke="#e8a050" stroke-width="1.15" stroke-dasharray="2.6 1.5"/><path d="M6.8 4.8 V11.8 L8.5 10.2 L9.7 12.5 L10.8 12 L9.7 9.7 L12 9.6 Z" fill="#f2f2f2"/></svg>
<div style="left:594px;top:36px;width:12px;height:12px;background:#4772b3;border-radius:2px;"></div>
<div style="left:607px;top:36px;width:12px;height:12px;background:#545454;border-radius:0px;"></div>
<div style="left:619.5px;top:36px;width:12px;height:12px;background:#545454;border-radius:0px;"></div>
<div style="left:632px;top:36px;width:12px;height:12px;background:#545454;border-radius:0px;"></div>
<div style="left:645px;top:36px;width:12px;height:12px;background:#545454;border-radius:2px;"></div>
<svg style="position:absolute;left:594px;top:36px;" width="12" height="12" viewBox="0 0 12 12"><rect x="2" y="2" width="8" height="8" fill="none" stroke="#eee" stroke-width="0.9" stroke-dasharray="1.2 1.2"/></svg>
<svg style="position:absolute;left:607px;top:36px;" width="12" height="12" viewBox="0 0 12 12"><path d="M2 10 V6 H5 V3 H10 V10 Z" fill="#e3cfb5"/></svg>
<svg style="position:absolute;left:619.5px;top:36px;" width="12" height="12" viewBox="0 0 12 12"><path d="M4 5 H8 V10 H4 Z" fill="none" stroke="#aaa" stroke-width="0.6" stroke-dasharray="1 1"/><path d="M6 2 H10 V7 H6 Z" fill="#e3cfb5"/></svg>
<svg style="position:absolute;left:632px;top:36px;" width="12" height="12" viewBox="0 0 12 12"><path d="M2 2 H10 V10 H2 Z" fill="#e3cfb5"/><rect x="4.5" y="4.5" width="3.5" height="3.5" fill="#333"/></svg>
<svg style="position:absolute;left:645px;top:36px;" width="12" height="12" viewBox="0 0 12 12"><rect x="2" y="2" width="8" height="8" fill="none" stroke="#aaa" stroke-width="0.6" stroke-dasharray="1 1"/><rect x="4" y="4" width="4" height="4" fill="#e3cfb5"/></svg>
<div style="left:713px;top:36px;width:51px;height:12px;background:#2b2b2b;border-radius:3px;"></div>
<svg style="position:absolute;left:713px;top:36px;" width="51" height="12" viewBox="0 0 51 12"><path d="M4 1.5 V10 H12 M4 10 L10 4" fill="none" stroke="#cfcfcf" stroke-width="0.9"/><path d="M10 4 H7.8 M10 4 V6.2" fill="none" stroke="#cfcfcf" stroke-width="0.9"/><circle cx="4" cy="2" r="1.2" fill="#e3cfb5"/><circle cx="12" cy="10" r="1.2" fill="#e3cfb5"/><circle cx="4" cy="10" r="1" fill="#b9e3d0"/><path d="M45 4.8 L47.5 7.3 L50 4.8" fill="none" stroke="#c8c8c8" stroke-width="1.1"/></svg>
<div class="t" style="left:729.5px;top:35.9px;height:12px;line-height:12px;color:#d8d8d8;font-size:8.5px;transform:scaleX(0.86);transform-origin:0 0;">Global</div>
<div style="left:770px;top:36px;width:19px;height:12px;background:#2b2b2b;border-radius:3px;"></div>
<svg style="position:absolute;left:770px;top:36px;" width="19" height="12" viewBox="0 0 19 12"><circle cx="4.5" cy="7.5" r="2.5" fill="none" stroke="#ddd" stroke-width="0.9"/><circle cx="7.5" cy="4.5" r="2.5" fill="none" stroke="#ddd" stroke-width="0.9"/><path d="M12 5 L14.5 7.5 L17 5" fill="none" stroke="#c8c8c8" stroke-width="1.1"/></svg>
<div style="left:794px;top:36px;width:33px;height:12px;background:#2b2b2b;border-radius:3px;"></div>
<div style="left:794px;top:36px;width:12px;height:12px;background:#555;border-radius:2px;"></div>
<svg style="position:absolute;left:794px;top:36px;" width="33" height="12" viewBox="0 0 33 12"><path d="M2.8 6.5 L5.5 3.8 A2.6 2.6 0 0 1 9.2 7.5 L6.5 10.2" fill="none" stroke="#a8a8a8" stroke-width="1.6"/><path d="M2.8 6.5 L4.2 7.9 M6.5 10.2 L5.1 8.8" stroke="#777" stroke-width="1.6"/><path d="M13 7.5 H20 M13 6 V9 M15.5 6 V9 M18 6 V9 M20 6 V9" stroke="#ddd" stroke-width="0.7"/><rect x="18.5" y="2.5" width="2" height="2" fill="#b9e3d0"/><path d="M24.5 5 L27.0 7.5 L29.5 5" fill="none" stroke="#c8c8c8" stroke-width="1.1"/></svg>
<div style="left:832px;top:36px;width:33px;height:12px;background:#2b2b2b;border-radius:3px;"></div>
<div style="left:832px;top:36px;width:12px;height:12px;background:#555;border-radius:2px;"></div>
<svg style="position:absolute;left:832px;top:36px;" width="33" height="12" viewBox="0 0 33 12"><circle cx="6" cy="6" r="3.6" fill="none" stroke="#888" stroke-width="0.8"/><circle cx="6" cy="6" r="1" fill="#e3cfb5"/><path d="M14 10 C16 10 16 2 18 2 C20 2 20 10 22 10" fill="none" stroke="#888" stroke-width="0.9"/><path d="M25 5 L27.5 7.5 L30 5" fill="none" stroke="#555" stroke-width="1.1"/></svg>
<svg style="position:absolute;left:944px;top:36px;" width="12" height="12" viewBox="0 0 12 12"><path d="M6 1 V11" stroke="#bbb" stroke-width="0.8"/><path d="M4 2 C1 3 4 5 2 6 C4 7 1 9 4 10 M8 2 C11 3 8 5 10 6 C8 7 11 9 8 10" fill="none" stroke="#bbb" stroke-width="0.8"/></svg>
<div style="left:957px;top:36px;width:32px;height:12px;background:#505050;border-radius:2px;"></div>
<div style="left:967.5px;top:36px;width:0.7px;height:12px;background:#444;"></div>
<div style="left:978.5px;top:36px;width:0.7px;height:12px;background:#444;"></div>
<div class="t" style="left:957px;top:35.9px;width:11px;text-align:center;height:12px;line-height:12px;color:#bbb;font-size:8.5px;transform:scaleX(0.86);transform-origin:50% 0;">X</div>
<div class="t" style="left:968px;top:35.9px;width:11px;text-align:center;height:12px;line-height:12px;color:#bbb;font-size:8.5px;transform:scaleX(0.86);transform-origin:50% 0;">Y</div>
<div class="t" style="left:979px;top:35.9px;width:11px;text-align:center;height:12px;line-height:12px;color:#bbb;font-size:8.5px;transform:scaleX(0.86);transform-origin:50% 0;">Z</div>
<div style="left:994px;top:36px;width:12px;height:12px;background:#505050;border-radius:2px;"></div>
<svg style="position:absolute;left:994px;top:36px;" width="12" height="12" viewBox="0 0 12 12"><rect x="1.5" y="8" width="2" height="2" fill="none" stroke="#888" stroke-width="0.7"/><rect x="8" y="1.5" width="2" height="2" fill="none" stroke="#888" stroke-width="0.7"/><path d="M3 8 L8 3" stroke="#888" stroke-width="0.7" stroke-dasharray="1 1"/></svg>
<div style="left:1011px;top:36px;width:40px;height:12px;background:#2b2b2b;border-radius:3px;"></div>
<div class="t" style="left:1015px;top:35.9px;height:12px;line-height:12px;color:#d0d0d0;font-size:8.5px;transform:scaleX(0.86);transform-origin:0 0;">Options</div>
<svg style="position:absolute;left:1043px;top:36px;" width="8" height="12" viewBox="0 0 8 12"><path d="M1 5 L3.5 7.5 L6 5" fill="none" stroke="#c8c8c8" stroke-width="1.1"/></svg>
<div style="left:541px;top:53px;width:72px;height:12px;background:#2b2b2b;border-radius:3px;"></div>
<svg style="position:absolute;left:541px;top:53px;" width="14" height="12" viewBox="0 0 14 12"><rect x="3" y="3" width="7" height="7" fill="none" stroke="#aaa" stroke-width="0.7"/><rect x="8.5" y="1.5" width="3" height="3" fill="#b9e3d0"/><circle cx="3" cy="3" r="1" fill="#ccc"/><circle cx="3" cy="10" r="1" fill="#ccc"/><circle cx="10" cy="10" r="1" fill="#ccc"/></svg>
<div class="t" style="left:558px;top:52.9px;height:12px;line-height:12px;color:#d8d8d8;font-size:8.5px;transform:scaleX(0.86);transform-origin:0 0;">Edit Mode</div>
<svg style="position:absolute;left:603px;top:53px;" width="8" height="12" viewBox="0 0 8 12"><path d="M1 5 L3.5 7.5 L6 5" fill="none" stroke="#c8c8c8" stroke-width="1.1"/></svg>
<div style="left:618px;top:53px;width:12px;height:12px;background:#4772b3;border-radius:2px;"></div>
<div style="left:631px;top:53px;width:12px;height:12px;background:#545454;border-radius:0px;"></div>
<div style="left:643px;top:53px;width:12px;height:12px;background:#545454;border-radius:2px;"></div>
<svg style="position:absolute;left:618px;top:53px;" width="12" height="12" viewBox="0 0 12 12"><path d="M2 2.5 H10 V10 H2 Z" fill="none" stroke="#eee" stroke-width="0.8"/><rect x="1.5" y="2" width="3" height="3" fill="#fff"/></svg>
<svg style="position:absolute;left:631px;top:53px;" width="12" height="12" viewBox="0 0 12 12"><path d="M3 3 H9 V10 H3 Z" fill="none" stroke="#aaa" stroke-width="0.8"/><path d="M6 3 V10" stroke="#e3cfb5" stroke-width="1.3"/></svg>
<svg style="position:absolute;left:643px;top:53px;" width="12" height="12" viewBox="0 0 12 12"><path d="M3 3 H9 V10 H3 Z" fill="#e3cfb5" stroke="#aaa" stroke-width="0.6"/></svg>
<div style="left:660px;top:53px;width:24px;height:12px;background:#2e2e2e;border-radius:3px;"></div>
<div class="t" style="left:660px;top:52.9px;width:24px;text-align:center;height:12px;line-height:12px;color:#d0d0d0;font-size:8.5px;transform:scaleX(0.86);transform-origin:50% 0;">View</div>
<div style="left:687px;top:53px;width:28px;height:12px;background:#2e2e2e;border-radius:3px;"></div>
<div class="t" style="left:687px;top:52.9px;width:28px;text-align:center;height:12px;line-height:12px;color:#d0d0d0;font-size:8.5px;transform:scaleX(0.86);transform-origin:50% 0;">Select</div>
<div style="left:718px;top:53px;width:20px;height:12px;background:#2e2e2e;border-radius:3px;"></div>
<div class="t" style="left:718px;top:52.9px;width:20px;text-align:center;height:12px;line-height:12px;color:#d0d0d0;font-size:8.5px;transform:scaleX(0.86);transform-origin:50% 0;">Add</div>
<div style="left:740px;top:53px;width:27px;height:12px;background:#2e2e2e;border-radius:3px;"></div>
<div class="t" style="left:740px;top:52.9px;width:27px;text-align:center;height:12px;line-height:12px;color:#d0d0d0;font-size:8.5px;transform:scaleX(0.86);transform-origin:50% 0;">Mesh</div>
<div style="left:768.5px;top:53px;width:28.5px;height:12px;background:#2e2e2e;border-radius:3px;"></div>
<div class="t" style="left:768.5px;top:52.9px;width:28.5px;text-align:center;height:12px;line-height:12px;color:#d0d0d0;font-size:8.5px;transform:scaleX(0.86);transform-origin:50% 0;">Vertex</div>
<div style="left:800px;top:53px;width:23px;height:12px;background:#2e2e2e;border-radius:3px;"></div>
<div class="t" style="left:800px;top:52.9px;width:23px;text-align:center;height:12px;line-height:12px;color:#d0d0d0;font-size:8.5px;transform:scaleX(0.86);transform-origin:50% 0;">Edge</div>
<div style="left:826px;top:53px;width:23px;height:12px;background:#2e2e2e;border-radius:3px;"></div>
<div class="t" style="left:826px;top:52.9px;width:23px;text-align:center;height:12px;line-height:12px;color:#d0d0d0;font-size:8.5px;transform:scaleX(0.86);transform-origin:50% 0;">Face</div>
<div style="left:851px;top:53px;width:18px;height:12px;background:#2e2e2e;border-radius:3px;"></div>
<div class="t" style="left:851px;top:52.9px;width:18px;text-align:center;height:12px;line-height:12px;color:#d0d0d0;font-size:8.5px;transform:scaleX(0.86);transform-origin:50% 0;">UV</div>
<div style="left:888px;top:53px;width:18px;height:12px;background:#2b2b2b;border-radius:3px;"></div>
<svg style="position:absolute;left:888px;top:53px;" width="18" height="12" viewBox="0 0 18 12"><path d="M1 6 C3 3 7 3 9 6 C7 9 3 9 1 6 Z" fill="none" stroke="#ddd" stroke-width="0.8"/><circle cx="5" cy="6" r="1.3" fill="#ddd"/><path d="M1 11 L3 7 L5 11 Z" fill="#b9e3d0"/><path d="M11 5 L13.5 7.5 L16 5" fill="none" stroke="#c8c8c8" stroke-width="1.1"/></svg>
<div style="left:911px;top:53px;width:25px;height:12px;background:#2b2b2b;border-radius:3px;"></div>
<div style="left:911px;top:53px;width:12px;height:12px;background:#4772b3;border-radius:2px;"></div>
<svg style="position:absolute;left:911px;top:53px;" width="25" height="12" viewBox="0 0 25 12"><path d="M2 10 C4 6 6 4 10 2" fill="none" stroke="#e3cfb5" stroke-width="0.9"/><path d="M7.5 2 H10 V4.5" fill="none" stroke="#eee" stroke-width="0.8"/><circle cx="3" cy="9" r="1" fill="#b9e3d0"/><path d="M16.5 5 L19.0 7.5 L21.5 5" fill="none" stroke="#c8c8c8" stroke-width="1.1"/></svg>
<div style="left:941px;top:53px;width:25px;height:12px;background:#2b2b2b;border-radius:3px;"></div>
<div style="left:941px;top:53px;width:12px;height:12px;background:#4772b3;border-radius:2px;"></div>
<svg style="position:absolute;left:941px;top:53px;" width="25" height="12" viewBox="0 0 25 12"><circle cx="6" cy="7" r="3.5" fill="none" stroke="#e3cfb5" stroke-width="0.8"/><circle cx="7" cy="5" r="3" fill="#fff"/><path d="M16.5 5 L19.0 7.5 L21.5 5" fill="none" stroke="#c8c8c8" stroke-width="1.1"/></svg>
<div style="left:971px;top:53px;width:12px;height:12px;background:#3a3a3a;border-radius:2px;"></div>
<svg style="position:absolute;left:971px;top:53px;" width="12" height="12" viewBox="0 0 12 12"><rect x="2" y="4" width="6" height="6" fill="none" stroke="#ccc" stroke-width="0.8"/><rect x="4" y="2" width="6" height="6" fill="none" stroke="#ccc" stroke-width="0.8"/></svg>
<div style="left:988px;top:53px;width:49px;height:12px;background:#545454;border-radius:2px;"></div>
<div style="left:1013px;top:53px;width:12px;height:12px;background:#4772b3;border-radius:0px;"></div>
<svg style="position:absolute;left:988px;top:53px;" width="12" height="12" viewBox="0 0 12 12"><circle cx="6" cy="6" r="4" fill="none" stroke="#ccc" stroke-width="0.8"/><path d="M2 6 H10 M6 2 V10" stroke="#ccc" stroke-width="0.6"/></svg>
<svg style="position:absolute;left:1000.5px;top:53px;" width="12" height="12" viewBox="0 0 12 12"><circle cx="6" cy="6" r="4.3" fill="#e3cfb5"/></svg>
<svg style="position:absolute;left:1013px;top:53px;" width="12" height="12" viewBox="0 0 12 12"><circle cx="6" cy="6" r="4.3" fill="#fff"/><path d="M6 6 V10.3 A4.3 4.3 0 0 1 1.7 6 Z" fill="#4772b3"/><path d="M6 6 H10.3 A4.3 4.3 0 0 1 6 10.3 Z" fill="#222"/></svg>
<svg style="position:absolute;left:1025.5px;top:53px;" width="12" height="12" viewBox="0 0 12 12"><circle cx="6" cy="6" r="4" fill="none" stroke="#ccc" stroke-width="0.8"/><path d="M3.5 8.5 L8.5 3.5" stroke="#ccc" stroke-width="0.8"/></svg>
<div style="left:1039px;top:53px;width:12px;height:12px;background:#2b2b2b;border-radius:3px;"></div>
<svg style="position:absolute;left:1039px;top:53px;" width="12" height="12" viewBox="0 0 12 12"><path d="M3.5 5 L6.0 7.5 L8.5 5" fill="none" stroke="#c8c8c8" stroke-width="1.1"/></svg>
<div style="left:541px;top:73px;width:27px;height:46px;background:#2c2c2c;border-radius:3.5px"></div>
<div style="left:541px;top:73px;width:27px;height:23.0px;background:#4772b3;border-radius:3px 3px 0 0"></div>
<svg style="position:absolute;left:545.5px;top:76.5px;" width="16" height="16" viewBox="0 0 16 16"><rect x="1.5" y="1.5" width="13.5" height="13.5" rx="1.5" fill="none" stroke="#e8a050" stroke-width="1.15" stroke-dasharray="2.6 1.5"/><path d="M6.8 4.8 V11.8 L8.5 10.2 L9.7 12.5 L10.8 12 L9.7 9.7 L12 9.6 Z" fill="#f2f2f2"/></svg>
<svg style="position:absolute;left:563px;top:91.0px;" width="4" height="4" viewBox="0 0 4 4"><path d="M3.5 0.5 V3.5 H0.5 Z" fill="#8a8a8a"/></svg>
<div style="left:542px;top:96.0px;width:25px;height:0.6px;background:#262626;"></div>
<svg style="position:absolute;left:545.5px;top:99.5px;" width="16" height="16" viewBox="0 0 16 16"><circle cx="8" cy="8.2" r="6.6" fill="none" stroke="#ececec" stroke-width="1.3"/><circle cx="8" cy="8.2" r="6.6" fill="none" stroke="#a8441c" stroke-width="1.35" stroke-dasharray="2.2 3"/><path d="M8 4 V6.8 M8 9.6 V12.4 M3.8 8.2 H6.6 M9.4 8.2 H12.2" stroke="#8a8a8a" stroke-width="1.1"/></svg>
<div style="left:541px;top:123px;width:27px;height:92px;background:#2c2c2c;border-radius:3.5px"></div>
<svg style="position:absolute;left:545.5px;top:126.5px;" width="16" height="16" viewBox="0 0 16 16"><path d="M8 1.2 L5.6 4.4 H10.4 Z M8 15 L5.6 11.8 H10.4 Z M1.2 8.1 L4.4 5.7 V10.5 Z M14.8 8.1 L11.6 5.7 V10.5 Z" fill="#e8ddd2"/><path d="M8 4.4 V6.6 M8 9.6 V11.8 M4.4 8.1 H6.6 M9.4 8.1 H11.6" stroke="#b9e3d0" stroke-width="1.1"/></svg>
<div style="left:542px;top:146.0px;width:25px;height:0.6px;background:#262626;"></div>
<svg style="position:absolute;left:545.5px;top:149.5px;" width="16" height="16" viewBox="0 0 16 16"><path d="M3.6 6.8 A5.2 5.2 0 0 1 12.3 4.8" fill="none" stroke="#d8d8d8" stroke-width="1"/><path d="M12.4 9.4 A5.2 5.2 0 0 1 3.8 11.4" fill="none" stroke="#d8d8d8" stroke-width="1"/><path d="M1.4 6.8 L5.8 6.8 L3.6 10 Z" fill="#e8e8e8"/><path d="M10.2 9.4 L14.6 9.4 L12.4 6.2 Z" fill="#e8e8e8"/><path d="M8 5.9 L10.2 8.1 L8 10.3 L5.8 8.1 Z" fill="#e0c8b0"/></svg>
<div style="left:542px;top:169.0px;width:25px;height:0.6px;background:#262626;"></div>
<svg style="position:absolute;left:545.5px;top:172.5px;" width="16" height="16" viewBox="0 0 16 16"><rect x="3" y="2.5" width="10.5" height="10.5" fill="none" stroke="#c8c8c8" stroke-width="1"/><rect x="2.5" y="7.5" width="6" height="6" fill="#f0f0f0"/><path d="M8.8 7.2 L12 4" stroke="#ddd" stroke-width="1"/><circle cx="12" cy="4" r="1.1" fill="#b9e3d0"/></svg>
<svg style="position:absolute;left:563px;top:187.0px;" width="4" height="4" viewBox="0 0 4 4"><path d="M3.5 0.5 V3.5 H0.5 Z" fill="#8a8a8a"/></svg>
<div style="left:542px;top:192.0px;width:25px;height:0.6px;background:#262626;"></div>
<svg style="position:absolute;left:545.5px;top:195.5px;" width="16" height="16" viewBox="0 0 16 16"><circle cx="8" cy="8" r="6" fill="none" stroke="#c8c8c8" stroke-width="0.9" stroke-dasharray="1.6 0.9"/><rect x="5.4" y="5.4" width="5.2" height="5.2" fill="#f0f0f0"/><path d="M8 1 L6.7 2.9 H9.3 Z M8 15 L6.7 13.1 H9.3 Z M1 8 L2.9 6.7 V9.3 Z M15 8 L13.1 6.7 V9.3 Z" fill="#e8d8c8"/></svg>
<div style="left:541px;top:219.5px;width:27px;height:45.5px;background:#2c2c2c;border-radius:3.5px"></div>
<svg style="position:absolute;left:545.5px;top:222.875px;" width="16" height="16" viewBox="0 0 16 16"><path d="M3 11 L11.3 2.7 L13.3 4.7 L5 13 L2.6 13.4 Z" fill="#f0f0f0" stroke="#aaa" stroke-width="0.5"/><path d="M3.5 13.2 C6 15.2 8 11.2 10 10.7 C12 10.2 13 12 13.6 13" fill="none" stroke="#c8c8c8" stroke-width="0.9"/><circle cx="6.2" cy="13.6" r="0.7" fill="#5cb85c"/><circle cx="9.8" cy="10.8" r="0.7" fill="#5cb85c"/></svg>
<svg style="position:absolute;left:563px;top:237.25px;" width="4" height="4" viewBox="0 0 4 4"><path d="M3.5 0.5 V3.5 H0.5 Z" fill="#8a8a8a"/></svg>
<div style="left:542px;top:242.25px;width:25px;height:0.6px;background:#262626;"></div>
<svg style="position:absolute;left:545.5px;top:245.625px;" width="16" height="16" viewBox="0 0 16 16"><path d="M2.8 1.5 H4.8 V12 H14.5 V14 H2.8 Z" fill="#e3c8ac"/><path d="M5.3 5.8 A6.2 6.2 0 0 1 11.5 12 H5.3 Z" fill="#c0dfd0"/><path d="M5.3 5.8 A6.2 6.2 0 0 1 11.5 12" fill="none" stroke="#5cb85c" stroke-width="0.8" stroke-dasharray="1 1"/></svg>
<div style="left:541px;top:268.5px;width:27px;height:279.5px;background:#2c2c2c;border-radius:3.5px"></div>
<svg style="position:absolute;left:545.5px;top:272.1458333333333px;" width="16" height="16" viewBox="0 0 16 16"><path d="M3 5 L5.5 2.5 H13.5 V10.5 L11 13 H3 Z" fill="#262626" stroke="#d8d8d8" stroke-width="1"/><path d="M3.5 5 L5.8 3 H13 L11 5 Z M3.5 5.5 H10.5 V8 H3.5 Z" fill="#b9dfcc"/><path d="M3 5 H11 V13 M11 5 L13.5 2.5" fill="none" stroke="#d8d8d8" stroke-width="1"/><circle cx="6" cy="6.6" r="0.7" fill="#5cb85c"/><circle cx="9" cy="6.6" r="0.7" fill="#5cb85c"/></svg>
<svg style="position:absolute;left:563px;top:286.7916666666667px;" width="4" height="4" viewBox="0 0 4 4"><path d="M3.5 0.5 V3.5 H0.5 Z" fill="#8a8a8a"/></svg>
<div style="left:542px;top:291.7916666666667px;width:25px;height:0.6px;background:#262626;"></div>
<svg style="position:absolute;left:545.5px;top:295.4375px;" width="16" height="16" viewBox="0 0 16 16"><path d="M3 5 L5.5 2.5 H13.5 V10.5 L11 13 H3 Z" fill="#262626" stroke="#d8d8d8" stroke-width="1"/><rect x="3.5" y="5.5" width="7" height="7" fill="#b9dfcc"/><rect x="5.3" y="7.3" width="3.4" height="3.4" fill="#1e1e1e"/><path d="M3 5 H11 V13 M11 5 L13.5 2.5" fill="none" stroke="#d8d8d8" stroke-width="1"/></svg>
<div style="left:542px;top:315.0833333333333px;width:25px;height:0.6px;background:#262626;"></div>
<svg style="position:absolute;left:545.5px;top:318.72916666666663px;" width="16" height="16" viewBox="0 0 16 16"><path d="M3 13 V6.5 Q3.5 2.5 7 2.5 H10.5 Q13.5 2.5 13.5 6 V10.5 L11 13 Z" fill="#262626" stroke="#d8d8d8" stroke-width="1"/><path d="M3.5 6.5 Q4 3.5 7 3.5 H10.5 V7 H3.5 Z M11 4 Q13 4.3 13 6.5 L11 8.5 Z" fill="#b9dfcc"/><path d="M3 7.2 H11 V13" fill="none" stroke="#d8d8d8" stroke-width="1"/></svg>
<div style="left:542px;top:338.375px;width:25px;height:0.6px;background:#262626;"></div>
<svg style="position:absolute;left:545.5px;top:342.0208333333333px;" width="16" height="16" viewBox="0 0 16 16"><path d="M3 5 L5.5 2.5 H13.5 V10.5 L11 13 H3 Z M3 5 H11 V13 M11 5 L13.5 2.5 M7 5 V13 M7 5 L9.5 2.5" fill="none" stroke="#d8d8d8" stroke-width="1"/><circle cx="7" cy="5" r="0.8" fill="#e3c8ac"/><circle cx="11" cy="5" r="0.8" fill="#e3c8ac"/><circle cx="7" cy="13" r="0.8" fill="#e3c8ac"/><circle cx="11" cy="13" r="0.8" fill="#e3c8ac"/><circle cx="13.5" cy="2.5" r="0.8" fill="#e3c8ac"/></svg>
<svg style="position:absolute;left:563px;top:356.6666666666667px;" width="4" height="4" viewBox="0 0 4 4"><path d="M3.5 0.5 V3.5 H0.5 Z" fill="#8a8a8a"/></svg>
<div style="left:542px;top:361.6666666666667px;width:25px;height:0.6px;background:#262626;"></div>
<svg style="position:absolute;left:545.5px;top:365.3125px;" width="16" height="16" viewBox="0 0 16 16"><path d="M3 5 L5.5 2.5 H13.5 V10.5 L11 13 H3 Z M3 5 H11 V13 M11 5 L13.5 2.5" fill="none" stroke="#d8d8d8" stroke-width="1"/><path d="M9 1.8 L6 4.5 L8.5 13" stroke="#5cb85c" stroke-width="1.1" fill="none" stroke-dasharray="1.6 0.8"/><circle cx="6" cy="4.5" r="0.9" fill="#c0dfd0"/><circle cx="8.5" cy="13" r="0.9" fill="#c0dfd0"/></svg>
<svg style="position:absolute;left:563px;top:379.95833333333337px;" width="4" height="4" viewBox="0 0 4 4"><path d="M3.5 0.5 V3.5 H0.5 Z" fill="#8a8a8a"/></svg>
<div style="left:542px;top:384.95833333333337px;width:25px;height:0.6px;background:#262626;"></div>
<svg style="position:absolute;left:545.5px;top:388.6041666666667px;" width="16" height="16" viewBox="0 0 16 16"><path d="M6 2.8 L12.3 4.8 L12.8 12 L4.2 12.6 L2.6 8.2 Z" fill="#c0dfd0"/><circle cx="6" cy="2.8" r="1.1" fill="#e3c8ac"/><circle cx="12.3" cy="4.8" r="1.1" fill="#e3c8ac"/><circle cx="12.8" cy="12" r="1.1" fill="#e3c8ac"/><circle cx="4.2" cy="12.6" r="1.1" fill="#e3c8ac"/><circle cx="2.6" cy="8.2" r="1.1" fill="#f4f4f4"/></svg>
<div style="left:542px;top:408.25px;width:25px;height:0.6px;background:#262626;"></div>
<svg style="position:absolute;left:545.5px;top:411.8958333333333px;" width="16" height="16" viewBox="0 0 16 16"><path d="M8 8.5 L8 2.3 A6.2 6.2 0 1 0 13.2 5.2 Z" fill="#c0dfd0" stroke="#c8c8c8" stroke-width="0.6"/><path d="M8 2.3 V14.7 M1.8 8.5 H14.2 M3.6 4.1 L12.4 12.9 M3.6 12.9 L8 8.5" stroke="#5cb85c" stroke-width="0.7"/><path d="M8.6 2.3 Q13 2.5 13.6 5.5 L12 7.5" fill="none" stroke="#c8c8c8" stroke-width="1"/></svg>
<svg style="position:absolute;left:563px;top:426.5416666666667px;" width="4" height="4" viewBox="0 0 4 4"><path d="M3.5 0.5 V3.5 H0.5 Z" fill="#8a8a8a"/></svg>
<div style="left:542px;top:431.5416666666667px;width:25px;height:0.6px;background:#262626;"></div>
<svg style="position:absolute;left:545.5px;top:435.1875px;" width="16" height="16" viewBox="0 0 16 16"><circle cx="8" cy="8.6" r="5.6" fill="#e6cfb6"/><path d="M2.5 9.2 H13.5 M7 3 V14.2" stroke="#707070" stroke-width="0.9"/></svg>
<svg style="position:absolute;left:563px;top:449.83333333333337px;" width="4" height="4" viewBox="0 0 4 4"><path d="M3.5 0.5 V3.5 H0.5 Z" fill="#8a8a8a"/></svg>
<div style="left:542px;top:454.83333333333337px;width:25px;height:0.6px;background:#262626;"></div>
<svg style="position:absolute;left:545.5px;top:458.4791666666667px;" width="16" height="16" viewBox="0 0 16 16"><path d="M4.5 5 L7 2.5 H14 V10.5 L11.5 13 H4.5 Z M4.5 5 H11.5 V13 M11.5 5 L14 2.5" fill="none" stroke="#d8d8d8" stroke-width="1"/><path d="M3.2 5.5 V13" stroke="#9a9a9a" stroke-width="1.4"/><circle cx="2.4" cy="1.8" r="1.2" fill="#e3c8ac"/><circle cx="14" cy="2.5" r="0.8" fill="#b9e3d0"/></svg>
<svg style="position:absolute;left:563px;top:473.12500000000006px;" width="4" height="4" viewBox="0 0 4 4"><path d="M3.5 0.5 V3.5 H0.5 Z" fill="#8a8a8a"/></svg>
<div style="left:542px;top:478.125px;width:25px;height:0.6px;background:#262626;"></div>
<svg style="position:absolute;left:545.5px;top:481.7708333333333px;" width="16" height="16" viewBox="0 0 16 16"><path d="M8 1 L6.5 3.6 H9.5 Z M8 15 L6.5 12.4 H9.5 Z M1 8 L3.6 6.5 V9.5 Z M15 8 L12.4 6.5 V9.5 Z" fill="#e8d8c8"/><path d="M5.2 5.2 L10.8 10.8 M10.8 5.2 L5.2 10.8" stroke="#d0d0d0" stroke-width="0.9"/><path d="M8 4.3 L11.7 8 L8 11.7 L4.3 8 Z" fill="none" stroke="#a0a0a0" stroke-width="0.9"/><circle cx="8" cy="6" r="0.8" fill="#e3c8ac"/><circle cx="8" cy="10" r="0.8" fill="#e3c8ac"/></svg>
<svg style="position:absolute;left:563px;top:496.4166666666667px;" width="4" height="4" viewBox="0 0 4 4"><path d="M3.5 0.5 V3.5 H0.5 Z" fill="#8a8a8a"/></svg>
<div style="left:542px;top:501.4166666666667px;width:25px;height:0.6px;background:#262626;"></div>
<svg style="position:absolute;left:545.5px;top:505.0625px;" width="16" height="16" viewBox="0 0 16 16"><path d="M1.5 5 L4.8 2.8 L13.8 8.6 L10.8 11.8 L2.2 7 Z" fill="#e3c8ac" stroke="#9a9a9a" stroke-width="0.5"/><path d="M4.8 2.8 L13.8 8.6" stroke="#8a8a8a" stroke-width="0.6"/><circle cx="7" cy="7.5" r="0.6" fill="#b9e3d0"/><circle cx="9" cy="8.5" r="0.6" fill="#b9e3d0"/><path d="M13 0.6 L13.7 2 L15.1 2.5 L13.7 3 L13 4.4 L12.3 3 L10.9 2.5 L12.3 2 Z" fill="#e8e8e8"/></svg>
<svg style="position:absolute;left:563px;top:519.7083333333334px;" width="4" height="4" viewBox="0 0 4 4"><path d="M3.5 0.5 V3.5 H0.5 Z" fill="#8a8a8a"/></svg>
<div style="left:542px;top:524.7083333333334px;width:25px;height:0.6px;background:#262626;"></div>
<svg style="position:absolute;left:545.5px;top:528.3541666666667px;" width="16" height="16" viewBox="0 0 16 16"><path d="M5.5 5.5 L8 3 H14.5 V11 L12 13.5 H5.5 L2 10.5 Z M5.5 5.5 H12 V13.5 M12 5.5 L14.5 3" fill="none" stroke="#d8d8d8" stroke-width="1"/><path d="M2 10.5 L8 8.5" stroke="#d8d8d8" stroke-width="1"/><circle cx="2" cy="10.5" r="1.1" fill="#e3c8ac"/></svg>
<svg style="position:absolute;left:563px;top:543.0px;" width="4" height="4" viewBox="0 0 4 4"><path d="M3.5 0.5 V3.5 H0.5 Z" fill="#8a8a8a"/></svg>
<div style="left:1059px;top:33px;width:221px;height:114px;background:#282828;border-radius:4px"></div>
<div style="left:1059px;top:33px;width:221px;height:17px;background:#303030;border-radius:4px 4px 0 0"></div>
<div style="left:1065px;top:35px;width:19px;height:12px;background:#2b2b2b;border-radius:3px;"></div>
<svg style="position:absolute;left:1065px;top:35px;" width="19" height="12" viewBox="0 0 19 12"><rect x="2" y="1.5" width="3" height="2" fill="#ccc"/><rect x="4" y="5" width="5" height="2" fill="#b9e3d0"/><rect x="4" y="8.5" width="5" height="2" fill="#b9e3d0"/><path d="M3 3.5 V9.5 H4" fill="none" stroke="#ccc" stroke-width="0.7"/><path d="M12 5 L14.5 7.5 L17 5" fill="none" stroke="#c8c8c8" stroke-width="1.1"/></svg>
<div style="left:1090px;top:35px;width:19px;height:12px;background:#2b2b2b;border-radius:3px;"></div>
<svg style="position:absolute;left:1090px;top:35px;" width="19" height="12" viewBox="0 0 19 12"><rect x="1.5" y="3.5" width="7" height="6" fill="none" stroke="#c9c9c9" stroke-width="0.9"/><rect x="3.5" y="1.5" width="7" height="6" fill="#3a3a3a" stroke="#c9c9c9" stroke-width="0.9"/><path d="M4 7 L6 4.5 L8 7 Z" fill="#c9c9c9"/><path d="M12 5 L14.5 7.5 L17 5" fill="none" stroke="#c8c8c8" stroke-width="1.1"/></svg>
<div style="left:1125px;top:35px;width:73px;height:12px;background:#1d1d1d;border-radius:3px"></div>
<svg style="position:absolute;left:1129px;top:36px;" width="10" height="10" viewBox="0 0 10 10"><circle cx="6" cy="4" r="3" fill="none" stroke="#ccc" stroke-width="0.9"/><path d="M4 6 L1 9" stroke="#ccc" stroke-width="1"/></svg>
<div style="left:1237px;top:35px;width:20px;height:12px;background:#2b2b2b;border-radius:3px;"></div>
<svg style="position:absolute;left:1237px;top:35px;" width="20" height="12" viewBox="0 0 20 12"><path d="M1.5 1.5 H10 L7 5.5 V10 L5 9 V5.5 Z" fill="none" stroke="#ddd" stroke-width="0.8"/><path d="M13 5 L15.5 7.5 L18 5" fill="none" stroke="#c8c8c8" stroke-width="1.1"/></svg>
<div style="left:1262px;top:35px;width:12px;height:12px;background:#555;border-radius:2px;"></div>
<svg style="position:absolute;left:1262px;top:35px;" width="12" height="12" viewBox="0 0 12 12"><rect x="2" y="4" width="7" height="6" fill="none" stroke="#ccc" stroke-width="0.8"/><circle cx="9" cy="3" r="2.2" fill="#ddd"/></svg>
<div style="left:1059px;top:64px;width:221px;height:13px;background:#2b2b2b;"></div>
<div style="left:1059px;top:90.5px;width:221px;height:13.5px;background:#2b2b2b;"></div>
<div style="left:1059px;top:117.5px;width:221px;height:13.5px;background:#2b2b2b;"></div>
<div style="left:1059px;top:77px;width:221px;height:13.5px;background:#334d80;"></div>
<div style="left:1059px;top:90.5px;width:221px;height:13.5px;background:#4b6aa0;"></div>
<div style="left:1059px;top:104px;width:221px;height:13.5px;background:#334d80;"></div>
<svg style="position:absolute;left:1073px;top:52px;" width="12" height="11" viewBox="0 0 12 11"><rect x="1.5" y="1.5" width="9" height="2.5" fill="none" stroke="#ccc" stroke-width="0.8"/><rect x="2.5" y="4" width="7" height="6" fill="none" stroke="#ccc" stroke-width="0.8"/><rect x="5" y="5.5" width="2" height="1.5" fill="#ccc"/></svg>
<div class="t" style="left:1088px;top:52.0px;height:12px;line-height:12px;color:#d8d8d8;font-size:8.5px;transform:scaleX(0.86);transform-origin:0 0;">Scene Collection</div>
<svg style="position:absolute;left:1075px;top:67px;" width="8" height="8" viewBox="0 0 8 8"><path d="M1 2 L7 2 L4 6 Z" fill="#ccc"/></svg>
<div style="left:1088.5px;top:66.5px;width:8px;height:8px;background:#bbb;border-radius:1px"></div>
<svg style="position:absolute;left:1088.5px;top:66.5px;" width="8" height="8" viewBox="0 0 8 8"><path d="M1.8 4 L3.3 5.6 L6.5 2" fill="none" stroke="#222" stroke-width="1.1"/></svg>
<div style="left:1099.5px;top:65px;width:14px;height:12px;background:#3a3a3a;border-radius:3px"></div>
<svg style="position:absolute;left:1100px;top:65px;" width="13" height="12" viewBox="0 0 13 12"><rect x="2.5" y="2.5" width="8" height="2" fill="none" stroke="#ccc" stroke-width="0.8"/><rect x="3" y="4.5" width="7" height="5" fill="none" stroke="#ccc" stroke-width="0.8"/></svg>
<div class="t" style="left:1114.7px;top:65.5px;height:12px;line-height:12px;color:#d8d8d8;font-size:8.5px;transform:scaleX(0.86);transform-origin:0 0;">Collection</div>
<svg style="position:absolute;left:1263px;top:66.5px;" width="10" height="8" viewBox="0 0 10 8"><path d="M1 4 C3 1 7 1 9 4 C7 7 3 7 1 4 Z" fill="none" stroke="#ddd" stroke-width="0.9"/><circle cx="5" cy="4" r="1.4" fill="#ddd"/></svg>
<div style="left:1091px;top:74px;width:0.8px;height:37px;background:#777;"></div>
<div style="left:1091px;top:84px;width:8px;height:0.8px;background:#999;"></div>
<div style="left:1091px;top:97px;width:8px;height:0.8px;background:#999;"></div>
<div style="left:1091px;top:110.5px;width:8px;height:0.8px;background:#999;"></div>
<svg style="position:absolute;left:1100px;top:78px;" width="12" height="11" viewBox="0 0 12 11"><circle cx="4" cy="3.5" r="2.3" fill="#e89850"/><circle cx="8.5" cy="3.5" r="2" fill="#e89850"/><rect x="2.5" y="5.5" width="6.5" height="4.5" fill="#e89850"/><path d="M9 7 L11.5 5.5 V10 L9 8.5 Z" fill="#e89850"/></svg>
<div class="t" style="left:1114.7px;top:78.5px;height:12px;line-height:12px;color:#e8882f;font-size:8.5px;transform:scaleX(0.86);transform-origin:0 0;">Camera</div>
<div style="left:1159px;top:78px;width:12px;height:12px;background:#3a6060;border-radius:2px"></div>
<svg style="position:absolute;left:1159px;top:78px;" width="12" height="12" viewBox="0 0 12 12"><path d="M2.5 3 H9.5 V9 H2.5 Z M2.5 6 H9.5 M6 3 V9" fill="none" stroke="#5cb85c" stroke-width="0.9"/></svg>
<svg style="position:absolute;left:1263px;top:80px;" width="10" height="8" viewBox="0 0 10 8"><path d="M1 4 C3 1 7 1 9 4 C7 7 3 7 1 4 Z" fill="none" stroke="#ddd" stroke-width="0.9"/><circle cx="5" cy="4" r="1.4" fill="#ddd"/></svg>
<div style="left:1099.5px;top:91.5px;width:12.5px;height:12px;background:#5a7ab0;border-radius:2px"></div>
<svg style="position:absolute;left:1100px;top:92px;" width="12" height="11" viewBox="0 0 12 11"><path d="M1.5 1.5 H10.5 L6 10 Z" fill="#e89850"/><path d="M4 3.5 H8 L6 7 Z" fill="#4b6aa0"/></svg>
<div class="t" style="left:1114.7px;top:91.5px;height:12px;line-height:12px;color:#e8a85f;font-size:8.5px;transform:scaleX(0.86);transform-origin:0 0;">Cube</div>
<svg style="position:absolute;left:1146px;top:91px;" width="12" height="13" viewBox="0 0 12 13"><path d="M1.5 2 H10.5 L6 11 Z M1.5 2 L6 6 L10.5 2 M6 6 V11" fill="none" stroke="#5cb85c" stroke-width="0.8"/></svg>
<svg style="position:absolute;left:1263px;top:93px;" width="10" height="8" viewBox="0 0 10 8"><path d="M1 4 C3 1 7 1 9 4 C7 7 3 7 1 4 Z" fill="none" stroke="#ddd" stroke-width="0.9"/><circle cx="5" cy="4" r="1.4" fill="#ddd"/></svg>
<svg style="position:absolute;left:1100px;top:105px;" width="11" height="12" viewBox="0 0 11 12"><circle cx="5.5" cy="4.5" r="3.5" fill="#e89850"/><rect x="3.7" y="8" width="3.6" height="3" fill="#e89850"/><path d="M4 4 L5.5 5.5 L7 4" stroke="#334d80" stroke-width="0.7" fill="none"/></svg>
<div class="t" style="left:1114.7px;top:105.0px;height:12px;line-height:12px;color:#e8882f;font-size:8.5px;transform:scaleX(0.86);transform-origin:0 0;">Light</div>
<svg style="position:absolute;left:1145px;top:105px;" width="12" height="12" viewBox="0 0 12 12"><circle cx="6" cy="6" r="4.2" fill="none" stroke="#5cb85c" stroke-width="0.9"/><circle cx="6" cy="6" r="0.8" fill="#5cb85c"/></svg>
<svg style="position:absolute;left:1263px;top:106.5px;" width="10" height="8" viewBox="0 0 10 8"><path d="M1 4 C3 1 7 1 9 4 C7 7 3 7 1 4 Z" fill="none" stroke="#ddd" stroke-width="0.9"/><circle cx="5" cy="4" r="1.4" fill="#ddd"/></svg>
<div style="left:1059px;top:147.5px;width:221px;height:531.2px;background:#393939;border-radius:4px 4px 0 0"></div>
<div style="left:1059px;top:147.5px;width:221px;height:17.5px;background:#303030;border-radius:4px 4px 0 0"></div>
<div style="left:1059px;top:165px;width:18.5px;height:513px;background:#232323;"></div>
<div style="left:1065px;top:150px;width:19px;height:12px;background:#2b2b2b;border-radius:3px;"></div>
<svg style="position:absolute;left:1065px;top:150px;" width="19" height="12" viewBox="0 0 19 12"><rect x="1.5" y="1.5" width="8" height="3.5" rx="1.7" fill="#ddd"/><rect x="1.5" y="6.5" width="8" height="3.5" rx="1.7" fill="none" stroke="#ddd" stroke-width="0.8"/><circle cx="7.5" cy="8.2" r="1.3" fill="#b9e3d0"/><path d="M12 5 L14.5 7.5 L17 5" fill="none" stroke="#c8c8c8" stroke-width="1.1"/></svg>
<svg style="position:absolute;left:1094px;top:150px;" width="12" height="12" viewBox="0 0 12 12"><path d="M1.5 3 V1.5 H3 M9 1.5 H10.5 V3 M10.5 9 V10.5 H9 M3 10.5 H1.5 V9" fill="none" stroke="#ccc" stroke-width="0.8"/><rect x="3.5" y="3.5" width="5" height="5" fill="#ddd"/></svg>
<div class="t" style="left:1110px;top:151.0px;height:12px;line-height:12px;color:#d8d8d8;font-size:8.5px;transform:scaleX(0.86);transform-origin:0 0;">Cube</div>
<div class="t" style="left:1134px;top:150.5px;height:12px;line-height:12px;color:#666;font-size:8.5px;transform:scaleX(0.86);transform-origin:0 0;">›</div>
<svg style="position:absolute;left:1146px;top:150px;" width="12" height="12" viewBox="0 0 12 12"><circle cx="6" cy="6" r="4.8" fill="#ddd"/><path d="M6 6 V10.8 A4.8 4.8 0 0 1 1.2 6 Z" fill="#333"/><path d="M6 6 H10.8 A4.8 4.8 0 0 0 6 1.2 Z" fill="#333"/></svg>
<div class="t" style="left:1163px;top:151.0px;height:12px;line-height:12px;color:#d8d8d8;font-size:8.5px;transform:scaleX(0.86);transform-origin:0 0;">Material</div>
<svg style="position:absolute;left:1262px;top:150px;" width="12" height="12" viewBox="0 0 12 12"><path d="M3 9 L5 7 M5 4.5 L7.5 2 L10 4.5 L7.5 7 M4.5 4 L8 7.5" fill="none" stroke="#999" stroke-width="0.9"/></svg>
<div style="left:1060px;top:166px;width:17px;height:22px;background:#2b2b2b;border-radius:3px 0 0 3px"></div>
<div style="left:1060px;top:193px;width:17px;height:94px;background:#2b2b2b;border-radius:3px 0 0 3px"></div>
<div style="left:1060px;top:293px;width:17px;height:130px;background:#2b2b2b;border-radius:3px 0 0 3px"></div>
<div style="left:1060px;top:404px;width:17px;height:19px;background:#474747;border-radius:3px 0 0 3px"></div>
<svg style="position:absolute;left:1062.5px;top:173px;" width="12" height="12" viewBox="0 0 12 12"><path d="M2 11 V6 L1 4 H4 L3 6 V11 Z M7 2 C9 1 10.5 3 9.5 4.5 L8.7 11 H7.3 L6.5 4.5 C5.5 3 7 1 7 2 Z" fill="#ddd"/></svg>
<svg style="position:absolute;left:1062.5px;top:197px;" width="12" height="12" viewBox="0 0 12 12"><rect x="1.5" y="4" width="9" height="6.5" fill="none" stroke="#ddd" stroke-width="0.9"/><path d="M3 4 L5 1.5 M7 4 L9 1.5" stroke="#ddd" stroke-width="0.8"/></svg>
<svg style="position:absolute;left:1062.5px;top:215px;" width="12" height="12" viewBox="0 0 12 12"><rect x="1.5" y="5" width="9" height="5.5" fill="none" stroke="#ddd" stroke-width="0.9"/><rect x="3" y="1.5" width="6" height="4" fill="#ddd"/><rect x="3.5" y="7" width="5" height="2" fill="#ddd"/></svg>
<svg style="position:absolute;left:1062.5px;top:234px;" width="12" height="12" viewBox="0 0 12 12"><rect x="1.5" y="4" width="7" height="6" fill="none" stroke="#ccc" stroke-width="0.9"/><rect x="3.5" y="2" width="7" height="6" fill="#303030" stroke="#ccc" stroke-width="0.9"/><path d="M4 7.5 L6.5 4.5 L9 7.5 Z" fill="#ccc"/></svg>
<svg style="position:absolute;left:1062.5px;top:252.5px;" width="12" height="12" viewBox="0 0 12 12"><path d="M2 10 C1 7 2.5 4 4.5 3 C5 6 7 6 6 10 Z" fill="#ccc"/><circle cx="7.5" cy="8" r="2.5" fill="none" stroke="#ccc" stroke-width="0.9"/><circle cx="7" cy="2" r="1" fill="#ccc"/></svg>
<svg style="position:absolute;left:1062.5px;top:272px;" width="12" height="12" viewBox="0 0 12 12"><circle cx="6" cy="6" r="4.8" fill="#c95a2a"/><path d="M3 3 C5 5 3 7 4.5 9 M7 1.5 C8 4 9.5 5 10.5 5 M7 10 C7 8 9 7.5 10 8" fill="none" stroke="#303030" stroke-width="0.9"/></svg>
<svg style="position:absolute;left:1062.5px;top:296px;" width="12" height="12" viewBox="0 0 12 12"><rect x="2" y="2" width="8" height="8" fill="#e89850"/><rect x="3.5" y="3.5" width="5" height="5" fill="#c97a3a"/></svg>
<svg style="position:absolute;left:1062.5px;top:314px;" width="12" height="12" viewBox="0 0 12 12"><path d="M2 10 L7 5 M6 2 C8 1 10.5 3 10 5 L8 4 L7 5 L8 6 C6 7 4 5 6 2" fill="none" stroke="#5a8fd0" stroke-width="1.2"/></svg>
<svg style="position:absolute;left:1062.5px;top:333px;" width="12" height="12" viewBox="0 0 12 12"><path d="M2 2 L10 10 M2 2 L6 6 L10 4 M6 6 L4 10" fill="none" stroke="#5a8fd0" stroke-width="0.9"/><circle cx="2" cy="2" r="1" fill="#ddd"/><circle cx="10" cy="10" r="1" fill="#ddd"/></svg>
<svg style="position:absolute;left:1062.5px;top:351.5px;" width="12" height="12" viewBox="0 0 12 12"><circle cx="5.5" cy="6.5" r="3.8" fill="none" stroke="#5a8fd0" stroke-width="1.1"/><circle cx="5.5" cy="6.5" r="1.3" fill="#5a8fd0"/><circle cx="9.5" cy="2.5" r="1.4" fill="#ddd"/></svg>
<svg style="position:absolute;left:1062.5px;top:371px;" width="12" height="12" viewBox="0 0 12 12"><circle cx="4.5" cy="7.5" r="3" fill="none" stroke="#5a8fd0" stroke-width="1.2"/><circle cx="7.5" cy="4.5" r="3" fill="none" stroke="#5a8fd0" stroke-width="1.2"/></svg>
<svg style="position:absolute;left:1062.5px;top:389px;" width="12" height="12" viewBox="0 0 12 12"><path d="M2 2 H10 L6 10 Z" fill="none" stroke="#5cb85c" stroke-width="1"/><circle cx="2" cy="2" r="1.2" fill="#5cb85c"/><circle cx="10" cy="2" r="1.2" fill="#5cb85c"/><circle cx="6" cy="10" r="1.2" fill="#5cb85c"/></svg>
<svg style="position:absolute;left:1062.5px;top:407px;" width="12" height="12" viewBox="0 0 12 12"><circle cx="6" cy="6" r="5" fill="#e0805a"/><path d="M3 3 C5 5 3 7 4.5 9 M7 1.5 C8 4 9.5 5 10.5 5 M7 10 C7 8 9 7.5 10 8" fill="none" stroke="#5a3a30" stroke-width="0.9"/></svg>
<div style="left:1083px;top:171.5px;width:172px;height:50.5px;background:#292929;border-radius:3px"></div>
<div style="left:1086px;top:174.5px;width:166px;height:12px;background:#5e5e5e;border-radius:3px"></div>
<svg style="position:absolute;left:1088px;top:175px;" width="12" height="11" viewBox="0 0 12 11"><circle cx="5.5" cy="5.5" r="4.5" fill="#b8a890"/><circle cx="4" cy="4" r="2" fill="#e8dcc8"/></svg>
<div class="t" style="left:1103px;top:175.0px;height:12px;line-height:12px;color:#e8e8e8;font-size:8.5px;transform:scaleX(0.86);transform-origin:0 0;">Material</div>
<svg style="position:absolute;left:1089px;top:212px;" width="6" height="6" viewBox="0 0 6 6"><path d="M1 1 L5 3 L1 5 Z" fill="#aaa"/></svg>
<svg style="position:absolute;left:1170px;top:214px;" width="10" height="5" viewBox="0 0 10 5"><path d="M1 1 H2 M3.5 1 H4.5 M6 1 H7 M8.5 1 H9.5 M1 3.5 H2 M3.5 3.5 H4.5 M6 3.5 H7 M8.5 3.5 H9.5" stroke="#777" stroke-width="0.8"/></svg>
<div style="left:1262px;top:172.5px;width:12px;height:11px;background:#505050;border-radius:3px;"></div>
<div style="left:1262px;top:184px;width:12px;height:11px;background:#505050;border-radius:3px;"></div>
<div class="t" style="left:1262px;top:172.5px;width:12px;text-align:center;height:12px;line-height:12px;color:#ddd;font-size:10px;transform:scaleX(1.0);transform-origin:50% 0;">+</div>
<div style="left:1265px;top:189.5px;width:6px;height:1px;background:#ddd;"></div>
<div style="left:1262px;top:202.5px;width:12px;height:12px;background:#262626;border-radius:3px;"></div>
<svg style="position:absolute;left:1262px;top:202.5px;" width="12" height="12" viewBox="0 0 12 12"><path d="M3.5 5 L6.0 7.5 L8.5 5" fill="none" stroke="#c8c8c8" stroke-width="1.1"/></svg>
<div style="left:1083px;top:228px;width:20.5px;height:12px;background:#2b2b2b;border-radius:3px;"></div>
<svg style="position:absolute;left:1083px;top:228px;" width="20" height="12" viewBox="0 0 20 12"><circle cx="6" cy="6" r="4.5" fill="#ddd"/><path d="M6 6 V10.5 A4.5 4.5 0 0 1 1.5 6 Z" fill="#333"/><path d="M6 6 H10.5 A4.5 4.5 0 0 0 6 1.5 Z" fill="#333"/><path d="M12.5 5 L15.0 7.5 L17.5 5" fill="none" stroke="#c8c8c8" stroke-width="1.1"/></svg>
<div style="left:1104px;top:228px;width:103px;height:12px;background:#1d1d1d;"></div>
<div class="t" style="left:1109px;top:228.5px;height:12px;line-height:12px;color:#e6e6e6;font-size:8.5px;transform:scaleX(0.86);transform-origin:0 0;">Material</div>
<div style="left:1207px;top:228px;width:40px;height:12px;background:#545454;border-radius:0 3px 3px 0"></div>
<svg style="position:absolute;left:1207px;top:228px;" width="40" height="12" viewBox="0 0 40 12"><path d="M6.5 2 L10 3 V6.5 C10 8.5 8 10 6.5 10.5 C5 10 3 8.5 3 6.5 V3 Z" fill="none" stroke="#bbb" stroke-width="0.8"/><path d="M16 3.5 H19.5 L21 5 V10.5 H16 Z M18 3.5 V2 H21.5 L23 3.5 V8.5" fill="none" stroke="#ccc" stroke-width="0.8"/><path d="M30 3.5 L35 8.5 M35 3.5 L30 8.5" stroke="#ccc" stroke-width="0.9"/></svg>
<div style="left:1220px;top:228px;width:0.6px;height:12px;background:#444;"></div>
<div style="left:1233.5px;top:228px;width:0.6px;height:12px;background:#444;"></div>
<div style="left:1255px;top:228px;width:19px;height:12px;background:#2b2b2b;border-radius:3px;"></div>
<svg style="position:absolute;left:1255px;top:228px;" width="19" height="12" viewBox="0 0 19 12"><path d="M2 2.5 H9 L5.5 10 Z" fill="none" stroke="#ddd" stroke-width="0.8"/><circle cx="2" cy="2.5" r="1.2" fill="#ddd"/><circle cx="9" cy="2.5" r="1.2" fill="#ddd"/><circle cx="5.5" cy="10" r="1.2" fill="#ddd"/><path d="M12 5 L14.5 7.5 L17 5" fill="none" stroke="#c8c8c8" stroke-width="1.1"/></svg>
<div style="left:1083px;top:245px;width:191px;height:11.5px;background:#545454;border-radius:3px;"></div>
<div style="left:1146.5px;top:245px;width:0.8px;height:11.5px;background:#3d3d3d;"></div>
<div style="left:1210.5px;top:245px;width:0.8px;height:11.5px;background:#3d3d3d;"></div>
<div class="t" style="left:1083px;top:245.5px;width:64px;text-align:center;height:12px;line-height:12px;color:#e0e0e0;font-size:8.5px;transform:scaleX(0.86);transform-origin:50% 0;">Assign</div>
<div class="t" style="left:1147px;top:245.5px;width:64px;text-align:center;height:12px;line-height:12px;color:#e0e0e0;font-size:8.5px;transform:scaleX(0.86);transform-origin:50% 0;">Select</div>
<div class="t" style="left:1211px;top:245.5px;width:63px;text-align:center;height:12px;line-height:12px;color:#e0e0e0;font-size:8.5px;transform:scaleX(0.86);transform-origin:50% 0;">Deselect</div>
<svg style="position:absolute;left:1083px;top:267px;" width="6" height="7" viewBox="0 0 6 7"><path d="M1 1 L5 3.5 L1 6 Z" fill="#bbb"/></svg>
<div class="t" style="left:1092px;top:265.5px;height:12px;line-height:12px;color:#cfcfcf;font-size:8.5px;transform:scaleX(0.86);transform-origin:0 0;">Preview</div>
<svg style="position:absolute;left:1082px;top:283px;" width="7" height="6" viewBox="0 0 7 6"><path d="M1 1 H6 L3.5 5 Z" fill="#bbb"/></svg>
<div class="t" style="left:1092px;top:281.0px;height:12px;line-height:12px;color:#cfcfcf;font-size:8.5px;transform:scaleX(0.86);transform-origin:0 0;">Surface</div>
<svg style="position:absolute;left:1258px;top:268px;" width="9" height="5" viewBox="0 0 9 5"><path d="M1 1 H2 M3.5 1 H4.5 M6 1 H7 M1 3.5 H2 M3.5 3.5 H4.5 M6 3.5 H7" stroke="#666" stroke-width="0.8"/></svg>
<svg style="position:absolute;left:1258px;top:284px;" width="9" height="5" viewBox="0 0 9 5"><path d="M1 1 H2 M3.5 1 H4.5 M6 1 H7 M1 3.5 H2 M3.5 3.5 H4.5 M6 3.5 H7" stroke="#666" stroke-width="0.8"/></svg>
<div style="left:1077.5px;top:294px;width:202.5px;height:1px;background:#363636;"></div>
<div style="left:1083px;top:300px;width:191px;height:12.5px;background:#4772b3;border-radius:3px;"></div>
<svg style="position:absolute;left:1086px;top:300px;" width="14" height="12" viewBox="0 0 14 12"><rect x="2" y="2" width="7" height="3.5" rx="1.5" fill="#fff"/><rect x="2" y="6.5" width="7" height="3.5" rx="1.5" fill="none" stroke="#fff" stroke-width="0.8"/><circle cx="8" cy="8.3" r="1.4" fill="#fff"/></svg>
<div class="t" style="left:1095px;top:301.0px;width:179px;text-align:center;height:12px;line-height:12px;color:#ffffff;font-size:8.5px;transform:scaleX(0.86);transform-origin:50% 0;">Use Nodes</div>
<div class="t" style="right:132px;top:325.0px;height:12px;line-height:12px;color:#d0d0d0;font-size:8.5px;transform:scaleX(0.86);transform-origin:100% 0;">Surface</div>
<div style="left:1155px;top:325px;width:105px;height:11.5px;background:#2b2b2b;border-radius:3px;"></div>
<svg style="position:absolute;left:1157.5px;top:327.5px;" width="6" height="6" viewBox="0 0 6 6"><circle cx="3" cy="3" r="2" fill="#8ac43a"/></svg>
<div class="t" style="left:1167px;top:325.0px;height:12px;line-height:12px;color:#e0e0e0;font-size:8.5px;transform:scaleX(0.86);transform-origin:0 0;">Principled BSDF</div>
<div style="left:1155px;top:348.5px;width:105px;height:11.5px;background:#2b2b2b;border-radius:3px;"></div>
<div class="t" style="left:1159px;top:348.8px;height:12px;line-height:12px;color:#e0e0e0;font-size:8.5px;transform:scaleX(0.86);transform-origin:0 0;">GGX</div>
<svg style="position:absolute;left:1252px;top:348.5px;" width="8" height="11.5" viewBox="0 0 8 11.5"><path d="M1.2 4.7 L3.7 7.2 L6.2 4.7" fill="none" stroke="#c8c8c8" stroke-width="1.1"/></svg>
<svg style="position:absolute;left:1265px;top:351.3px;" width="6" height="6" viewBox="0 0 6 6"><circle cx="3" cy="3" r="1.3" fill="#ccc"/></svg>
<div style="left:1155px;top:365px;width:105px;height:11.5px;background:#2b2b2b;border-radius:3px;"></div>
<div class="t" style="left:1159px;top:365.3px;height:12px;line-height:12px;color:#e0e0e0;font-size:8.5px;transform:scaleX(0.86);transform-origin:0 0;">Christensen-Burley</div>
<svg style="position:absolute;left:1252px;top:365px;" width="8" height="11.5" viewBox="0 0 8 11.5"><path d="M1.2 4.7 L3.7 7.2 L6.2 4.7" fill="none" stroke="#c8c8c8" stroke-width="1.1"/></svg>
<svg style="position:absolute;left:1265px;top:367.8px;" width="6" height="6" viewBox="0 0 6 6"><circle cx="3" cy="3" r="1.3" fill="#ccc"/></svg>
<svg style="position:absolute;left:1087px;top:384px;" width="7" height="6" viewBox="0 0 7 6"><path d="M1 1 H6 L3.5 5 Z" fill="#ddd"/></svg>
<div class="t" style="right:132px;top:382.0px;height:12px;line-height:12px;color:#d0d0d0;font-size:8.5px;transform:scaleX(0.86);transform-origin:100% 0;">Base Color</div>
<div style="left:1155px;top:381.5px;width:105px;height:11.5px;background:#2f3b4b;border-radius:3px;"></div>
<svg style="position:absolute;left:1157.5px;top:384.5px;" width="6" height="6" viewBox="0 0 6 6"><circle cx="3" cy="3" r="2" fill="#8ac43a"/></svg>
<div class="t" style="left:1167px;top:382.0px;height:12px;line-height:12px;color:#e0e0e0;font-size:8.5px;transform:scaleX(0.86);transform-origin:0 0;">TexturesCom...088_2_M.jpg</div>
<div style="left:1084px;top:398px;width:20px;height:11px;background:#2b2b2b;border-radius:3px;"></div>
<svg style="position:absolute;left:1084px;top:398px;" width="20" height="11" viewBox="0 0 20 11"><rect x="1.5" y="0.5" width="8.5" height="10" fill="none" stroke="#ddd" stroke-width="0.8"/><path d="M2 10 L5 5.5 L9.5 10 Z" fill="#ddd"/><circle cx="7.5" cy="3" r="0.9" fill="#fff"/><path d="M12.5 4.5 L15.0 7.0 L17.5 4.5" fill="none" stroke="#c8c8c8" stroke-width="1.1"/></svg>
<div style="left:1104px;top:398px;width:116px;height:11px;background:#1d1d1d;"></div>
<div class="t" style="left:1108px;top:398.0px;height:12px;line-height:12px;color:#e6e6e6;font-size:8.5px;transform:scaleX(0.86);transform-origin:0 0;">TexturesCom_SoilBeach0088_...</div>
<div style="left:1220px;top:398px;width:55px;height:11px;background:#545454;border-radius:0 3px 3px 0"></div>
<svg style="position:absolute;left:1220px;top:398px;" width="55" height="11" viewBox="0 0 55 11"><path d="M6.5 1.5 L10 2.5 V6 C10 8 8 9.5 6.5 10 C5 9.5 3 8 3 6 V2.5 Z" fill="none" stroke="#bbb" stroke-width="0.8"/><path d="M16.5 3 H20 L21.5 4.5 V10 H16.5 Z M18.5 3 V1.5 H22 L23.5 3 V8" fill="none" stroke="#ccc" stroke-width="0.8"/><path d="M29.5 3 H32.5 L33.5 4 H38 V9.5 H29.5 Z" fill="#e6e6e6"/><path d="M45 3 L50 8 M50 3 L45 8" stroke="#ccc" stroke-width="0.9"/></svg>
<div style="left:1233.5px;top:398px;width:0.6px;height:11px;background:#444;"></div>
<div style="left:1247.5px;top:398px;width:0.6px;height:11px;background:#444;"></div>
<div style="left:1261.5px;top:398px;width:0.6px;height:11px;background:#444;"></div>
<div style="left:1155px;top:414.5px;width:105px;height:11.5px;background:#2b2b2b;border-radius:3px;"></div>
<div class="t" style="left:1159px;top:414.8px;height:12px;line-height:12px;color:#e0e0e0;font-size:8.5px;transform:scaleX(0.86);transform-origin:0 0;">Linear</div>
<svg style="position:absolute;left:1252px;top:414.5px;" width="8" height="11.5" viewBox="0 0 8 11.5"><path d="M1.2 4.7 L3.7 7.2 L6.2 4.7" fill="none" stroke="#c8c8c8" stroke-width="1.1"/></svg>
<svg style="position:absolute;left:1265px;top:417.3px;" width="6" height="6" viewBox="0 0 6 6"><circle cx="3" cy="3" r="1.3" fill="#ccc"/></svg>
<div style="left:1155px;top:431.5px;width:105px;height:11.5px;background:#2b2b2b;border-radius:3px;"></div>
<div class="t" style="left:1159px;top:431.8px;height:12px;line-height:12px;color:#e0e0e0;font-size:8.5px;transform:scaleX(0.86);transform-origin:0 0;">Flat</div>
<svg style="position:absolute;left:1252px;top:431.5px;" width="8" height="11.5" viewBox="0 0 8 11.5"><path d="M1.2 4.7 L3.7 7.2 L6.2 4.7" fill="none" stroke="#c8c8c8" stroke-width="1.1"/></svg>
<svg style="position:absolute;left:1265px;top:434.3px;" width="6" height="6" viewBox="0 0 6 6"><circle cx="3" cy="3" r="1.3" fill="#ccc"/></svg>
<div style="left:1155px;top:448px;width:105px;height:11.5px;background:#2b2b2b;border-radius:3px;"></div>
<div class="t" style="left:1159px;top:448.3px;height:12px;line-height:12px;color:#e0e0e0;font-size:8.5px;transform:scaleX(0.86);transform-origin:0 0;">Repeat</div>
<svg style="position:absolute;left:1252px;top:448px;" width="8" height="11.5" viewBox="0 0 8 11.5"><path d="M1.2 4.7 L3.7 7.2 L6.2 4.7" fill="none" stroke="#c8c8c8" stroke-width="1.1"/></svg>
<svg style="position:absolute;left:1265px;top:450.8px;" width="6" height="6" viewBox="0 0 6 6"><circle cx="3" cy="3" r="1.3" fill="#ccc"/></svg>
<div style="left:1160px;top:465px;width:100px;height:11.5px;background:#2b2b2b;border-radius:3px;"></div>
<div class="t" style="left:1164px;top:465.3px;height:12px;line-height:12px;color:#e0e0e0;font-size:8.5px;transform:scaleX(0.86);transform-origin:0 0;">Single Image</div>
<svg style="position:absolute;left:1252px;top:465px;" width="8" height="11.5" viewBox="0 0 8 11.5"><path d="M1.2 4.7 L3.7 7.2 L6.2 4.7" fill="none" stroke="#c8c8c8" stroke-width="1.1"/></svg>
<div class="t" style="left:1085px;top:482.0px;height:12px;line-height:12px;color:#d0d0d0;font-size:8.5px;transform:scaleX(0.86);transform-origin:0 0;">Color Space</div>
<div style="left:1219px;top:481.5px;width:41px;height:11.5px;background:#2b2b2b;border-radius:3px;"></div>
<div class="t" style="left:1223px;top:481.8px;height:12px;line-height:12px;color:#e0e0e0;font-size:8.5px;transform:scaleX(0.86);transform-origin:0 0;">sRGB</div>
<svg style="position:absolute;left:1252px;top:481.5px;" width="8" height="11.5" viewBox="0 0 8 11.5"><path d="M1.2 4.7 L3.7 7.2 L6.2 4.7" fill="none" stroke="#c8c8c8" stroke-width="1.1"/></svg>
<div class="t" style="right:132px;top:499.0px;height:12px;line-height:12px;color:#d0d0d0;font-size:8.5px;transform:scaleX(0.86);transform-origin:100% 0;">Vector</div>
<div style="left:1155px;top:499px;width:105px;height:11.5px;background:#2b2b2b;border-radius:3px;"></div>
<svg style="position:absolute;left:1157.5px;top:501.5px;" width="6" height="6" viewBox="0 0 6 6"><circle cx="3" cy="3" r="1.8" fill="#6080c0"/></svg>
<div class="t" style="left:1167px;top:499.0px;height:12px;line-height:12px;color:#e0e0e0;font-size:8.5px;transform:scaleX(0.86);transform-origin:0 0;">Default</div>
<div class="t" style="right:132px;top:515.5px;height:12px;line-height:12px;color:#d0d0d0;font-size:8.5px;transform:scaleX(0.86);transform-origin:100% 0;">Subsurface</div>
<div style="left:1155px;top:515px;width:105px;height:11.5px;background:#545454;border-radius:3px;"></div>
<div style="left:1155px;top:515px;width:11px;height:11.5px;background:#2b2b2b;border-radius:3px 0 0 3px"></div>
<svg style="position:absolute;left:1157.5px;top:518px;" width="6" height="6" viewBox="0 0 6 6"><circle cx="3" cy="3" r="1.8" fill="#aaa"/></svg>
<div class="t" style="left:1166px;top:515.5px;width:94px;text-align:center;height:12px;line-height:12px;color:#e0e0e0;font-size:8.5px;transform:scaleX(0.86);transform-origin:50% 0;">0.000</div>
<svg style="position:absolute;left:1265px;top:518px;" width="6" height="6" viewBox="0 0 6 6"><circle cx="3" cy="3" r="1.3" fill="#ccc"/></svg>
<div class="t" style="right:132px;top:532.0px;height:12px;line-height:12px;color:#d0d0d0;font-size:8.5px;transform:scaleX(0.86);transform-origin:100% 0;">Subsurface Radius</div>
<div style="left:1155px;top:532px;width:11px;height:11.5px;background:#2b2b2b;border-radius:3px"></div>
<svg style="position:absolute;left:1157.5px;top:535px;" width="6" height="6" viewBox="0 0 6 6"><circle cx="3" cy="3" r="1.8" fill="#6080c0"/></svg>
<div style="left:1172px;top:531.5px;width:88px;height:39.5px;background:#545454;border-radius:3px;"></div>
<div style="left:1172px;top:544.8px;width:88px;height:0.8px;background:#474747;"></div>
<div style="left:1172px;top:558px;width:88px;height:0.8px;background:#474747;"></div>
<div class="t" style="left:1172px;top:532.5px;width:88px;text-align:center;height:12px;line-height:12px;color:#e0e0e0;font-size:8.5px;transform:scaleX(0.86);transform-origin:50% 0;">1.000</div>
<div class="t" style="left:1172px;top:545.5px;width:88px;text-align:center;height:12px;line-height:12px;color:#e0e0e0;font-size:8.5px;transform:scaleX(0.86);transform-origin:50% 0;">0.200</div>
<div class="t" style="left:1172px;top:558.5px;width:88px;text-align:center;height:12px;line-height:12px;color:#e0e0e0;font-size:8.5px;transform:scaleX(0.86);transform-origin:50% 0;">0.100</div>
<svg style="position:absolute;left:1265px;top:535px;" width="6" height="6" viewBox="0 0 6 6"><circle cx="3" cy="3" r="1.3" fill="#ccc"/></svg>
<svg style="position:absolute;left:1265px;top:548px;" width="6" height="6" viewBox="0 0 6 6"><circle cx="3" cy="3" r="1.3" fill="#ccc"/></svg>
<svg style="position:absolute;left:1265px;top:561px;" width="6" height="6" viewBox="0 0 6 6"><circle cx="3" cy="3" r="1.3" fill="#ccc"/></svg>
<div class="t" style="right:132px;top:575.5px;height:12px;line-height:12px;color:#d0d0d0;font-size:8.5px;transform:scaleX(0.86);transform-origin:100% 0;">Subsurface Color</div>
<div style="left:1155px;top:575px;width:11px;height:11.5px;background:#2b2b2b;border-radius:3px 0 0 3px"></div>
<svg style="position:absolute;left:1157.5px;top:578px;" width="6" height="6" viewBox="0 0 6 6"><circle cx="3" cy="3" r="2" fill="#9cc43a"/></svg>
<div style="left:1166px;top:575px;width:94px;height:11.5px;background:#e8e8e8;border-radius:0 3px 3px 0"></div>
<svg style="position:absolute;left:1265px;top:578px;" width="6" height="6" viewBox="0 0 6 6"><circle cx="3" cy="3" r="1.3" fill="#ccc"/></svg>
<div class="t" style="right:132px;top:592.5px;height:12px;line-height:12px;color:#d0d0d0;font-size:8.5px;transform:scaleX(0.86);transform-origin:100% 0;">Metallic</div>
<div style="left:1155px;top:592px;width:105px;height:11.5px;background:#545454;border-radius:3px;"></div>
<div style="left:1155px;top:592px;width:11px;height:11.5px;background:#2b2b2b;border-radius:3px 0 0 3px"></div>
<svg style="position:absolute;left:1157.5px;top:595px;" width="6" height="6" viewBox="0 0 6 6"><circle cx="3" cy="3" r="1.8" fill="#aaa"/></svg>
<div class="t" style="left:1166px;top:592.5px;width:94px;text-align:center;height:12px;line-height:12px;color:#e0e0e0;font-size:8.5px;transform:scaleX(0.86);transform-origin:50% 0;">0.000</div>
<svg style="position:absolute;left:1265px;top:595px;" width="6" height="6" viewBox="0 0 6 6"><circle cx="3" cy="3" r="1.3" fill="#ccc"/></svg>
<div class="t" style="right:132px;top:608.7px;height:12px;line-height:12px;color:#d0d0d0;font-size:8.5px;transform:scaleX(0.86);transform-origin:100% 0;">Specular</div>
<div style="left:1155px;top:608.2px;width:105px;height:11.5px;background:#545454;border-radius:3px;"></div>
<div style="left:1155px;top:608.2px;width:11px;height:11.5px;background:#2b2b2b;border-radius:3px 0 0 3px"></div>
<svg style="position:absolute;left:1157.5px;top:611.2px;" width="6" height="6" viewBox="0 0 6 6"><circle cx="3" cy="3" r="1.8" fill="#aaa"/></svg>
<div style="left:1166px;top:608.2px;width:47px;height:11.5px;background:#4772b3;"></div>
<div class="t" style="left:1166px;top:608.7px;width:94px;text-align:center;height:12px;line-height:12px;color:#e0e0e0;font-size:8.5px;transform:scaleX(0.86);transform-origin:50% 0;">0.500</div>
<svg style="position:absolute;left:1265px;top:611.2px;" width="6" height="6" viewBox="0 0 6 6"><circle cx="3" cy="3" r="1.3" fill="#ccc"/></svg>
<div class="t" style="right:132px;top:625.4px;height:12px;line-height:12px;color:#d0d0d0;font-size:8.5px;transform:scaleX(0.86);transform-origin:100% 0;">Specular Tint</div>
<div style="left:1155px;top:624.9px;width:105px;height:11.5px;background:#545454;border-radius:3px;"></div>
<div style="left:1155px;top:624.9px;width:11px;height:11.5px;background:#2b2b2b;border-radius:3px 0 0 3px"></div>
<svg style="position:absolute;left:1157.5px;top:627.9px;" width="6" height="6" viewBox="0 0 6 6"><circle cx="3" cy="3" r="1.8" fill="#aaa"/></svg>
<div class="t" style="left:1166px;top:625.4px;width:94px;text-align:center;height:12px;line-height:12px;color:#e0e0e0;font-size:8.5px;transform:scaleX(0.86);transform-origin:50% 0;">0.000</div>
<svg style="position:absolute;left:1265px;top:627.9px;" width="6" height="6" viewBox="0 0 6 6"><circle cx="3" cy="3" r="1.3" fill="#ccc"/></svg>
<div class="t" style="right:132px;top:642.0px;height:12px;line-height:12px;color:#d0d0d0;font-size:8.5px;transform:scaleX(0.86);transform-origin:100% 0;">Roughness</div>
<div style="left:1155px;top:641.5px;width:105px;height:11.5px;background:#545454;border-radius:3px;"></div>
<div style="left:1155px;top:641.5px;width:11px;height:11.5px;background:#2b2b2b;border-radius:3px 0 0 3px"></div>
<svg style="position:absolute;left:1157.5px;top:644.5px;" width="6" height="6" viewBox="0 0 6 6"><circle cx="3" cy="3" r="1.8" fill="#aaa"/></svg>
<div style="left:1166px;top:641.5px;width:37px;height:11.5px;background:#4772b3;"></div>
<div class="t" style="left:1166px;top:642.0px;width:94px;text-align:center;height:12px;line-height:12px;color:#e0e0e0;font-size:8.5px;transform:scaleX(0.86);transform-origin:50% 0;">0.400</div>
<svg style="position:absolute;left:1265px;top:644.5px;" width="6" height="6" viewBox="0 0 6 6"><circle cx="3" cy="3" r="1.3" fill="#ccc"/></svg>
<div class="t" style="right:132px;top:658.7px;height:12px;line-height:12px;color:#d0d0d0;font-size:8.5px;transform:scaleX(0.86);transform-origin:100% 0;">Anisotropic</div>
<div style="left:1155px;top:658.2px;width:105px;height:11.5px;background:#545454;border-radius:3px;"></div>
<div style="left:1155px;top:658.2px;width:11px;height:11.5px;background:#2b2b2b;border-radius:3px 0 0 3px"></div>
<svg style="position:absolute;left:1157.5px;top:661.2px;" width="6" height="6" viewBox="0 0 6 6"><circle cx="3" cy="3" r="1.8" fill="#aaa"/></svg>
<div class="t" style="left:1166px;top:658.7px;width:94px;text-align:center;height:12px;line-height:12px;color:#e0e0e0;font-size:8.5px;transform:scaleX(0.86);transform-origin:50% 0;">0.000</div>
<svg style="position:absolute;left:1265px;top:661.2px;" width="6" height="6" viewBox="0 0 6 6"><circle cx="3" cy="3" r="1.3" fill="#ccc"/></svg>
<div class="t" style="right:132px;top:675.3px;height:12px;line-height:12px;color:#d0d0d0;font-size:8.5px;transform:scaleX(0.86);transform-origin:100% 0;">Anisotropic Rotation</div>
<div style="left:1155px;top:674.8px;width:105px;height:11.5px;background:#545454;border-radius:3px;"></div>
<div style="left:1155px;top:674.8px;width:11px;height:11.5px;background:#2b2b2b;border-radius:3px 0 0 3px"></div>
<svg style="position:absolute;left:1157.5px;top:677.8px;" width="6" height="6" viewBox="0 0 6 6"><circle cx="3" cy="3" r="1.8" fill="#aaa"/></svg>
<div class="t" style="left:1166px;top:675.3px;width:94px;text-align:center;height:12px;line-height:12px;color:#e0e0e0;font-size:8.5px;transform:scaleX(0.86);transform-origin:50% 0;">0.000</div>
<svg style="position:absolute;left:1265px;top:677.8px;" width="6" height="6" viewBox="0 0 6 6"><circle cx="3" cy="3" r="1.3" fill="#ccc"/></svg>
<div style="left:0px;top:678.6px;width:1280px;height:1px;background:#1e1e1e;"></div>
<div style="left:0px;top:679.6px;width:1280px;height:13.4px;background:#2f2f2f;"></div>
<svg style="position:absolute;left:8px;top:680.5px;" width="8" height="11" viewBox="0 0 8 11"><rect x="1" y="1" width="6" height="9" rx="3" fill="none" stroke="#bbb" stroke-width="0.9"/><path d="M4 1 V4.5" stroke="#bbb" stroke-width="0.8"/></svg>
<div class="t" style="left:23px;top:680.5px;height:12px;line-height:12px;color:#c8c8c8;font-size:8.5px;transform:scaleX(0.86);transform-origin:0 0;">Change Frame</div>
<svg style="position:absolute;left:78px;top:680.5px;" width="8" height="11" viewBox="0 0 8 11"><rect x="1" y="1" width="6" height="9" rx="3" fill="none" stroke="#bbb" stroke-width="0.9"/><path d="M4 1 V4.5" stroke="#bbb" stroke-width="0.8"/></svg>
<svg style="position:absolute;left:82px;top:680.5px;" width="8" height="11" viewBox="0 0 8 11"><rect x="1" y="1" width="6" height="9" rx="3" fill="none" stroke="#bbb" stroke-width="0.9"/><path d="M4 1 V4.5" stroke="#bbb" stroke-width="0.8"/></svg>
<div class="t" style="left:94px;top:680.5px;height:12px;line-height:12px;color:#c8c8c8;font-size:8.5px;transform:scaleX(0.86);transform-origin:0 0;">Box Select</div>
<svg style="position:absolute;left:165px;top:680.5px;" width="8" height="11" viewBox="0 0 8 11"><rect x="1" y="1" width="6" height="9" rx="3" fill="none" stroke="#bbb" stroke-width="0.9"/><path d="M4 1 V4.5" stroke="#bbb" stroke-width="0.8"/></svg>
<div class="t" style="left:180px;top:680.5px;height:12px;line-height:12px;color:#c8c8c8;font-size:8.5px;transform:scaleX(0.86);transform-origin:0 0;">Pan View</div>
<svg style="position:absolute;left:323px;top:680.5px;" width="8" height="11" viewBox="0 0 8 11"><rect x="1" y="1" width="6" height="9" rx="3" fill="none" stroke="#bbb" stroke-width="0.9"/><path d="M4 1 V4.5" stroke="#bbb" stroke-width="0.8"/></svg>
<div class="t" style="left:337px;top:680.5px;height:12px;line-height:12px;color:#c8c8c8;font-size:8.5px;transform:scaleX(0.86);transform-origin:0 0;">UV Context Menu</div>
<div class="t" style="right:11px;top:680.5px;height:12px;line-height:12px;color:#c0c0c0;font-size:8.5px;transform:scaleX(0.86);transform-origin:100% 0;transform:scaleX(0.895)">Cube | Verts:8/8 | Edges:12/12 | Faces:6/6 | Tris:12 | Objects:1/3 | 2.90.0</div>
</body></html>
